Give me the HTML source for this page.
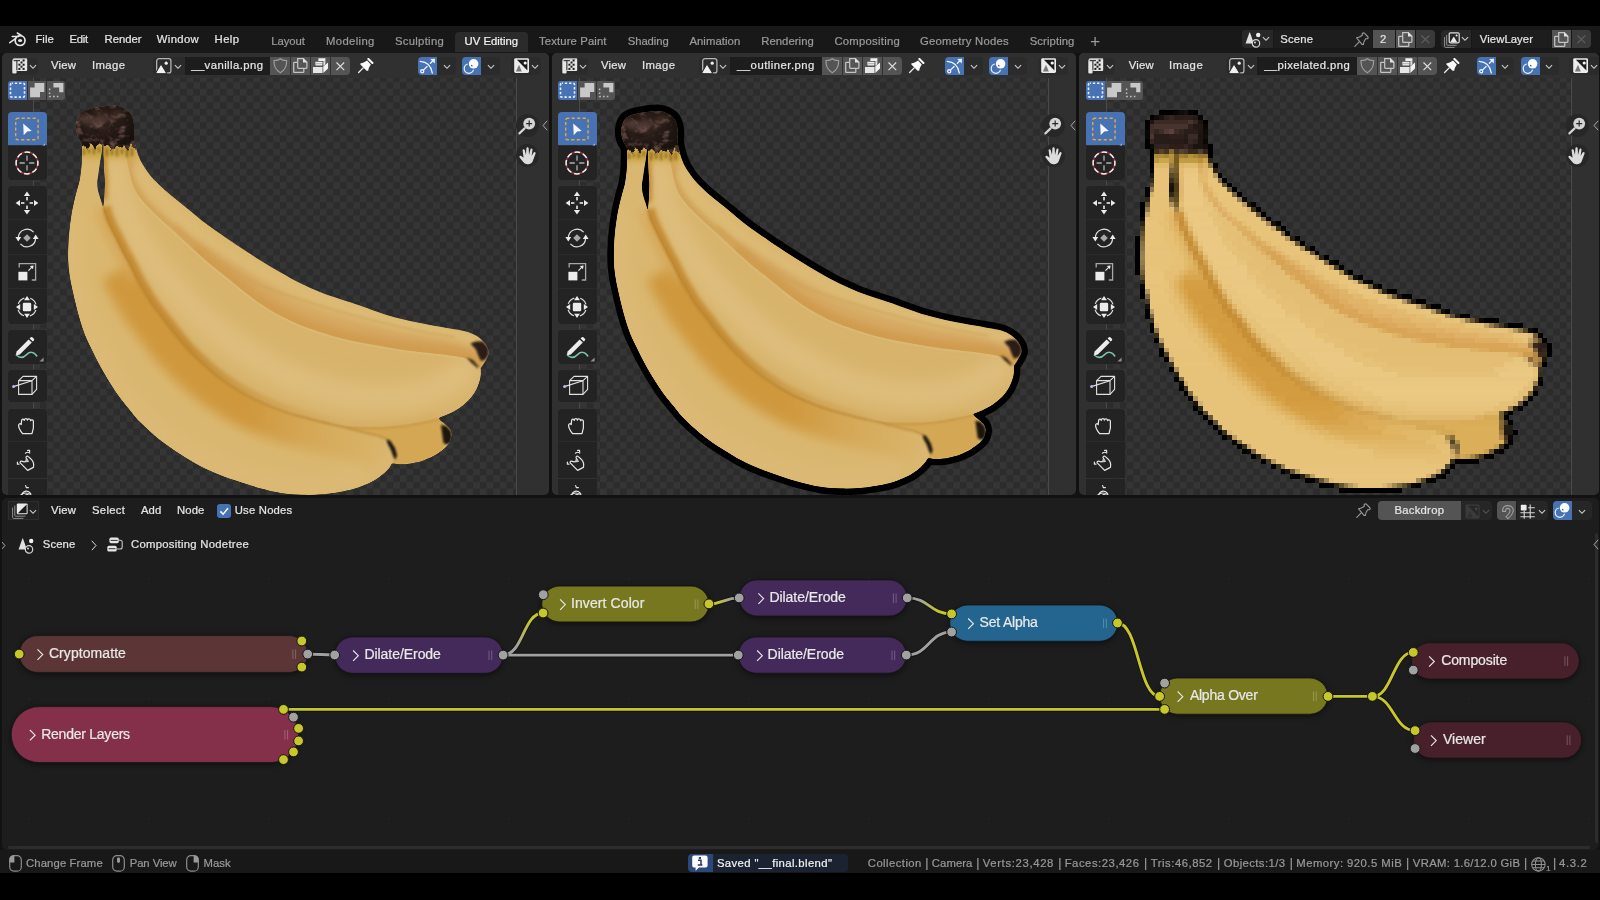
<!DOCTYPE html>
<html lang="en"><head><meta charset="utf-8"><title>Blender - UV Editing</title>
<style>
html,body{margin:0;padding:0;background:#000;}
body{width:1600px;height:900px;position:relative;overflow:hidden;will-change:transform;font-family:"Liberation Sans",sans-serif;}
div,span,svg{position:absolute;}
span{white-space:pre;line-height:1;-webkit-text-stroke:0.22px currentColor;}
.ed{border-radius:5px;overflow:hidden;}
.chk{background-color:#2c2c2c;background-image:conic-gradient(#353535 25%,#2c2c2c 0 50%,#353535 0 75%,#2c2c2c 0);background-size:13.3333px 13.3333px;}
</style></head>
<body>
<div style="left:0.00px;top:26.00px;width:1600.00px;height:847.00px;background:#121212;"></div>
<div style="left:0.00px;top:26.00px;width:1600.00px;height:27.00px;background:#181818;"></div>
<span style="left:35.40px;top:33.98px;font-size:11.3px;color:#e4e4e4;letter-spacing:0.049px;">File</span>
<span style="left:69.50px;top:33.98px;font-size:11.3px;color:#e4e4e4;letter-spacing:-0.240px;">Edit</span>
<span style="left:104.50px;top:33.98px;font-size:11.3px;color:#e4e4e4;letter-spacing:-0.013px;">Render</span>
<span style="left:156.75px;top:33.98px;font-size:11.3px;color:#e4e4e4;letter-spacing:0.357px;">Window</span>
<span style="left:214.60px;top:33.98px;font-size:11.3px;color:#e4e4e4;letter-spacing:0.419px;">Help</span>
<div style="left:455.00px;top:31.50px;width:72.50px;height:20.00px;background:#2b2b2b;border-radius:4px 4px 0 0;"></div>
<span style="left:271.25px;top:35.78px;font-size:11.3px;color:#9a9a9a;letter-spacing:-0.035px;">Layout</span>
<span style="left:326.00px;top:35.78px;font-size:11.3px;color:#9a9a9a;letter-spacing:0.364px;">Modeling</span>
<span style="left:395.00px;top:35.78px;font-size:11.3px;color:#9a9a9a;letter-spacing:0.283px;">Sculpting</span>
<span style="left:464.60px;top:35.78px;font-size:11.3px;color:#f0f0f0;">UV Editing</span>
<span style="left:539.00px;top:35.78px;font-size:11.3px;color:#9a9a9a;letter-spacing:0.129px;">Texture Paint</span>
<span style="left:627.75px;top:35.78px;font-size:11.3px;color:#9a9a9a;letter-spacing:-0.079px;">Shading</span>
<span style="left:689.40px;top:35.78px;font-size:11.3px;color:#9a9a9a;letter-spacing:0.075px;">Animation</span>
<span style="left:761.25px;top:35.78px;font-size:11.3px;color:#9a9a9a;letter-spacing:0.045px;">Rendering</span>
<span style="left:834.40px;top:35.78px;font-size:11.3px;color:#9a9a9a;letter-spacing:0.254px;">Compositing</span>
<span style="left:920.00px;top:35.78px;font-size:11.3px;color:#9a9a9a;letter-spacing:0.256px;">Geometry Nodes</span>
<span style="left:1029.75px;top:35.78px;font-size:11.3px;color:#9a9a9a;letter-spacing:0.085px;">Scripting</span>
<span style="left:1090.10px;top:33.84px;font-size:17.5px;color:#9a9a9a;-webkit-text-stroke:0;">+</span>
<div style="left:1242.00px;top:29.60px;width:31.00px;height:18.80px;background:#282828;border-radius:4px 0 0 4px;"></div>
<div style="left:1273.50px;top:29.60px;width:98.50px;height:18.80px;background:#1d1d1d;"></div>
<div style="left:1372.50px;top:29.60px;width:22.50px;height:18.80px;background:#545454;"></div>
<div style="left:1395.50px;top:29.60px;width:19.50px;height:18.80px;background:#545454;"></div>
<div style="left:1415.50px;top:29.60px;width:19.25px;height:18.80px;background:#3a3a3a;border-radius:0 4px 4px 0;"></div>
<span style="left:1280.25px;top:33.98px;font-size:11.3px;color:#e4e4e4;letter-spacing:0.179px;">Scene</span>
<span style="left:1380.00px;top:33.98px;font-size:11.3px;color:#e4e4e4;">2</span>
<div style="left:1440.60px;top:29.60px;width:30.90px;height:18.80px;background:#282828;border-radius:4px 0 0 4px;"></div>
<div style="left:1472.00px;top:29.60px;width:79.00px;height:18.80px;background:#1d1d1d;"></div>
<div style="left:1551.50px;top:29.60px;width:19.50px;height:18.80px;background:#545454;"></div>
<div style="left:1571.50px;top:29.60px;width:19.10px;height:18.80px;background:#3a3a3a;border-radius:0 4px 4px 0;"></div>
<span style="left:1479.75px;top:33.98px;font-size:11.3px;color:#e4e4e4;letter-spacing:0.087px;">ViewLayer</span>
<svg class="a" style="left:9.00px;top:32.30px" width="18" height="16" viewBox="0 0 18 16"><g fill="none" stroke="#e6e6e6" stroke-linecap="round"><circle cx="11.1" cy="8.6" r="4.9" stroke-width="1.7"/><path d="M8.3 1L12.3 3.5M3.2 4.5H9.8M0.8 10.7L6.8 6.3" stroke-width="1.5"/></g><ellipse cx="11.1" cy="8.5" rx="2.1" ry="1.5" fill="#e6e6e6"/></svg>
<svg class="a" style="left:1245.00px;top:31.50px" width="16" height="16" viewBox="0 0 16 16"><path d="M5 0.4L7.8 8.6V11.4H0.6L4.4 0.4Z" fill="#e0e0e0"/><circle cx="13.2" cy="3" r="2.2" fill="#f0f0f0"/><circle cx="11" cy="11.4" r="3.7" fill="none" stroke="#d6d6d6" stroke-width="1.2"/><circle cx="10" cy="10.4" r="1" fill="#d6d6d6"/></svg>
<svg class="a" style="left:1262.00px;top:36.30px" width="8" height="6" viewBox="0 0 8 6"><path d="M0.9 1.2L4 4.3l3.1-3.1" stroke="#d0d0d0" stroke-width="1.1" fill="none"/></svg>
<svg class="a" style="left:1353.50px;top:31.50px" width="16" height="16" viewBox="0 0 16 16"><g fill="none" stroke="#9a9a9a" stroke-width="1.1" stroke-linejoin="round" stroke-linecap="round"><path d="M0.8 14.3L5.2 9.9"/><path d="M2.6 5.8Q5.6 5.4 8.3 3.2L8.2 1.6Q9.5 0.2 10.6 1.4L13.6 4.5Q14.8 5.6 13.4 6.8L11.8 6.7Q9.6 9.4 9.4 12.4L8 12.4Z"/></g></svg>
<svg class="a" style="left:1398.00px;top:31.50px" width="15" height="15" viewBox="0 0 15 15"><g fill="none" stroke="#c4c4c4" stroke-width="1.25"><path d="M4 4.3H1.3Q0.7 4.3 0.7 4.9V13.7Q0.7 14.3 1.3 14.3H10.2Q10.8 14.3 10.8 13.7V11"/><path d="M4.7 0.7H10.4L13.9 4.2V9.6Q13.9 10.3 13.2 10.3H5.4Q4.7 10.3 4.7 9.6Z"/></g><path d="M10 0.2L14.4 4.6H10Z" fill="#e4e4e4"/></svg>
<svg class="a" style="left:1420.80px;top:34.60px" width="9" height="9" viewBox="0 0 9 9"><path d="M0.5 0.5L8.2 8.2M8.2 0.5L0.5 8.2" stroke="#5e5e5e" stroke-width="1.2" fill="none"/></svg>
<svg class="a" style="left:1444.00px;top:31.50px" width="16" height="16" viewBox="0 0 16 16"><g fill="none" stroke="#8e8e8e" stroke-width="1"><path d="M0.6 5V14.4Q0.6 15.4 1.6 15.4H10.6"/><path d="M2.7 3V12.3Q2.7 13.3 3.7 13.3H12.6"/></g><rect x="5.2" y="0.8" width="10" height="10" rx="1.2" fill="none" stroke="#dedede" stroke-width="1.2"/><path d="M6.2 10.2L9.8 4.6L13.2 10.2Z" fill="#ececec"/><circle cx="12.6" cy="3.6" r="1" fill="#ececec"/></svg>
<svg class="a" style="left:1461.00px;top:36.30px" width="8" height="6" viewBox="0 0 8 6"><path d="M0.9 1.2L4 4.3l3.1-3.1" stroke="#d0d0d0" stroke-width="1.1" fill="none"/></svg>
<svg class="a" style="left:1553.50px;top:31.50px" width="15" height="15" viewBox="0 0 15 15"><g fill="none" stroke="#c4c4c4" stroke-width="1.25"><path d="M4 4.3H1.3Q0.7 4.3 0.7 4.9V13.7Q0.7 14.3 1.3 14.3H10.2Q10.8 14.3 10.8 13.7V11"/><path d="M4.7 0.7H10.4L13.9 4.2V9.6Q13.9 10.3 13.2 10.3H5.4Q4.7 10.3 4.7 9.6Z"/></g><path d="M10 0.2L14.4 4.6H10Z" fill="#e4e4e4"/></svg>
<svg class="a" style="left:1576.60px;top:34.60px" width="9" height="9" viewBox="0 0 9 9"><path d="M0.5 0.5L8.2 8.2M8.2 0.5L0.5 8.2" stroke="#5e5e5e" stroke-width="1.2" fill="none"/></svg>
<div class="ed" style="left:1.5px;top:52.5px;width:547.0px;height:442.5px;background:#303030">
<div class="chk" style="left:31.50px;top:25.50px;width:483.30px;height:417px;background-position:-6.33px -9.13px"></div>
<div style="left:31.00px;top:25.50px;width:1.00px;height:417.00px;background:#4a4a4a;"></div>
<div style="left:514.30px;top:25.50px;width:1.00px;height:417.00px;background:#4a4a4a;"></div>
<svg class="a" style="left:31.50px;top:25.50px" width="483.30" height="417.00" viewBox="33.00 78.00 483.30 417.00" preserveAspectRatio="none">
<defs><clipPath id="b0clipA"><path d="M392.5 463.6C392.1 464.2 391.2 465.5 390.0 467.0C388.8 468.5 387.5 470.3 385.0 472.5C382.5 474.7 378.5 477.9 375.0 480.0C371.5 482.1 367.3 483.9 364.0 485.3C360.7 486.7 358.5 487.6 355.0 488.6C351.5 489.6 348.5 490.4 343.0 491.4C337.5 492.3 328.8 493.7 322.0 494.3C315.2 494.9 308.8 495.0 302.0 494.8C295.2 494.6 288.0 494.1 281.0 493.0C274.0 491.9 266.8 490.0 260.0 488.2C253.2 486.4 246.7 484.2 240.0 482.0C233.3 479.8 226.7 477.7 220.0 475.0C213.3 472.3 206.7 469.5 200.0 466.0C193.3 462.5 186.7 458.3 180.0 454.0C173.3 449.7 166.7 445.3 160.0 440.0C153.3 434.7 145.2 427.2 140.0 422.0C134.8 416.8 132.7 413.5 129.0 409.0C125.3 404.5 121.7 400.2 118.0 395.0C114.3 389.8 110.3 383.5 107.0 378.0C103.7 372.5 100.5 366.7 98.0 362.0C95.5 357.3 94.2 354.5 92.0 350.0C89.8 345.5 87.0 340.0 85.0 335.0C83.0 330.0 81.5 325.0 80.0 320.0C78.5 315.0 77.2 310.0 76.0 305.0C74.8 300.0 73.6 295.0 72.5 290.0C71.4 285.0 70.3 280.0 69.6 275.0C68.9 270.0 68.4 265.0 68.2 260.0C68.0 255.0 68.2 250.0 68.4 245.0C68.6 240.0 69.0 235.0 69.5 230.0C70.0 225.0 70.8 219.7 71.5 215.0C72.2 210.3 73.1 206.2 74.0 202.0C74.9 197.8 76.0 193.7 77.0 190.0C78.0 186.3 79.0 183.7 79.7 180.0C80.4 176.3 80.9 172.0 81.3 168.0C81.7 164.0 81.9 159.7 82.0 156.0C82.1 152.3 81.7 148.2 82.0 146.0C82.3 143.8 80.7 143.5 84.0 143.0C87.3 142.5 98.9 142.8 102.0 143.0C105.1 143.2 102.7 142.0 102.6 144.0C102.5 146.0 101.7 151.5 101.2 155.0C100.7 158.5 100.1 161.7 99.6 165.0C99.1 168.3 98.6 172.0 98.2 175.0C97.8 178.0 97.2 180.4 97.2 183.0C97.2 185.6 97.4 187.7 98.0 190.5C98.6 193.3 99.9 197.2 100.8 200.0C101.7 202.8 102.5 204.5 103.2 207.0C103.9 209.5 104.0 212.0 105.0 215.0C106.0 218.0 107.5 221.7 109.0 225.0C110.5 228.3 112.3 231.7 114.0 235.0C115.7 238.3 117.3 241.7 119.0 245.0C120.7 248.3 122.2 251.7 124.0 255.0C125.8 258.3 127.4 261.0 129.5 265.0C131.6 269.0 134.0 274.5 136.4 279.0C138.8 283.5 141.3 287.6 144.0 292.0C146.7 296.4 149.1 300.8 152.4 305.5C155.7 310.2 160.4 315.9 164.0 320.5C167.6 325.1 170.0 328.6 173.8 333.3C177.6 338.1 182.3 343.9 187.0 349.0C191.7 354.1 197.0 358.9 202.2 363.6C207.4 368.3 212.1 372.6 218.0 377.0C223.9 381.4 231.6 386.4 237.8 390.2C244.0 393.9 249.1 396.6 255.0 399.5C260.9 402.4 267.5 405.2 273.3 407.5C279.1 409.8 284.1 411.6 290.0 413.5C295.9 415.4 302.2 416.9 308.9 418.7C315.6 420.4 323.1 422.3 330.0 424.0C336.9 425.7 343.3 427.3 350.0 429.0C356.7 430.7 365.0 432.8 370.0 434.0C375.0 435.2 377.2 435.6 380.0 436.5C382.8 437.4 384.9 437.9 387.0 439.5C389.1 441.1 391.2 443.4 392.5 446.0C393.8 448.6 395.0 452.1 395.0 455.0C395.0 457.9 392.9 462.2 392.5 463.6C392.1 465.0 392.9 463.0 392.5 463.6Z"/></clipPath><clipPath id="b0clipB"><path d="M124.5 147.5C125.1 150.8 126.2 156.8 127.5 162.5C128.8 168.2 130.0 176.2 132.0 182.0C134.0 187.8 136.0 192.0 139.5 197.0C143.0 202.0 147.8 206.8 153.0 212.0C158.2 217.2 164.5 222.5 171.0 228.5C177.5 234.5 185.5 242.1 192.0 248.0C198.5 253.9 203.7 258.7 210.0 264.0C216.3 269.3 224.3 275.4 230.0 280.0C235.7 284.6 239.0 287.6 244.0 291.5C249.0 295.4 254.0 299.5 260.0 303.5C266.0 307.5 273.3 311.9 280.0 315.5C286.7 319.1 293.3 322.2 300.0 325.0C306.7 327.8 313.3 329.8 320.0 332.0C326.7 334.2 333.3 336.2 340.0 338.0C346.7 339.8 353.3 341.2 360.0 342.5C366.7 343.8 373.3 344.8 380.0 346.0C386.7 347.2 393.3 348.5 400.0 349.5C406.7 350.5 411.7 351.0 420.0 352.0C428.3 353.0 442.0 354.2 450.0 355.5C458.0 356.8 462.9 357.3 468.0 359.5C473.1 361.7 478.4 365.8 480.5 368.5C482.6 371.2 480.9 373.6 480.6 376.0C480.4 378.4 479.9 380.3 479.0 383.0C478.1 385.7 476.8 389.0 475.0 392.0C473.2 395.0 470.8 398.2 468.0 401.0C465.2 403.8 461.3 406.8 458.0 409.0C454.7 411.2 451.2 412.8 448.0 414.3C444.8 415.9 443.7 417.0 439.0 418.3C434.3 419.6 426.5 421.1 420.0 422.3C413.5 423.5 406.7 424.9 400.0 425.7C393.3 426.5 388.3 427.0 380.0 427.2C371.7 427.4 358.3 427.3 350.0 426.8C341.7 426.3 336.9 425.4 330.0 424.0C323.1 422.6 315.6 420.4 308.9 418.7C302.2 416.9 295.9 415.4 290.0 413.5C284.1 411.6 279.1 409.8 273.3 407.5C267.5 405.2 260.9 402.4 255.0 399.5C249.1 396.6 244.0 393.9 237.8 390.2C231.6 386.4 223.9 381.4 218.0 377.0C212.1 372.6 207.4 368.3 202.2 363.6C197.0 358.9 191.7 354.1 187.0 349.0C182.3 343.9 177.6 338.1 173.8 333.3C170.0 328.6 167.6 325.1 164.0 320.5C160.4 315.9 155.7 310.2 152.4 305.5C149.1 300.8 146.7 296.4 144.0 292.0C141.3 287.6 138.8 283.5 136.4 279.0C134.0 274.5 131.6 269.0 129.5 265.0C127.4 261.0 125.8 258.3 124.0 255.0C122.2 251.7 120.7 248.3 119.0 245.0C117.3 241.7 115.7 238.3 114.0 235.0C112.3 231.7 110.5 228.3 109.0 225.0C107.5 221.7 106.0 218.0 105.0 215.0C104.0 212.0 103.3 209.5 103.2 207.0C103.1 204.5 103.9 202.8 104.2 200.0C104.5 197.2 104.7 193.3 104.8 190.0C104.9 186.7 105.1 183.3 105.0 180.0C104.9 176.7 104.5 173.7 104.3 170.0C104.1 166.3 103.9 162.0 103.8 158.0C103.7 154.0 103.2 148.5 103.6 146.0C104.0 143.5 102.6 143.5 106.0 143.0C109.4 142.5 120.9 142.2 124.0 143.0C127.1 143.8 123.9 144.2 124.5 147.5Z"/></clipPath><clipPath id="b0bclip"><path clip-rule="evenodd" d="M82.0 146.0C81.8 145.3 81.7 143.5 81.0 142.0C80.3 140.5 78.8 138.8 78.0 137.0C77.2 135.2 76.6 133.0 76.3 131.0C76.0 129.0 75.8 127.2 76.0 125.0C76.2 122.8 76.8 120.0 77.5 118.0C78.2 116.0 79.2 114.3 80.5 113.0C81.8 111.7 83.1 111.1 85.0 110.3C86.9 109.5 89.5 108.8 92.0 108.2C94.5 107.6 97.3 107.2 100.0 106.8C102.7 106.4 105.5 106.0 108.0 105.8C110.5 105.6 112.7 105.3 115.0 105.6C117.3 105.8 119.8 106.4 122.0 107.3C124.2 108.2 126.4 109.5 128.0 110.8C129.6 112.1 130.6 113.5 131.5 115.0C132.4 116.5 132.8 117.8 133.3 120.0C133.8 122.2 134.3 125.3 134.4 128.0C134.5 130.7 133.9 133.5 134.0 136.0C134.1 138.5 134.8 141.8 135.0 143.0C135.3 144.3 136.2 148.3 137.0 151.0C137.8 153.7 138.7 156.2 140.0 159.0C141.3 161.8 143.3 165.3 145.0 168.0C146.7 170.7 148.3 172.9 150.0 175.0C151.7 177.1 152.5 178.0 155.0 180.5C157.5 183.0 161.3 186.8 165.0 190.0C168.7 193.2 172.8 196.6 177.0 200.0C181.2 203.4 185.8 207.1 190.0 210.5C194.2 213.9 197.8 217.2 202.0 220.5C206.2 223.8 210.7 226.9 215.0 230.0C219.3 233.1 223.8 236.2 228.0 239.0C232.2 241.8 234.7 243.5 240.0 247.0C245.3 250.5 253.3 255.8 260.0 260.0C266.7 264.2 273.3 268.2 280.0 272.0C286.7 275.8 293.3 279.7 300.0 283.0C306.7 286.3 313.3 289.3 320.0 292.0C326.7 294.7 333.3 296.8 340.0 299.0C346.7 301.2 354.2 303.5 360.0 305.5C365.8 307.5 370.0 309.2 375.0 311.0C380.0 312.8 384.2 314.3 390.0 316.0C395.8 317.7 403.3 319.5 410.0 321.0C416.7 322.5 423.3 323.8 430.0 325.0C436.7 326.2 444.2 327.5 450.0 328.5C455.8 329.5 460.8 330.1 465.0 331.2C469.2 332.3 472.0 333.4 475.0 335.0C478.0 336.6 480.9 338.8 483.0 341.0C485.1 343.2 486.7 345.8 487.6 348.0C488.5 350.2 488.7 352.2 488.5 354.0C488.3 355.8 487.3 357.3 486.5 359.0C485.7 360.7 484.5 362.4 483.5 364.0C482.5 365.6 481.0 367.8 480.5 368.5C480.5 369.8 480.9 373.6 480.6 376.0C480.4 378.4 479.9 380.3 479.0 383.0C478.1 385.7 476.8 389.0 475.0 392.0C473.2 395.0 470.8 398.2 468.0 401.0C465.2 403.8 461.3 406.8 458.0 409.0C454.7 411.2 451.2 412.8 448.0 414.3C444.8 415.9 439.5 416.7 439.0 418.3C438.5 419.9 443.2 422.2 445.0 424.0C446.8 425.8 448.9 427.2 450.0 429.0C451.1 430.8 451.6 432.7 451.7 434.5C451.8 436.3 451.2 438.2 450.6 440.0C450.0 441.8 449.4 443.2 448.0 445.0C446.6 446.8 444.3 448.7 442.0 450.5C439.7 452.3 437.3 454.1 434.0 455.8C430.7 457.6 426.0 459.7 422.0 461.0C418.0 462.3 413.7 463.1 410.0 463.7C406.3 464.2 402.9 464.3 400.0 464.3C397.1 464.3 394.2 463.2 392.5 463.6C390.8 464.1 391.2 465.5 390.0 467.0C388.8 468.5 387.5 470.3 385.0 472.5C382.5 474.7 378.5 477.9 375.0 480.0C371.5 482.1 367.3 483.9 364.0 485.3C360.7 486.7 358.5 487.6 355.0 488.6C351.5 489.6 348.5 490.4 343.0 491.4C337.5 492.3 328.8 493.7 322.0 494.3C315.2 494.9 308.8 495.0 302.0 494.8C295.2 494.6 288.0 494.1 281.0 493.0C274.0 491.9 266.8 490.0 260.0 488.2C253.2 486.4 246.7 484.2 240.0 482.0C233.3 479.8 226.7 477.7 220.0 475.0C213.3 472.3 206.7 469.5 200.0 466.0C193.3 462.5 186.7 458.3 180.0 454.0C173.3 449.7 166.7 445.3 160.0 440.0C153.3 434.7 145.2 427.2 140.0 422.0C134.8 416.8 132.7 413.5 129.0 409.0C125.3 404.5 121.7 400.2 118.0 395.0C114.3 389.8 110.3 383.5 107.0 378.0C103.7 372.5 100.5 366.7 98.0 362.0C95.5 357.3 94.2 354.5 92.0 350.0C89.8 345.5 87.0 340.0 85.0 335.0C83.0 330.0 81.5 325.0 80.0 320.0C78.5 315.0 77.2 310.0 76.0 305.0C74.8 300.0 73.6 295.0 72.5 290.0C71.4 285.0 70.3 280.0 69.6 275.0C68.9 270.0 68.4 265.0 68.2 260.0C68.0 255.0 68.2 250.0 68.4 245.0C68.6 240.0 69.0 235.0 69.5 230.0C70.0 225.0 70.8 219.7 71.5 215.0C72.2 210.3 73.1 206.2 74.0 202.0C74.9 197.8 76.0 193.7 77.0 190.0C78.0 186.3 79.0 183.7 79.7 180.0C80.4 176.3 80.9 172.0 81.3 168.0C81.7 164.0 81.9 159.7 82.0 156.0C82.1 152.3 82.0 147.7 82.0 146.0ZM102.6 144.0C102.2 145.5 101.7 151.5 101.2 155.0C100.7 158.5 100.1 161.7 99.6 165.0C99.1 168.3 98.6 172.0 98.2 175.0C97.8 178.0 97.2 180.4 97.2 183.0C97.2 185.6 97.4 187.7 98.0 190.5C98.6 193.3 99.9 197.2 100.8 200.0C101.7 202.8 102.6 207.0 103.2 207.0C103.8 207.0 103.9 202.8 104.2 200.0C104.5 197.2 104.7 193.3 104.8 190.0C104.9 186.7 105.1 183.3 105.0 180.0C104.9 176.7 104.5 173.7 104.3 170.0C104.1 166.3 103.9 162.0 103.8 158.0C103.7 154.0 103.8 148.3 103.6 146.0C103.4 143.7 103.0 142.5 102.6 144.0Z"/></clipPath>
<filter id="b0bl3" filterUnits="userSpaceOnUse" x="30" y="70" width="500" height="460"><feGaussianBlur stdDeviation="3"/></filter>
<filter id="b0bl6" filterUnits="userSpaceOnUse" x="30" y="70" width="500" height="460"><feGaussianBlur stdDeviation="6"/></filter>
<filter id="b0bl10" filterUnits="userSpaceOnUse" x="30" y="70" width="500" height="460"><feGaussianBlur stdDeviation="10"/></filter>
<filter id="b0bl1" filterUnits="userSpaceOnUse" x="30" y="70" width="500" height="460"><feGaussianBlur stdDeviation="1.2"/></filter>
<filter id="b0bl2" filterUnits="userSpaceOnUse" x="30" y="70" width="500" height="460"><feGaussianBlur stdDeviation="2"/></filter>
<filter id="b0stx" color-interpolation-filters="sRGB" filterUnits="userSpaceOnUse" x="60" y="95" width="90" height="70"><feTurbulence type="fractalNoise" baseFrequency="0.11 0.14" numOctaves="3" seed="7" result="n"/><feColorMatrix in="n" type="matrix" values="0 0 0 0 0.43  0 0 0 0 0.31  0 0 0 0 0.29  3 0 0 0 -1.5" result="sp"/><feDisplacementMap in="SourceGraphic" in2="n" scale="7" xChannelSelector="R" yChannelSelector="G" result="d"/><feGaussianBlur in="d" stdDeviation="0.7" result="db"/><feComposite in="sp" in2="db" operator="in" result="s2"/><feMerge><feMergeNode in="db"/><feMergeNode in="s2"/></feMerge></filter>
<linearGradient id="b0ga" gradientUnits="userSpaceOnUse" x1="250" y1="0" x2="385" y2="0"><stop offset="0" stop-color="#cf983e"/><stop offset="1" stop-color="#d6aa58" stop-opacity="0.25"/></linearGradient><linearGradient id="b0gb" gradientUnits="userSpaceOnUse" x1="190" y1="0" x2="345" y2="0"><stop offset="0" stop-color="#c48c34"/><stop offset="1" stop-color="#d2a250" stop-opacity="0.2"/></linearGradient>
<radialGradient id="b0stemg" cx="0.42" cy="0.4" r="0.7"><stop offset="0" stop-color="#35251f"/><stop offset="0.5" stop-color="#221814"/><stop offset="1" stop-color="#110c0a"/></radialGradient></defs>
<g clip-path="url(#b0bclip)">
<path d="M82.0 146.0C81.8 145.3 81.7 143.5 81.0 142.0C80.3 140.5 78.8 138.8 78.0 137.0C77.2 135.2 76.6 133.0 76.3 131.0C76.0 129.0 75.8 127.2 76.0 125.0C76.2 122.8 76.8 120.0 77.5 118.0C78.2 116.0 79.2 114.3 80.5 113.0C81.8 111.7 83.1 111.1 85.0 110.3C86.9 109.5 89.5 108.8 92.0 108.2C94.5 107.6 97.3 107.2 100.0 106.8C102.7 106.4 105.5 106.0 108.0 105.8C110.5 105.6 112.7 105.3 115.0 105.6C117.3 105.8 119.8 106.4 122.0 107.3C124.2 108.2 126.4 109.5 128.0 110.8C129.6 112.1 130.6 113.5 131.5 115.0C132.4 116.5 132.8 117.8 133.3 120.0C133.8 122.2 134.3 125.3 134.4 128.0C134.5 130.7 133.9 133.5 134.0 136.0C134.1 138.5 134.8 141.8 135.0 143.0C135.3 144.3 136.2 148.3 137.0 151.0C137.8 153.7 138.7 156.2 140.0 159.0C141.3 161.8 143.3 165.3 145.0 168.0C146.7 170.7 148.3 172.9 150.0 175.0C151.7 177.1 152.5 178.0 155.0 180.5C157.5 183.0 161.3 186.8 165.0 190.0C168.7 193.2 172.8 196.6 177.0 200.0C181.2 203.4 185.8 207.1 190.0 210.5C194.2 213.9 197.8 217.2 202.0 220.5C206.2 223.8 210.7 226.9 215.0 230.0C219.3 233.1 223.8 236.2 228.0 239.0C232.2 241.8 234.7 243.5 240.0 247.0C245.3 250.5 253.3 255.8 260.0 260.0C266.7 264.2 273.3 268.2 280.0 272.0C286.7 275.8 293.3 279.7 300.0 283.0C306.7 286.3 313.3 289.3 320.0 292.0C326.7 294.7 333.3 296.8 340.0 299.0C346.7 301.2 354.2 303.5 360.0 305.5C365.8 307.5 370.0 309.2 375.0 311.0C380.0 312.8 384.2 314.3 390.0 316.0C395.8 317.7 403.3 319.5 410.0 321.0C416.7 322.5 423.3 323.8 430.0 325.0C436.7 326.2 444.2 327.5 450.0 328.5C455.8 329.5 460.8 330.1 465.0 331.2C469.2 332.3 472.0 333.4 475.0 335.0C478.0 336.6 480.9 338.8 483.0 341.0C485.1 343.2 486.7 345.8 487.6 348.0C488.5 350.2 488.7 352.2 488.5 354.0C488.3 355.8 487.3 357.3 486.5 359.0C485.7 360.7 484.5 362.4 483.5 364.0C482.5 365.6 481.0 367.8 480.5 368.5C480.5 369.8 480.9 373.6 480.6 376.0C480.4 378.4 479.9 380.3 479.0 383.0C478.1 385.7 476.8 389.0 475.0 392.0C473.2 395.0 470.8 398.2 468.0 401.0C465.2 403.8 461.3 406.8 458.0 409.0C454.7 411.2 451.2 412.8 448.0 414.3C444.8 415.9 439.5 416.7 439.0 418.3C438.5 419.9 443.2 422.2 445.0 424.0C446.8 425.8 448.9 427.2 450.0 429.0C451.1 430.8 451.6 432.7 451.7 434.5C451.8 436.3 451.2 438.2 450.6 440.0C450.0 441.8 449.4 443.2 448.0 445.0C446.6 446.8 444.3 448.7 442.0 450.5C439.7 452.3 437.3 454.1 434.0 455.8C430.7 457.6 426.0 459.7 422.0 461.0C418.0 462.3 413.7 463.1 410.0 463.7C406.3 464.2 402.9 464.3 400.0 464.3C397.1 464.3 394.2 463.2 392.5 463.6C390.8 464.1 391.2 465.5 390.0 467.0C388.8 468.5 387.5 470.3 385.0 472.5C382.5 474.7 378.5 477.9 375.0 480.0C371.5 482.1 367.3 483.9 364.0 485.3C360.7 486.7 358.5 487.6 355.0 488.6C351.5 489.6 348.5 490.4 343.0 491.4C337.5 492.3 328.8 493.7 322.0 494.3C315.2 494.9 308.8 495.0 302.0 494.8C295.2 494.6 288.0 494.1 281.0 493.0C274.0 491.9 266.8 490.0 260.0 488.2C253.2 486.4 246.7 484.2 240.0 482.0C233.3 479.8 226.7 477.7 220.0 475.0C213.3 472.3 206.7 469.5 200.0 466.0C193.3 462.5 186.7 458.3 180.0 454.0C173.3 449.7 166.7 445.3 160.0 440.0C153.3 434.7 145.2 427.2 140.0 422.0C134.8 416.8 132.7 413.5 129.0 409.0C125.3 404.5 121.7 400.2 118.0 395.0C114.3 389.8 110.3 383.5 107.0 378.0C103.7 372.5 100.5 366.7 98.0 362.0C95.5 357.3 94.2 354.5 92.0 350.0C89.8 345.5 87.0 340.0 85.0 335.0C83.0 330.0 81.5 325.0 80.0 320.0C78.5 315.0 77.2 310.0 76.0 305.0C74.8 300.0 73.6 295.0 72.5 290.0C71.4 285.0 70.3 280.0 69.6 275.0C68.9 270.0 68.4 265.0 68.2 260.0C68.0 255.0 68.2 250.0 68.4 245.0C68.6 240.0 69.0 235.0 69.5 230.0C70.0 225.0 70.8 219.7 71.5 215.0C72.2 210.3 73.1 206.2 74.0 202.0C74.9 197.8 76.0 193.7 77.0 190.0C78.0 186.3 79.0 183.7 79.7 180.0C80.4 176.3 80.9 172.0 81.3 168.0C81.7 164.0 81.9 159.7 82.0 156.0C82.1 152.3 82.0 147.7 82.0 146.0Z" fill="#dab66e"/>
<path d="M192.0 248.0C195.0 250.7 203.7 258.7 210.0 264.0C216.3 269.3 224.3 275.4 230.0 280.0C235.7 284.6 239.0 287.6 244.0 291.5C249.0 295.4 254.0 299.5 260.0 303.5C266.0 307.5 273.3 311.9 280.0 315.5C286.7 319.1 293.3 322.2 300.0 325.0C306.7 327.8 313.3 329.8 320.0 332.0C326.7 334.2 333.3 336.2 340.0 338.0C346.7 339.8 353.3 341.2 360.0 342.5C366.7 343.8 373.3 344.8 380.0 346.0C386.7 347.2 393.3 348.5 400.0 349.5C406.7 350.5 411.7 351.0 420.0 352.0C428.3 353.0 442.0 354.2 450.0 355.5C458.0 356.8 462.9 357.3 468.0 359.5C473.1 361.7 478.4 367.0 480.5 368.5" fill="none" stroke="#d5a65e" stroke-width="40" filter="url(#b0bl6)"/>
<path d="M171.0 228.5C174.5 231.8 185.5 242.1 192.0 248.0C198.5 253.9 203.7 258.7 210.0 264.0C216.3 269.3 224.3 275.4 230.0 280.0C235.7 284.6 239.0 287.6 244.0 291.5C249.0 295.4 254.0 299.5 260.0 303.5C266.0 307.5 273.3 311.9 280.0 315.5C286.7 319.1 293.3 322.2 300.0 325.0C306.7 327.8 313.3 329.8 320.0 332.0C326.7 334.2 333.3 336.2 340.0 338.0C346.7 339.8 353.3 341.2 360.0 342.5C366.7 343.8 373.3 344.8 380.0 346.0C386.7 347.2 393.3 348.5 400.0 349.5C406.7 350.5 411.7 351.0 420.0 352.0C428.3 353.0 442.0 354.2 450.0 355.5C458.0 356.8 462.9 357.3 468.0 359.5C473.1 361.7 478.4 367.0 480.5 368.5" fill="none" stroke="#d09c50" stroke-width="16" filter="url(#b0bl3)"/>
<path d="M124.5 147.5C125.0 150.0 126.2 156.8 127.5 162.5C128.8 168.2 130.0 176.2 132.0 182.0C134.0 187.8 136.0 192.0 139.5 197.0C143.0 202.0 147.8 206.8 153.0 212.0C158.2 217.2 164.5 222.5 171.0 228.5C177.5 234.5 188.5 244.8 192.0 248.0" fill="none" stroke="#d3a55c" stroke-width="12" filter="url(#b0bl3)"/>
<path d="M140.0 172.0C142.0 175.0 147.0 184.0 152.0 190.0C157.0 196.0 162.8 201.5 170.0 208.0C177.2 214.5 185.8 222.0 195.0 229.0C204.2 236.0 214.2 243.2 225.0 250.0C235.8 256.8 247.5 263.3 260.0 270.0C272.5 276.7 285.8 283.8 300.0 290.0C314.2 296.2 329.2 301.7 345.0 307.0C360.8 312.3 379.2 318.0 395.0 322.0C410.8 326.0 427.2 328.2 440.0 331.0C452.8 333.8 466.7 337.7 472.0 339.0" fill="none" stroke="#dcba74" stroke-width="12" filter="url(#b0bl3)" stroke-linecap="round"/>
<path d="M128.0 165.0C128.7 167.5 130.0 175.0 132.0 180.0C134.0 185.0 137.0 190.3 140.0 195.0C143.0 199.7 145.8 203.7 150.0 208.0C154.2 212.3 160.0 216.8 165.0 221.0C170.0 225.2 174.5 228.7 180.0 233.0C185.5 237.3 191.3 242.0 198.0 247.0C204.7 252.0 212.2 257.8 220.0 263.0C227.8 268.2 235.8 273.3 245.0 278.0C254.2 282.7 265.0 287.2 275.0 291.0C285.0 294.8 294.2 297.6 305.0 301.0C315.8 304.4 327.5 308.0 340.0 311.5C352.5 315.0 366.7 318.8 380.0 322.0C393.3 325.2 407.5 328.5 420.0 331.0C432.5 333.5 449.2 336.0 455.0 337.0" fill="none" stroke="#cda35a" stroke-width="1.6" filter="url(#b0bl1)" opacity="0.8"/>
<g clip-path="url(#b0clipB)">
<path d="M124.5 147.5C125.1 150.8 126.2 156.8 127.5 162.5C128.8 168.2 130.0 176.2 132.0 182.0C134.0 187.8 136.0 192.0 139.5 197.0C143.0 202.0 147.8 206.8 153.0 212.0C158.2 217.2 164.5 222.5 171.0 228.5C177.5 234.5 185.5 242.1 192.0 248.0C198.5 253.9 203.7 258.7 210.0 264.0C216.3 269.3 224.3 275.4 230.0 280.0C235.7 284.6 239.0 287.6 244.0 291.5C249.0 295.4 254.0 299.5 260.0 303.5C266.0 307.5 273.3 311.9 280.0 315.5C286.7 319.1 293.3 322.2 300.0 325.0C306.7 327.8 313.3 329.8 320.0 332.0C326.7 334.2 333.3 336.2 340.0 338.0C346.7 339.8 353.3 341.2 360.0 342.5C366.7 343.8 373.3 344.8 380.0 346.0C386.7 347.2 393.3 348.5 400.0 349.5C406.7 350.5 411.7 351.0 420.0 352.0C428.3 353.0 442.0 354.2 450.0 355.5C458.0 356.8 462.9 357.3 468.0 359.5C473.1 361.7 478.4 365.8 480.5 368.5C482.6 371.2 480.9 373.6 480.6 376.0C480.4 378.4 479.9 380.3 479.0 383.0C478.1 385.7 476.8 389.0 475.0 392.0C473.2 395.0 470.8 398.2 468.0 401.0C465.2 403.8 461.3 406.8 458.0 409.0C454.7 411.2 451.2 412.8 448.0 414.3C444.8 415.9 443.7 417.0 439.0 418.3C434.3 419.6 426.5 421.1 420.0 422.3C413.5 423.5 406.7 424.9 400.0 425.7C393.3 426.5 388.3 427.0 380.0 427.2C371.7 427.4 358.3 427.3 350.0 426.8C341.7 426.3 336.9 425.4 330.0 424.0C323.1 422.6 315.6 420.4 308.9 418.7C302.2 416.9 295.9 415.4 290.0 413.5C284.1 411.6 279.1 409.8 273.3 407.5C267.5 405.2 260.9 402.4 255.0 399.5C249.1 396.6 244.0 393.9 237.8 390.2C231.6 386.4 223.9 381.4 218.0 377.0C212.1 372.6 207.4 368.3 202.2 363.6C197.0 358.9 191.7 354.1 187.0 349.0C182.3 343.9 177.6 338.1 173.8 333.3C170.0 328.6 167.6 325.1 164.0 320.5C160.4 315.9 155.7 310.2 152.4 305.5C149.1 300.8 146.7 296.4 144.0 292.0C141.3 287.6 138.8 283.5 136.4 279.0C134.0 274.5 131.6 269.0 129.5 265.0C127.4 261.0 125.8 258.3 124.0 255.0C122.2 251.7 120.7 248.3 119.0 245.0C117.3 241.7 115.7 238.3 114.0 235.0C112.3 231.7 110.5 228.3 109.0 225.0C107.5 221.7 106.0 218.0 105.0 215.0C104.0 212.0 103.3 209.5 103.2 207.0C103.1 204.5 103.9 202.8 104.2 200.0C104.5 197.2 104.7 193.3 104.8 190.0C104.9 186.7 105.1 183.3 105.0 180.0C104.9 176.7 104.5 173.7 104.3 170.0C104.1 166.3 103.9 162.0 103.8 158.0C103.7 154.0 103.2 148.5 103.6 146.0C104.0 143.5 102.6 143.5 106.0 143.0C109.4 142.5 120.9 142.2 124.0 143.0C127.1 143.8 123.9 144.2 124.5 147.5Z" fill="#d7b36b"/>
<path d="M113.0 165.0C114.2 170.8 116.3 188.3 120.0 200.0C123.7 211.7 129.2 224.2 135.0 235.0C140.8 245.8 147.5 255.0 155.0 265.0C162.5 275.0 170.8 285.0 180.0 295.0C189.2 305.0 198.3 315.0 210.0 325.0C221.7 335.0 235.8 345.8 250.0 355.0C264.2 364.2 279.2 373.3 295.0 380.0C310.8 386.7 328.3 392.0 345.0 395.0C361.7 398.0 379.2 399.2 395.0 398.0C410.8 396.8 428.2 392.7 440.0 388.0C451.8 383.3 461.7 373.0 466.0 370.0" fill="none" stroke="#dfbf7f" stroke-width="26" filter="url(#b0bl10)" stroke-linecap="round"/>
<path d="M139.5 197.0C141.8 199.5 147.8 206.8 153.0 212.0C158.2 217.2 164.5 222.5 171.0 228.5C177.5 234.5 185.5 242.1 192.0 248.0C198.5 253.9 203.7 258.7 210.0 264.0C216.3 269.3 224.3 275.4 230.0 280.0C235.7 284.6 239.0 287.6 244.0 291.5C249.0 295.4 254.0 299.5 260.0 303.5C266.0 307.5 273.3 311.9 280.0 315.5C286.7 319.1 293.3 322.2 300.0 325.0C306.7 327.8 313.3 329.8 320.0 332.0C326.7 334.2 333.3 336.2 340.0 338.0C346.7 339.8 353.3 341.2 360.0 342.5C366.7 343.8 373.3 344.8 380.0 346.0C386.7 347.2 393.3 348.5 400.0 349.5C406.7 350.5 411.7 351.0 420.0 352.0C428.3 353.0 442.0 354.2 450.0 355.5C458.0 356.8 462.9 357.3 468.0 359.5C473.1 361.7 478.4 367.0 480.5 368.5" fill="none" stroke="#e0c080" stroke-width="3" filter="url(#b0bl1)" opacity="0.7"/>
<path d="M103.2 207.0C103.5 208.3 104.0 212.0 105.0 215.0C106.0 218.0 107.5 221.7 109.0 225.0C110.5 228.3 112.3 231.7 114.0 235.0C115.7 238.3 117.3 241.7 119.0 245.0C120.7 248.3 122.2 251.7 124.0 255.0C125.8 258.3 127.4 261.0 129.5 265.0C131.6 269.0 134.0 274.5 136.4 279.0C138.8 283.5 141.3 287.6 144.0 292.0C146.7 296.4 149.1 300.8 152.4 305.5C155.7 310.2 160.4 315.9 164.0 320.5C167.6 325.1 170.0 328.6 173.8 333.3C177.6 338.1 182.3 343.9 187.0 349.0C191.7 354.1 197.0 358.9 202.2 363.6C207.4 368.3 212.1 372.6 218.0 377.0C223.9 381.4 231.6 386.4 237.8 390.2C244.0 393.9 249.1 396.6 255.0 399.5C260.9 402.4 267.5 405.2 273.3 407.5C279.1 409.8 284.1 411.6 290.0 413.5C295.9 415.4 302.2 416.9 308.9 418.7C315.6 420.4 323.1 422.6 330.0 424.0C336.9 425.4 341.7 426.3 350.0 426.8C358.3 427.3 371.7 427.4 380.0 427.2C388.3 427.0 393.3 426.5 400.0 425.7C406.7 424.9 413.5 423.5 420.0 422.3C426.5 421.1 435.8 419.0 439.0 418.3" fill="none" stroke="url(#b0gb)" stroke-width="15" filter="url(#b0bl2)"/>
<path d="M104.2 200.0C104.3 198.3 104.7 193.3 104.8 190.0C104.9 186.7 105.1 183.3 105.0 180.0C104.9 176.7 104.5 173.7 104.3 170.0C104.1 166.3 103.9 162.0 103.8 158.0C103.7 154.0 103.6 148.0 103.6 146.0" fill="none" stroke="#c48c34" stroke-width="6" filter="url(#b0bl2)"/>
</g>
<path d="M330 424L350 429L370 434L380 436.5L387 439.5L392.5 463.6L400 464.3L422 461L442 450.5L451.7 434.5L439 418.3L439 418.3L420 422.3L400 425.7L380 427.2L350 426.8L330 424Z" fill="#d3a754"/>
<path d="M330.0 424.0C333.3 424.5 341.7 426.3 350.0 426.8C358.3 427.3 371.7 427.4 380.0 427.2C388.3 427.0 393.3 426.5 400.0 425.7C406.7 424.9 413.5 423.5 420.0 422.3C426.5 421.1 435.8 419.0 439.0 418.3" fill="none" stroke="#c2903c" stroke-width="1.2" filter="url(#b0bl1)" transform="translate(0 1)"/>
<g clip-path="url(#b0clipA)">
<path d="M392.5 463.6C392.1 464.2 391.2 465.5 390.0 467.0C388.8 468.5 387.5 470.3 385.0 472.5C382.5 474.7 378.5 477.9 375.0 480.0C371.5 482.1 367.3 483.9 364.0 485.3C360.7 486.7 358.5 487.6 355.0 488.6C351.5 489.6 348.5 490.4 343.0 491.4C337.5 492.3 328.8 493.7 322.0 494.3C315.2 494.9 308.8 495.0 302.0 494.8C295.2 494.6 288.0 494.1 281.0 493.0C274.0 491.9 266.8 490.0 260.0 488.2C253.2 486.4 246.7 484.2 240.0 482.0C233.3 479.8 226.7 477.7 220.0 475.0C213.3 472.3 206.7 469.5 200.0 466.0C193.3 462.5 186.7 458.3 180.0 454.0C173.3 449.7 166.7 445.3 160.0 440.0C153.3 434.7 145.2 427.2 140.0 422.0C134.8 416.8 132.7 413.5 129.0 409.0C125.3 404.5 121.7 400.2 118.0 395.0C114.3 389.8 110.3 383.5 107.0 378.0C103.7 372.5 100.5 366.7 98.0 362.0C95.5 357.3 94.2 354.5 92.0 350.0C89.8 345.5 87.0 340.0 85.0 335.0C83.0 330.0 81.5 325.0 80.0 320.0C78.5 315.0 77.2 310.0 76.0 305.0C74.8 300.0 73.6 295.0 72.5 290.0C71.4 285.0 70.3 280.0 69.6 275.0C68.9 270.0 68.4 265.0 68.2 260.0C68.0 255.0 68.2 250.0 68.4 245.0C68.6 240.0 69.0 235.0 69.5 230.0C70.0 225.0 70.8 219.7 71.5 215.0C72.2 210.3 73.1 206.2 74.0 202.0C74.9 197.8 76.0 193.7 77.0 190.0C78.0 186.3 79.0 183.7 79.7 180.0C80.4 176.3 80.9 172.0 81.3 168.0C81.7 164.0 81.9 159.7 82.0 156.0C82.1 152.3 81.7 148.2 82.0 146.0C82.3 143.8 80.7 143.5 84.0 143.0C87.3 142.5 98.9 142.8 102.0 143.0C105.1 143.2 102.7 142.0 102.6 144.0C102.5 146.0 101.7 151.5 101.2 155.0C100.7 158.5 100.1 161.7 99.6 165.0C99.1 168.3 98.6 172.0 98.2 175.0C97.8 178.0 97.2 180.4 97.2 183.0C97.2 185.6 97.4 187.7 98.0 190.5C98.6 193.3 99.9 197.2 100.8 200.0C101.7 202.8 102.5 204.5 103.2 207.0C103.9 209.5 104.0 212.0 105.0 215.0C106.0 218.0 107.5 221.7 109.0 225.0C110.5 228.3 112.3 231.7 114.0 235.0C115.7 238.3 117.3 241.7 119.0 245.0C120.7 248.3 122.2 251.7 124.0 255.0C125.8 258.3 127.4 261.0 129.5 265.0C131.6 269.0 134.0 274.5 136.4 279.0C138.8 283.5 141.3 287.6 144.0 292.0C146.7 296.4 149.1 300.8 152.4 305.5C155.7 310.2 160.4 315.9 164.0 320.5C167.6 325.1 170.0 328.6 173.8 333.3C177.6 338.1 182.3 343.9 187.0 349.0C191.7 354.1 197.0 358.9 202.2 363.6C207.4 368.3 212.1 372.6 218.0 377.0C223.9 381.4 231.6 386.4 237.8 390.2C244.0 393.9 249.1 396.6 255.0 399.5C260.9 402.4 267.5 405.2 273.3 407.5C279.1 409.8 284.1 411.6 290.0 413.5C295.9 415.4 302.2 416.9 308.9 418.7C315.6 420.4 323.1 422.3 330.0 424.0C336.9 425.7 343.3 427.3 350.0 429.0C356.7 430.7 365.0 432.8 370.0 434.0C375.0 435.2 377.2 435.6 380.0 436.5C382.8 437.4 384.9 437.9 387.0 439.5C389.1 441.1 391.2 443.4 392.5 446.0C393.8 448.6 395.0 452.1 395.0 455.0C395.0 457.9 392.9 462.2 392.5 463.6C392.1 465.0 392.9 463.0 392.5 463.6Z" fill="#dab770"/>
<path d="M129.5 265.0C130.7 267.3 134.0 274.5 136.4 279.0C138.8 283.5 141.3 287.6 144.0 292.0C146.7 296.4 149.1 300.8 152.4 305.5C155.7 310.2 160.4 315.9 164.0 320.5C167.6 325.1 170.0 328.6 173.8 333.3C177.6 338.1 182.3 343.9 187.0 349.0C191.7 354.1 197.0 358.9 202.2 363.6C207.4 368.3 212.1 372.6 218.0 377.0C223.9 381.4 231.6 386.4 237.8 390.2C244.0 393.9 249.1 396.6 255.0 399.5C260.9 402.4 267.5 405.2 273.3 407.5C279.1 409.8 284.1 411.6 290.0 413.5C295.9 415.4 302.2 416.9 308.9 418.7C315.6 420.4 323.1 422.3 330.0 424.0C336.9 425.7 343.3 427.3 350.0 429.0C356.7 430.7 365.0 432.8 370.0 434.0C375.0 435.2 377.2 435.6 380.0 436.5C382.8 437.4 385.8 439.0 387.0 439.5" fill="none" stroke="url(#b0ga)" stroke-width="62" filter="url(#b0bl6)"/>
<path d="M103.2 207.0C103.5 208.3 104.0 212.0 105.0 215.0C106.0 218.0 107.5 221.7 109.0 225.0C110.5 228.3 112.3 231.7 114.0 235.0C115.7 238.3 117.3 241.7 119.0 245.0C120.7 248.3 122.2 251.7 124.0 255.0C125.8 258.3 127.4 261.0 129.5 265.0C131.6 269.0 135.2 276.7 136.4 279.0" fill="none" stroke="#d5a654" stroke-width="14" filter="url(#b0bl6)"/>
<path d="M74.0 215.0C73.8 220.8 72.3 237.5 73.0 250.0C73.7 262.5 75.5 277.5 78.0 290.0C80.5 302.5 84.0 314.2 88.0 325.0C92.0 335.8 96.3 344.5 102.0 355.0C107.7 365.5 114.3 377.2 122.0 388.0C129.7 398.8 137.5 410.2 148.0 420.0C158.5 429.8 172.2 439.3 185.0 447.0C197.8 454.7 210.8 460.5 225.0 466.0C239.2 471.5 255.0 476.8 270.0 480.0C285.0 483.2 300.8 485.7 315.0 485.0C329.2 484.3 348.3 477.5 355.0 476.0" fill="none" stroke="#dcba76" stroke-width="16" filter="url(#b0bl6)" stroke-linecap="round"/>
</g>
<path d="M103.2 207.0C103.5 208.3 104.0 212.0 105.0 215.0C106.0 218.0 107.5 221.7 109.0 225.0C110.5 228.3 112.3 231.7 114.0 235.0C115.7 238.3 117.3 241.7 119.0 245.0C120.7 248.3 122.2 251.7 124.0 255.0C125.8 258.3 127.4 261.0 129.5 265.0C131.6 269.0 134.0 274.5 136.4 279.0C138.8 283.5 141.3 287.6 144.0 292.0C146.7 296.4 149.1 300.8 152.4 305.5C155.7 310.2 160.4 315.9 164.0 320.5C167.6 325.1 170.0 328.6 173.8 333.3C177.6 338.1 182.3 343.9 187.0 349.0C191.7 354.1 197.0 358.9 202.2 363.6C207.4 368.3 212.1 372.6 218.0 377.0C223.9 381.4 231.6 386.4 237.8 390.2C244.0 393.9 249.1 396.6 255.0 399.5C260.9 402.4 267.5 405.2 273.3 407.5C279.1 409.8 284.1 411.6 290.0 413.5C295.9 415.4 302.2 416.9 308.9 418.7C315.6 420.4 326.5 423.1 330.0 424.0" fill="none" stroke="#b07c2a" stroke-width="1.3" filter="url(#b0bl1)"/>
<path d="M330.0 424.0C333.3 424.8 343.3 427.3 350.0 429.0C356.7 430.7 365.0 432.8 370.0 434.0C375.0 435.2 377.2 435.6 380.0 436.5C382.8 437.4 385.8 439.0 387.0 439.5" fill="none" stroke="#b98a3a" stroke-width="1.4" filter="url(#b0bl1)"/>
<path d="M470.5 343.5L476 341.5L483 341.5L488.5 348L488.6 355L485.5 359.5L481 361L478.5 356L476 349.5Z" fill="#2a1a12" filter="url(#b0bl1)"/>
<path d="M466.5 357.5L473 360L478.5 366.5L478 368.5L471 362.5Z" fill="#3a2814" filter="url(#b0bl1)"/>
<path d="M441 425L446.5 426L451 431L452 437L450.5 443L446.5 444.5L443.5 443L442.5 436Z" fill="#1c140c" filter="url(#b0bl1)"/>
<path d="M386.5 439L390.5 441L395 448L397 455L395.5 459.5L393.5 457L391 450L387.5 443.5Z" fill="#1c140c" filter="url(#b0bl1)"/>
<path d="M80 151H138" stroke="#c39a2c" stroke-width="13" filter="url(#b0bl3)" opacity="0.7"/><path d="M84 149V155M89 149V153M94 148V154M99 147V152M107 148V156M112 149V155M117 148V156M122 149V154M127 149V157M132 148V156" stroke="#3a2a10" stroke-width="1.6" filter="url(#b0bl1)" opacity="0.55"/>
<path d="M70 100H140V140L136 150L132 144L128 151L124 145L121 149L117 144L113 150L108 145L104 148L99 143L95 149L90 144L86 150L82 146L70 146Z" fill="url(#b0stemg)" filter="url(#b0stx)"/>
<ellipse cx="98" cy="121" rx="13" ry="6" fill="#7a5c56" opacity="0.38" filter="url(#b0bl3)"/>
<ellipse cx="84" cy="119" rx="5" ry="5" fill="#6e5248" opacity="0.45" filter="url(#b0bl2)"/>
<ellipse cx="118" cy="114" rx="7" ry="4" fill="#5e463c" opacity="0.35" filter="url(#b0bl2)"/>
<path d="M88 112L96 116M104 126L110 122M92 128L98 131" stroke="#120c0a" stroke-width="1.6" filter="url(#b0bl1)" opacity="0.7"/>
</g>
</svg>
<div style="left:0.00px;top:0.00px;width:547.00px;height:25.00px;background:#303030;"></div>
<div style="left:8.50px;top:5.00px;width:27.50px;height:17.10px;background:#2b2b2b;border-radius:4px;"></div>
<svg class="a" style="left:10.30px;top:5.40px" width="16" height="16" viewBox="0 0 16 16"><path d="M0.3 3.2Q0.3 0.2 3 0.2H14.2Q15.2 0.2 15.2 1.2V12Q15.2 13 14.2 13H4.6V14.5Q4.6 15.6 3.4 15.6H1.5Q0.3 15.6 0.3 14.5Z" fill="#e6e6e6"/><path d="M1.4 0.8H14.6" stroke="#9a9a9a" stroke-width="0.9"/><path d="M1.6 2.7H8M4.9 2.7V12.4" stroke="#1c1c1c" stroke-width="1" fill="none"/><g fill="#1c1c1c"><rect x="10.6" y="1.5" width="2" height="2"/><rect x="8.5" y="3.5" width="2" height="2"/><rect x="6.4" y="5.7" width="2" height="2"/><rect x="10.6" y="5.7" width="2" height="2"/><rect x="8.5" y="7.7" width="2" height="2"/><rect x="6.4" y="9.9" width="2" height="2"/><rect x="10.6" y="9.9" width="2" height="2"/></g></svg>
<svg class="a" style="left:27.20px;top:11.10px" width="8" height="6" viewBox="0 0 8 6"><path d="M0.9 1.2L4 4.3l3.1-3.1" stroke="#d0d0d0" stroke-width="1.1" fill="none"/></svg>
<span style="left:49.50px;top:7.48px;font-size:11.3px;color:#e4e4e4;letter-spacing:0.227px;">View</span>
<span style="left:90.40px;top:7.48px;font-size:11.3px;color:#e4e4e4;letter-spacing:0.424px;">Image</span>
<div style="left:151.50px;top:4.50px;width:31.75px;height:18.00px;background:#2b2b2b;border-radius:4px 0 0 4px;"></div>
<svg class="a" style="left:154.70px;top:5.30px" width="16" height="16" viewBox="0 0 16 16"><rect x="0.7" y="0.7" width="14.2" height="14.2" rx="2.2" fill="none" stroke="#b4b4b4" stroke-width="1.3"/><path d="M-0.4 15.2L5 6.6L10.6 15.2Z" fill="#e6e6e6" stroke="#2b2b2b" stroke-width="1.3"/><path d="M0.3 14.9L5 7.1L9.8 14.9Z" fill="#f0f0f0"/><circle cx="10.2" cy="5.2" r="1.6" fill="#f0f0f0"/></svg>
<svg class="a" style="left:172.20px;top:11.10px" width="8" height="6" viewBox="0 0 8 6"><path d="M0.9 1.2L4 4.3l3.1-3.1" stroke="#d0d0d0" stroke-width="1.1" fill="none"/></svg>
<div style="left:183.25px;top:4.50px;width:85.25px;height:18.00px;background:#1d1d1d;"></div>
<span style="left:189.68px;top:7.48px;font-size:11.3px;color:#e4e4e4;letter-spacing:0.435px;">__vanilla.png</span>
<div style="left:268.50px;top:4.50px;width:19.75px;height:18.00px;background:#545454;"></div>
<svg class="a" style="left:271.50px;top:5.80px" width="15" height="16" viewBox="0 0 15 16"><path d="M7.3 0.7C6 2.1 3.4 2.7 1 2.7C0.8 7.3 2 11.8 7.3 14.7C12.6 11.8 13.8 7.3 13.6 2.7C11.2 2.7 8.6 2.1 7.3 0.7Z" fill="none" stroke="#9c9c9c" stroke-width="1.2"/></svg>
<div style="left:289.00px;top:4.50px;width:19.25px;height:18.00px;background:#545454;"></div>
<svg class="a" style="left:291.50px;top:5.80px" width="15" height="15" viewBox="0 0 15 15"><g fill="none" stroke="#c4c4c4" stroke-width="1.25"><path d="M4 4.3H1.3Q0.7 4.3 0.7 4.9V13.7Q0.7 14.3 1.3 14.3H10.2Q10.8 14.3 10.8 13.7V11"/><path d="M4.7 0.7H10.4L13.9 4.2V9.6Q13.9 10.3 13.2 10.3H5.4Q4.7 10.3 4.7 9.6Z"/></g><path d="M10 0.2L14.4 4.6H10Z" fill="#e4e4e4"/></svg>
<div style="left:309.00px;top:4.50px;width:19.25px;height:18.00px;background:#545454;"></div>
<svg class="a" style="left:311.10px;top:5.80px" width="16" height="16" viewBox="0 0 16 16"><path d="M0 8.9H9.5V15H0.6Q0 15 0 14.4Z" fill="#e6e6e6"/><path d="M10.3 8.6L15 4.4V10.4L10.3 15Z" fill="#f2f2f2"/><rect x="2.4" y="3.8" width="7" height="3.6" rx="0.4" fill="#e6e6e6"/><path d="M2.4 5.6H9.4" stroke="#888" stroke-width="0.5"/><path d="M5.4 0.2H12.4V3.6H10.2V3H5.4Z" fill="#f0f0f0"/><path d="M10.4 3.6H12.4V6.2L10.4 7.9Z" fill="#e0e0e0"/></svg>
<div style="left:329.00px;top:4.50px;width:19.25px;height:18.00px;background:#545454;border-radius:0 4px 4px 0;"></div>
<svg class="a" style="left:334.20px;top:9.50px" width="9" height="9" viewBox="0 0 9 9"><path d="M0.5 0.5L8.2 8.2M8.2 0.5L0.5 8.2" stroke="#dcdcdc" stroke-width="1.2" fill="none"/></svg>
<svg class="a" style="left:356.00px;top:5.80px" width="16" height="16" viewBox="0 0 16 16"><path d="M0.6 14.5L5.2 9.9" stroke="#f0f0f0" stroke-width="1.3" stroke-linecap="round"/><path d="M2.3 5.5Q5.8 5 9.1 2.6L12.8 6.4Q10.6 9.4 10.2 12.7L8.6 12.8L2.4 6.6Z" fill="#fafafa"/><path d="M10.4 0.9L14.4 4.9" stroke="#fafafa" stroke-width="2.1" stroke-linecap="round"/></svg>
<div style="left:416.50px;top:4.25px;width:19.00px;height:18.50px;background:#4772b3;border-radius:4px 0 0 4px;"></div>
<div style="left:435.50px;top:4.25px;width:18.50px;height:18.50px;background:#2b2b2b;border-radius:0 4px 4px 0;"></div>
<svg class="a" style="left:416.50px;top:4.25px" width="19" height="19" viewBox="0 0 19 19"><g fill="none" stroke="#eef3ff" stroke-width="1.3" stroke-linecap="round"><path d="M2.2 4.4Q12.5 5 14.3 16"/><circle cx="4.2" cy="14.3" r="1.55"/><path d="M5.4 13.1L9.1 9.5M12.4 6.3L15.2 3.5"/></g><path d="M17 1.7L12.2 2L16.7 6.6Z" fill="#eef3ff"/></svg>
<svg class="a" style="left:441.00px;top:11.30px" width="8" height="6" viewBox="0 0 8 6"><path d="M0.9 1.2L4 4.3l3.1-3.1" stroke="#d0d0d0" stroke-width="1.1" fill="none"/></svg>
<div style="left:460.75px;top:4.25px;width:19.00px;height:18.50px;background:#4772b3;border-radius:4px 0 0 4px;"></div>
<div style="left:479.75px;top:4.25px;width:19.00px;height:18.50px;background:#2b2b2b;border-radius:0 4px 4px 0;"></div>
<svg class="a" style="left:460.75px;top:4.25px" width="19" height="19" viewBox="0 0 19 19"><defs><mask id="ovm"><rect width="19" height="19" fill="#fff"/><circle cx="11.6" cy="6.8" r="5.9" fill="#000"/></mask></defs><circle cx="11.6" cy="6.8" r="4.8" fill="#fafcff"/><circle cx="6.9" cy="11.6" r="4.7" fill="none" stroke="#e6f0ff" stroke-width="1.25" mask="url(#ovm)"/><ellipse cx="9.8" cy="8.7" rx="1" ry="0.6" transform="rotate(40 9.8 8.7)" fill="#456"/></svg>
<svg class="a" style="left:485.25px;top:11.30px" width="8" height="6" viewBox="0 0 8 6"><path d="M0.9 1.2L4 4.3l3.1-3.1" stroke="#d0d0d0" stroke-width="1.1" fill="none"/></svg>
<div style="left:509.50px;top:4.50px;width:30.25px;height:18.00px;background:#2b2b2b;border-radius:4px;"></div>
<svg class="a" style="left:512.60px;top:5.60px" width="16" height="16" viewBox="0 0 16 16"><rect x="0.2" y="0.2" width="14.8" height="14.8" rx="1.4" fill="#ececec"/><path d="M2.9 1.7H13.4V12.4Z" fill="#1b1b1b"/><circle cx="11.2" cy="5" r="1.6" fill="#f4f4f4"/><path d="M1.9 13.4H7.8L5 6.8Z" fill="#787878"/></svg>
<svg class="a" style="left:529.70px;top:11.30px" width="8" height="6" viewBox="0 0 8 6"><path d="M0.9 1.2L4 4.3l3.1-3.1" stroke="#d0d0d0" stroke-width="1.1" fill="none"/></svg>
<div style="left:6.50px;top:28.75px;width:19.00px;height:18.50px;background:#4772b3;border-radius:3px 0 0 3px;"></div>
<div style="left:26.00px;top:28.75px;width:18.50px;height:18.50px;background:#545454;"></div>
<div style="left:45.00px;top:28.75px;width:18.50px;height:18.50px;background:#545454;border-radius:0 3px 3px 0;"></div>
<svg class="a" style="left:6.50px;top:28.75px" width="19" height="19" viewBox="0 0 19 19"><rect x="2.5" y="2.3" width="14" height="13.8" rx="1.2" fill="none" stroke="#e6eeff" stroke-width="1.6" stroke-dasharray="2.35 1.9" stroke-dashoffset="1.1"/></svg>
<svg class="a" style="left:26.00px;top:28.75px" width="19" height="19" viewBox="0 0 19 19"><path d="M6.6 1.9H16.3V10.9H12V16.3H2.1V6.6H6.6Z" fill="#c8c8c8"/></svg>
<svg class="a" style="left:45.00px;top:28.75px" width="19" height="19" viewBox="0 0 19 19"><path d="M6.4 1.9H16.4V11.2H12.2V6.4H6.4Z" fill="#c8c8c8"/><path d="M2.6 7.6V15.6H11.4" fill="none" stroke="#bdbdbd" stroke-width="1.5" stroke-dasharray="1.7 2.1"/></svg>
<div style="left:6.50px;top:59.50px;width:39.00px;height:33.00px;background:#4772b3;border-radius:4px 4px 0 0;"></div>
<svg class="a" style="left:13.20px;top:64.50px" width="31" height="30" viewBox="0 0 31 30"><rect x="0.7" y="1.2" width="22.4" height="21.6" rx="2" fill="none" stroke="#e2a83c" stroke-width="1.4" stroke-dasharray="3.2 2.3" stroke-dashoffset="1.6"/><path d="M8.2 6.6L16.8 14L12.2 14.6L8.7 18.2Z" fill="#f4f6fb"/><path d="M30 26.2V29H27.2Z" fill="#9db9e8"/></svg>
<div style="left:6.50px;top:93.00px;width:39.00px;height:34.25px;background:#232323;border-radius:0 0 4px 4px;box-shadow:0 0 0 0.6px #333;"></div>
<svg class="a" style="left:13.20px;top:98.62px" width="24" height="24" viewBox="0 0 24 24"><circle cx="12" cy="12" r="10.9" fill="none" stroke="#9a2f3c" stroke-width="1.5"/><circle cx="12" cy="12" r="10.9" fill="none" stroke="#f2f2f2" stroke-width="1.5" stroke-dasharray="5.6 2.96" stroke-dashoffset="2.8"/><path d="M4.6 12H9.8M14.2 12H19.4M12 4.6V9.8M12 14.2V19.4" stroke="#b0b0b0" stroke-width="1.3" fill="none"/></svg>
<div style="left:6.50px;top:133.50px;width:39.00px;height:33.50px;background:#232323;border-radius:4px 4px 0 0;box-shadow:0 0 0 0.6px #333;"></div>
<svg class="a" style="left:13.20px;top:138.75px" width="24" height="24" viewBox="0 0 24 24"><g fill="#ececec"><path d="M12 0.6L15.1 5H8.9Z"/><rect x="11.2" y="6" width="1.6" height="3.4"/><g transform="rotate(90 12 12)"><path d="M12 0.6L15.1 5H8.9Z"/><rect x="11.2" y="6" width="1.6" height="3.4"/></g><g transform="rotate(180 12 12)"><path d="M12 0.6L15.1 5H8.9Z"/><rect x="11.2" y="6" width="1.6" height="3.4"/></g><g transform="rotate(270 12 12)"><path d="M12 0.6L15.1 5H8.9Z"/><rect x="11.2" y="6" width="1.6" height="3.4"/></g></g></svg>
<div style="left:6.50px;top:167.50px;width:39.00px;height:34.50px;background:#232323;border-radius:0 0 0 0;box-shadow:0 0 0 0.6px #333;"></div>
<svg class="a" style="left:13.20px;top:173.25px" width="24" height="24" viewBox="0 0 24 24"><g fill="none" stroke="#e0e0e0" stroke-width="1.2"><path d="M3.4 11.4A8.7 8.7 0 0 1 18.6 6.2"/><path d="M20.6 12.6A8.7 8.7 0 0 1 5.4 17.8"/></g><path d="M0.4 11L6.2 11L3.3 15.4Z" fill="#ececec"/><path d="M23.6 13L17.8 13L20.7 8.6Z" fill="#ececec"/><path d="M12 8.2L15.8 12L12 15.8L8.2 12Z" fill="#a8a8a8"/></svg>
<div style="left:6.50px;top:202.50px;width:39.00px;height:33.50px;background:#232323;border-radius:0 0 0 0;box-shadow:0 0 0 0.6px #333;"></div>
<svg class="a" style="left:13.20px;top:207.75px" width="24" height="24" viewBox="0 0 24 24"><path d="M4.2 7.6V3.6H20.6V20H16.8" fill="none" stroke="#a8a8a8" stroke-width="1.3"/><rect x="3.4" y="11.8" width="9" height="8.6" fill="#ececec"/><path d="M13.4 10.6L17.4 6.6" stroke="#e4e4e4" stroke-width="1.2"/><path d="M18.6 5.4L14.8 6L18 9.2Z" fill="#ececec"/></svg>
<div style="left:6.50px;top:236.50px;width:39.00px;height:34.50px;background:#232323;border-radius:0 0 4px 4px;box-shadow:0 0 0 0.6px #333;"></div>
<svg class="a" style="left:13.20px;top:242.25px" width="24" height="24" viewBox="0 0 24 24"><circle cx="12" cy="12" r="9.3" fill="none" stroke="#dcdcdc" stroke-width="1.2" stroke-dasharray="8.6 6" stroke-dashoffset="-3"/><g fill="#ececec"><path d="M12 1L14.9 5.2H9.1Z"/><path d="M12 23L14.9 18.8H9.1Z"/><path d="M1 12L5.2 9.1V14.9Z"/><path d="M23 12L18.8 9.1V14.9Z"/><rect x="7.8" y="7.8" width="8.4" height="8.4" rx="1.3"/></g></svg>
<div style="left:6.50px;top:277.50px;width:39.00px;height:33.50px;background:#232323;border-radius:4px 4px 4px 4px;box-shadow:0 0 0 0.6px #333;"></div>
<svg class="a" style="left:11.70px;top:281.75px" width="31" height="28" viewBox="0 0 31 28"><path d="M3.6 17.4L15.6 5.4L18.8 8.6L6.8 20.6L2.6 21.6Z" fill="#ececec"/><path d="M16.6 4.4L17.8 3.2Q18.6 2.6 19.4 3.3L20.9 4.8Q21.6 5.6 20.9 6.4L19.8 7.6Z" fill="#ececec"/><path d="M3.6 21.2C7 24.6 10.6 23.6 13.6 20.6C16.6 17.6 20.6 17.2 23.8 22" fill="none" stroke="#78c6ac" stroke-width="1.5" stroke-linecap="round"/><path d="M30.6 23.4V27.6H26.4Z" fill="#8e8e8e"/></svg>
<div style="left:6.50px;top:317.25px;width:39.00px;height:31.85px;background:#232323;border-radius:4px 4px 4px 4px;box-shadow:0 0 0 0.6px #333;"></div>
<svg class="a" style="left:10.70px;top:321.68px" width="26" height="24" viewBox="0 0 26 24"><g fill="none" stroke="#e0e0e0" stroke-width="1.1" stroke-linejoin="round"><path d="M6.6 6.6L11 2.4H24.6V15.4L20 20.4H6.6Z"/><path d="M6.6 6.6H20V20.4M20 6.6L24.6 2.4"/><path d="M1.4 12.6L20 6.8"/></g><circle cx="1.6" cy="12.6" r="1.5" fill="#c4b8f4"/></svg>
<div style="left:6.50px;top:356.50px;width:39.00px;height:32.60px;background:#232323;border-radius:4px 4px 0 0;box-shadow:0 0 0 0.6px #333;"></div>
<svg class="a" style="left:13.20px;top:361.30px" width="24" height="24" viewBox="0 0 24 24"><path d="M7.6 19.6C5 16.4 3.6 13.6 3.6 11.2C3.6 9.6 5.4 9.2 6.2 10.6L6.6 6.6C6.8 4.8 9 4.8 9.2 6.4C9.4 4 12.2 4 12.4 6.2C12.8 4.4 15.4 4.6 15.6 6.6C16.2 5.4 18.4 5.8 18.4 7.6C18.8 11.6 18.6 15.6 17 19.6Z" fill="none" stroke="#e4e4e4" stroke-width="1.25" stroke-linejoin="round"/></svg>
<div style="left:6.50px;top:389.50px;width:39.00px;height:36.00px;background:#232323;border-radius:0 0 0 0;box-shadow:0 0 0 0.6px #333;"></div>
<svg class="a" style="left:13.20px;top:396.00px" width="24" height="24" viewBox="0 0 24 24"><g fill="none" stroke="#e4e4e4" stroke-width="1.2" stroke-linejoin="round" stroke-linecap="round"><path d="M5 13.6L12.6 21.4L18.4 18.4C19.2 15.4 18.4 12.6 16.2 10.2L13.4 7.6C12 6.2 10.2 7.8 11.4 9.4L13.2 12.4L8.6 12.8C7 11.8 5.2 11.6 5 13.6Z"/><path d="M10.4 4.2Q12.6 2.4 14.8 4"/><path d="M2.4 13V15.2H4"/><path d="M12.6 1.4H14.6V3"/></g><circle cx="11.6" cy="11.4" r="1.4" fill="#bbb"/></svg>
<div style="left:6.50px;top:426.00px;width:39.00px;height:33.50px;background:#232323;border-radius:0 0 4px 4px;box-shadow:0 0 0 0.6px #333;"></div>
<svg class="a" style="left:13.20px;top:431.25px" width="24" height="24" viewBox="0 0 24 24"><g fill="none" stroke="#e4e4e4" stroke-width="1.2" stroke-linecap="round"><path d="M10.6 1.6L11.4 3.6H13.4"/><path d="M7 10.4C8.2 6.6 13 5.6 15.6 9.6"/><path d="M4.6 12.2C7.4 8.4 13.4 7.4 17.8 12.6"/><path d="M9.8 12.4C10.8 9.8 13.4 10 14.4 12.4"/></g></svg>
<div class="a" style="left:514.30px;top:61.00px;width:23px;height:23px;border-radius:50%;background:#272727"></div>
<div class="a" style="left:514.30px;top:91.50px;width:23px;height:23px;border-radius:50%;background:#272727"></div>
<svg class="a" style="left:515.30px;top:63.00px" width="20" height="20" viewBox="0 0 20 20"><circle cx="12.2" cy="7.6" r="5.9" fill="#d4d4d4"/><path d="M7.6 12.4L2.4 17.4" stroke="#d4d4d4" stroke-width="2.2" stroke-linecap="round"/><path d="M9.2 7.6H15.2M12.2 4.6V10.6" stroke="#2a2a2a" stroke-width="1.2"/></svg>
<svg class="a" style="left:516.00px;top:93.00px" width="20" height="20" viewBox="0 0 20 20"><path d="M6.8 17.6C4.6 15.6 3.2 13.6 1.6 11.6C0.8 10.2 2.4 9.2 3.6 10.2L5.6 11.8L4.6 4.6C4.4 3 6.4 2.6 6.8 4.2L8 9L8.4 2.4C8.5 0.8 10.6 0.8 10.7 2.4L11 9L12.4 3.4C12.8 1.9 14.8 2.4 14.5 4L13.6 10L15.6 6.6C16.4 5.2 18.2 6.2 17.5 7.7L15 14.4C14.4 16.4 13 17.8 10.6 18.2C9.2 18.4 7.8 18.2 6.8 17.6Z" fill="#dcdcdc"/></svg>
<svg class="a" style="left:540.50px;top:67.50px" width="6" height="11" viewBox="0 0 6 11"><path d="M5.2 0.8L1 5.5l4.2 4.7" stroke="#aaa" stroke-width="1" fill="none"/></svg>
</div>
<div class="ed" style="left:551.5px;top:52.5px;width:524.5px;height:442.5px;background:#303030">
<div class="chk" style="left:27.50px;top:25.50px;width:469.00px;height:417px;background-position:-5.67px -9.13px"></div>
<div style="left:27.00px;top:25.50px;width:1.00px;height:417.00px;background:#4a4a4a;"></div>
<div style="left:496.00px;top:25.50px;width:1.00px;height:417.00px;background:#4a4a4a;"></div>
<svg class="a" style="left:27.50px;top:25.50px" width="469.00" height="417.00" viewBox="32.37 71.55 483.51 429.90" preserveAspectRatio="none">
<defs><clipPath id="b1clipA"><path d="M392.5 463.6C392.1 464.2 391.2 465.5 390.0 467.0C388.8 468.5 387.5 470.3 385.0 472.5C382.5 474.7 378.5 477.9 375.0 480.0C371.5 482.1 367.3 483.9 364.0 485.3C360.7 486.7 358.5 487.6 355.0 488.6C351.5 489.6 348.5 490.4 343.0 491.4C337.5 492.3 328.8 493.7 322.0 494.3C315.2 494.9 308.8 495.0 302.0 494.8C295.2 494.6 288.0 494.1 281.0 493.0C274.0 491.9 266.8 490.0 260.0 488.2C253.2 486.4 246.7 484.2 240.0 482.0C233.3 479.8 226.7 477.7 220.0 475.0C213.3 472.3 206.7 469.5 200.0 466.0C193.3 462.5 186.7 458.3 180.0 454.0C173.3 449.7 166.7 445.3 160.0 440.0C153.3 434.7 145.2 427.2 140.0 422.0C134.8 416.8 132.7 413.5 129.0 409.0C125.3 404.5 121.7 400.2 118.0 395.0C114.3 389.8 110.3 383.5 107.0 378.0C103.7 372.5 100.5 366.7 98.0 362.0C95.5 357.3 94.2 354.5 92.0 350.0C89.8 345.5 87.0 340.0 85.0 335.0C83.0 330.0 81.5 325.0 80.0 320.0C78.5 315.0 77.2 310.0 76.0 305.0C74.8 300.0 73.6 295.0 72.5 290.0C71.4 285.0 70.3 280.0 69.6 275.0C68.9 270.0 68.4 265.0 68.2 260.0C68.0 255.0 68.2 250.0 68.4 245.0C68.6 240.0 69.0 235.0 69.5 230.0C70.0 225.0 70.8 219.7 71.5 215.0C72.2 210.3 73.1 206.2 74.0 202.0C74.9 197.8 76.0 193.7 77.0 190.0C78.0 186.3 79.0 183.7 79.7 180.0C80.4 176.3 80.9 172.0 81.3 168.0C81.7 164.0 81.9 159.7 82.0 156.0C82.1 152.3 81.7 148.2 82.0 146.0C82.3 143.8 80.7 143.5 84.0 143.0C87.3 142.5 98.9 142.8 102.0 143.0C105.1 143.2 102.7 142.0 102.6 144.0C102.5 146.0 101.7 151.5 101.2 155.0C100.7 158.5 100.1 161.7 99.6 165.0C99.1 168.3 98.6 172.0 98.2 175.0C97.8 178.0 97.2 180.4 97.2 183.0C97.2 185.6 97.4 187.7 98.0 190.5C98.6 193.3 99.9 197.2 100.8 200.0C101.7 202.8 102.5 204.5 103.2 207.0C103.9 209.5 104.0 212.0 105.0 215.0C106.0 218.0 107.5 221.7 109.0 225.0C110.5 228.3 112.3 231.7 114.0 235.0C115.7 238.3 117.3 241.7 119.0 245.0C120.7 248.3 122.2 251.7 124.0 255.0C125.8 258.3 127.4 261.0 129.5 265.0C131.6 269.0 134.0 274.5 136.4 279.0C138.8 283.5 141.3 287.6 144.0 292.0C146.7 296.4 149.1 300.8 152.4 305.5C155.7 310.2 160.4 315.9 164.0 320.5C167.6 325.1 170.0 328.6 173.8 333.3C177.6 338.1 182.3 343.9 187.0 349.0C191.7 354.1 197.0 358.9 202.2 363.6C207.4 368.3 212.1 372.6 218.0 377.0C223.9 381.4 231.6 386.4 237.8 390.2C244.0 393.9 249.1 396.6 255.0 399.5C260.9 402.4 267.5 405.2 273.3 407.5C279.1 409.8 284.1 411.6 290.0 413.5C295.9 415.4 302.2 416.9 308.9 418.7C315.6 420.4 323.1 422.3 330.0 424.0C336.9 425.7 343.3 427.3 350.0 429.0C356.7 430.7 365.0 432.8 370.0 434.0C375.0 435.2 377.2 435.6 380.0 436.5C382.8 437.4 384.9 437.9 387.0 439.5C389.1 441.1 391.2 443.4 392.5 446.0C393.8 448.6 395.0 452.1 395.0 455.0C395.0 457.9 392.9 462.2 392.5 463.6C392.1 465.0 392.9 463.0 392.5 463.6Z"/></clipPath><clipPath id="b1clipB"><path d="M124.5 147.5C125.1 150.8 126.2 156.8 127.5 162.5C128.8 168.2 130.0 176.2 132.0 182.0C134.0 187.8 136.0 192.0 139.5 197.0C143.0 202.0 147.8 206.8 153.0 212.0C158.2 217.2 164.5 222.5 171.0 228.5C177.5 234.5 185.5 242.1 192.0 248.0C198.5 253.9 203.7 258.7 210.0 264.0C216.3 269.3 224.3 275.4 230.0 280.0C235.7 284.6 239.0 287.6 244.0 291.5C249.0 295.4 254.0 299.5 260.0 303.5C266.0 307.5 273.3 311.9 280.0 315.5C286.7 319.1 293.3 322.2 300.0 325.0C306.7 327.8 313.3 329.8 320.0 332.0C326.7 334.2 333.3 336.2 340.0 338.0C346.7 339.8 353.3 341.2 360.0 342.5C366.7 343.8 373.3 344.8 380.0 346.0C386.7 347.2 393.3 348.5 400.0 349.5C406.7 350.5 411.7 351.0 420.0 352.0C428.3 353.0 442.0 354.2 450.0 355.5C458.0 356.8 462.9 357.3 468.0 359.5C473.1 361.7 478.4 365.8 480.5 368.5C482.6 371.2 480.9 373.6 480.6 376.0C480.4 378.4 479.9 380.3 479.0 383.0C478.1 385.7 476.8 389.0 475.0 392.0C473.2 395.0 470.8 398.2 468.0 401.0C465.2 403.8 461.3 406.8 458.0 409.0C454.7 411.2 451.2 412.8 448.0 414.3C444.8 415.9 443.7 417.0 439.0 418.3C434.3 419.6 426.5 421.1 420.0 422.3C413.5 423.5 406.7 424.9 400.0 425.7C393.3 426.5 388.3 427.0 380.0 427.2C371.7 427.4 358.3 427.3 350.0 426.8C341.7 426.3 336.9 425.4 330.0 424.0C323.1 422.6 315.6 420.4 308.9 418.7C302.2 416.9 295.9 415.4 290.0 413.5C284.1 411.6 279.1 409.8 273.3 407.5C267.5 405.2 260.9 402.4 255.0 399.5C249.1 396.6 244.0 393.9 237.8 390.2C231.6 386.4 223.9 381.4 218.0 377.0C212.1 372.6 207.4 368.3 202.2 363.6C197.0 358.9 191.7 354.1 187.0 349.0C182.3 343.9 177.6 338.1 173.8 333.3C170.0 328.6 167.6 325.1 164.0 320.5C160.4 315.9 155.7 310.2 152.4 305.5C149.1 300.8 146.7 296.4 144.0 292.0C141.3 287.6 138.8 283.5 136.4 279.0C134.0 274.5 131.6 269.0 129.5 265.0C127.4 261.0 125.8 258.3 124.0 255.0C122.2 251.7 120.7 248.3 119.0 245.0C117.3 241.7 115.7 238.3 114.0 235.0C112.3 231.7 110.5 228.3 109.0 225.0C107.5 221.7 106.0 218.0 105.0 215.0C104.0 212.0 103.3 209.5 103.2 207.0C103.1 204.5 103.9 202.8 104.2 200.0C104.5 197.2 104.7 193.3 104.8 190.0C104.9 186.7 105.1 183.3 105.0 180.0C104.9 176.7 104.5 173.7 104.3 170.0C104.1 166.3 103.9 162.0 103.8 158.0C103.7 154.0 103.2 148.5 103.6 146.0C104.0 143.5 102.6 143.5 106.0 143.0C109.4 142.5 120.9 142.2 124.0 143.0C127.1 143.8 123.9 144.2 124.5 147.5Z"/></clipPath><clipPath id="b1bclip"><path clip-rule="evenodd" d="M82.0 146.0C81.8 145.3 81.7 143.5 81.0 142.0C80.3 140.5 78.8 138.8 78.0 137.0C77.2 135.2 76.6 133.0 76.3 131.0C76.0 129.0 75.8 127.2 76.0 125.0C76.2 122.8 76.8 120.0 77.5 118.0C78.2 116.0 79.2 114.3 80.5 113.0C81.8 111.7 83.1 111.1 85.0 110.3C86.9 109.5 89.5 108.8 92.0 108.2C94.5 107.6 97.3 107.2 100.0 106.8C102.7 106.4 105.5 106.0 108.0 105.8C110.5 105.6 112.7 105.3 115.0 105.6C117.3 105.8 119.8 106.4 122.0 107.3C124.2 108.2 126.4 109.5 128.0 110.8C129.6 112.1 130.6 113.5 131.5 115.0C132.4 116.5 132.8 117.8 133.3 120.0C133.8 122.2 134.3 125.3 134.4 128.0C134.5 130.7 133.9 133.5 134.0 136.0C134.1 138.5 134.8 141.8 135.0 143.0C135.3 144.3 136.2 148.3 137.0 151.0C137.8 153.7 138.7 156.2 140.0 159.0C141.3 161.8 143.3 165.3 145.0 168.0C146.7 170.7 148.3 172.9 150.0 175.0C151.7 177.1 152.5 178.0 155.0 180.5C157.5 183.0 161.3 186.8 165.0 190.0C168.7 193.2 172.8 196.6 177.0 200.0C181.2 203.4 185.8 207.1 190.0 210.5C194.2 213.9 197.8 217.2 202.0 220.5C206.2 223.8 210.7 226.9 215.0 230.0C219.3 233.1 223.8 236.2 228.0 239.0C232.2 241.8 234.7 243.5 240.0 247.0C245.3 250.5 253.3 255.8 260.0 260.0C266.7 264.2 273.3 268.2 280.0 272.0C286.7 275.8 293.3 279.7 300.0 283.0C306.7 286.3 313.3 289.3 320.0 292.0C326.7 294.7 333.3 296.8 340.0 299.0C346.7 301.2 354.2 303.5 360.0 305.5C365.8 307.5 370.0 309.2 375.0 311.0C380.0 312.8 384.2 314.3 390.0 316.0C395.8 317.7 403.3 319.5 410.0 321.0C416.7 322.5 423.3 323.8 430.0 325.0C436.7 326.2 444.2 327.5 450.0 328.5C455.8 329.5 460.8 330.1 465.0 331.2C469.2 332.3 472.0 333.4 475.0 335.0C478.0 336.6 480.9 338.8 483.0 341.0C485.1 343.2 486.7 345.8 487.6 348.0C488.5 350.2 488.7 352.2 488.5 354.0C488.3 355.8 487.3 357.3 486.5 359.0C485.7 360.7 484.5 362.4 483.5 364.0C482.5 365.6 481.0 367.8 480.5 368.5C480.5 369.8 480.9 373.6 480.6 376.0C480.4 378.4 479.9 380.3 479.0 383.0C478.1 385.7 476.8 389.0 475.0 392.0C473.2 395.0 470.8 398.2 468.0 401.0C465.2 403.8 461.3 406.8 458.0 409.0C454.7 411.2 451.2 412.8 448.0 414.3C444.8 415.9 439.5 416.7 439.0 418.3C438.5 419.9 443.2 422.2 445.0 424.0C446.8 425.8 448.9 427.2 450.0 429.0C451.1 430.8 451.6 432.7 451.7 434.5C451.8 436.3 451.2 438.2 450.6 440.0C450.0 441.8 449.4 443.2 448.0 445.0C446.6 446.8 444.3 448.7 442.0 450.5C439.7 452.3 437.3 454.1 434.0 455.8C430.7 457.6 426.0 459.7 422.0 461.0C418.0 462.3 413.7 463.1 410.0 463.7C406.3 464.2 402.9 464.3 400.0 464.3C397.1 464.3 394.2 463.2 392.5 463.6C390.8 464.1 391.2 465.5 390.0 467.0C388.8 468.5 387.5 470.3 385.0 472.5C382.5 474.7 378.5 477.9 375.0 480.0C371.5 482.1 367.3 483.9 364.0 485.3C360.7 486.7 358.5 487.6 355.0 488.6C351.5 489.6 348.5 490.4 343.0 491.4C337.5 492.3 328.8 493.7 322.0 494.3C315.2 494.9 308.8 495.0 302.0 494.8C295.2 494.6 288.0 494.1 281.0 493.0C274.0 491.9 266.8 490.0 260.0 488.2C253.2 486.4 246.7 484.2 240.0 482.0C233.3 479.8 226.7 477.7 220.0 475.0C213.3 472.3 206.7 469.5 200.0 466.0C193.3 462.5 186.7 458.3 180.0 454.0C173.3 449.7 166.7 445.3 160.0 440.0C153.3 434.7 145.2 427.2 140.0 422.0C134.8 416.8 132.7 413.5 129.0 409.0C125.3 404.5 121.7 400.2 118.0 395.0C114.3 389.8 110.3 383.5 107.0 378.0C103.7 372.5 100.5 366.7 98.0 362.0C95.5 357.3 94.2 354.5 92.0 350.0C89.8 345.5 87.0 340.0 85.0 335.0C83.0 330.0 81.5 325.0 80.0 320.0C78.5 315.0 77.2 310.0 76.0 305.0C74.8 300.0 73.6 295.0 72.5 290.0C71.4 285.0 70.3 280.0 69.6 275.0C68.9 270.0 68.4 265.0 68.2 260.0C68.0 255.0 68.2 250.0 68.4 245.0C68.6 240.0 69.0 235.0 69.5 230.0C70.0 225.0 70.8 219.7 71.5 215.0C72.2 210.3 73.1 206.2 74.0 202.0C74.9 197.8 76.0 193.7 77.0 190.0C78.0 186.3 79.0 183.7 79.7 180.0C80.4 176.3 80.9 172.0 81.3 168.0C81.7 164.0 81.9 159.7 82.0 156.0C82.1 152.3 82.0 147.7 82.0 146.0ZM102.6 144.0C102.2 145.5 101.7 151.5 101.2 155.0C100.7 158.5 100.1 161.7 99.6 165.0C99.1 168.3 98.6 172.0 98.2 175.0C97.8 178.0 97.2 180.4 97.2 183.0C97.2 185.6 97.4 187.7 98.0 190.5C98.6 193.3 99.9 197.2 100.8 200.0C101.7 202.8 102.6 207.0 103.2 207.0C103.8 207.0 103.9 202.8 104.2 200.0C104.5 197.2 104.7 193.3 104.8 190.0C104.9 186.7 105.1 183.3 105.0 180.0C104.9 176.7 104.5 173.7 104.3 170.0C104.1 166.3 103.9 162.0 103.8 158.0C103.7 154.0 103.8 148.3 103.6 146.0C103.4 143.7 103.0 142.5 102.6 144.0Z"/></clipPath>
<filter id="b1bl3" filterUnits="userSpaceOnUse" x="30" y="70" width="500" height="460"><feGaussianBlur stdDeviation="3"/></filter>
<filter id="b1bl6" filterUnits="userSpaceOnUse" x="30" y="70" width="500" height="460"><feGaussianBlur stdDeviation="6"/></filter>
<filter id="b1bl10" filterUnits="userSpaceOnUse" x="30" y="70" width="500" height="460"><feGaussianBlur stdDeviation="10"/></filter>
<filter id="b1bl1" filterUnits="userSpaceOnUse" x="30" y="70" width="500" height="460"><feGaussianBlur stdDeviation="1.2"/></filter>
<filter id="b1bl2" filterUnits="userSpaceOnUse" x="30" y="70" width="500" height="460"><feGaussianBlur stdDeviation="2"/></filter>
<filter id="b1stx" color-interpolation-filters="sRGB" filterUnits="userSpaceOnUse" x="60" y="95" width="90" height="70"><feTurbulence type="fractalNoise" baseFrequency="0.11 0.14" numOctaves="3" seed="7" result="n"/><feColorMatrix in="n" type="matrix" values="0 0 0 0 0.43  0 0 0 0 0.31  0 0 0 0 0.29  3 0 0 0 -1.5" result="sp"/><feDisplacementMap in="SourceGraphic" in2="n" scale="7" xChannelSelector="R" yChannelSelector="G" result="d"/><feGaussianBlur in="d" stdDeviation="0.7" result="db"/><feComposite in="sp" in2="db" operator="in" result="s2"/><feMerge><feMergeNode in="db"/><feMergeNode in="s2"/></feMerge></filter>
<linearGradient id="b1ga" gradientUnits="userSpaceOnUse" x1="250" y1="0" x2="385" y2="0"><stop offset="0" stop-color="#cf983e"/><stop offset="1" stop-color="#d6aa58" stop-opacity="0.25"/></linearGradient><linearGradient id="b1gb" gradientUnits="userSpaceOnUse" x1="190" y1="0" x2="345" y2="0"><stop offset="0" stop-color="#c48c34"/><stop offset="1" stop-color="#d2a250" stop-opacity="0.2"/></linearGradient>
<radialGradient id="b1stemg" cx="0.42" cy="0.4" r="0.7"><stop offset="0" stop-color="#35251f"/><stop offset="0.5" stop-color="#221814"/><stop offset="1" stop-color="#110c0a"/></radialGradient></defs>
<path d="M82.0 146.0C81.8 145.3 81.7 143.5 81.0 142.0C80.3 140.5 78.8 138.8 78.0 137.0C77.2 135.2 76.6 133.0 76.3 131.0C76.0 129.0 75.8 127.2 76.0 125.0C76.2 122.8 76.8 120.0 77.5 118.0C78.2 116.0 79.2 114.3 80.5 113.0C81.8 111.7 83.1 111.1 85.0 110.3C86.9 109.5 89.5 108.8 92.0 108.2C94.5 107.6 97.3 107.2 100.0 106.8C102.7 106.4 105.5 106.0 108.0 105.8C110.5 105.6 112.7 105.3 115.0 105.6C117.3 105.8 119.8 106.4 122.0 107.3C124.2 108.2 126.4 109.5 128.0 110.8C129.6 112.1 130.6 113.5 131.5 115.0C132.4 116.5 132.8 117.8 133.3 120.0C133.8 122.2 134.3 125.3 134.4 128.0C134.5 130.7 133.9 133.5 134.0 136.0C134.1 138.5 134.8 141.8 135.0 143.0C135.3 144.3 136.2 148.3 137.0 151.0C137.8 153.7 138.7 156.2 140.0 159.0C141.3 161.8 143.3 165.3 145.0 168.0C146.7 170.7 148.3 172.9 150.0 175.0C151.7 177.1 152.5 178.0 155.0 180.5C157.5 183.0 161.3 186.8 165.0 190.0C168.7 193.2 172.8 196.6 177.0 200.0C181.2 203.4 185.8 207.1 190.0 210.5C194.2 213.9 197.8 217.2 202.0 220.5C206.2 223.8 210.7 226.9 215.0 230.0C219.3 233.1 223.8 236.2 228.0 239.0C232.2 241.8 234.7 243.5 240.0 247.0C245.3 250.5 253.3 255.8 260.0 260.0C266.7 264.2 273.3 268.2 280.0 272.0C286.7 275.8 293.3 279.7 300.0 283.0C306.7 286.3 313.3 289.3 320.0 292.0C326.7 294.7 333.3 296.8 340.0 299.0C346.7 301.2 354.2 303.5 360.0 305.5C365.8 307.5 370.0 309.2 375.0 311.0C380.0 312.8 384.2 314.3 390.0 316.0C395.8 317.7 403.3 319.5 410.0 321.0C416.7 322.5 423.3 323.8 430.0 325.0C436.7 326.2 444.2 327.5 450.0 328.5C455.8 329.5 460.8 330.1 465.0 331.2C469.2 332.3 472.0 333.4 475.0 335.0C478.0 336.6 480.9 338.8 483.0 341.0C485.1 343.2 486.7 345.8 487.6 348.0C488.5 350.2 488.7 352.2 488.5 354.0C488.3 355.8 487.3 357.3 486.5 359.0C485.7 360.7 484.5 362.4 483.5 364.0C482.5 365.6 481.0 367.8 480.5 368.5C480.5 369.8 480.9 373.6 480.6 376.0C480.4 378.4 479.9 380.3 479.0 383.0C478.1 385.7 476.8 389.0 475.0 392.0C473.2 395.0 470.8 398.2 468.0 401.0C465.2 403.8 461.3 406.8 458.0 409.0C454.7 411.2 451.2 412.8 448.0 414.3C444.8 415.9 439.5 416.7 439.0 418.3C438.5 419.9 443.2 422.2 445.0 424.0C446.8 425.8 448.9 427.2 450.0 429.0C451.1 430.8 451.6 432.7 451.7 434.5C451.8 436.3 451.2 438.2 450.6 440.0C450.0 441.8 449.4 443.2 448.0 445.0C446.6 446.8 444.3 448.7 442.0 450.5C439.7 452.3 437.3 454.1 434.0 455.8C430.7 457.6 426.0 459.7 422.0 461.0C418.0 462.3 413.7 463.1 410.0 463.7C406.3 464.2 402.9 464.3 400.0 464.3C397.1 464.3 394.2 463.2 392.5 463.6C390.8 464.1 391.2 465.5 390.0 467.0C388.8 468.5 387.5 470.3 385.0 472.5C382.5 474.7 378.5 477.9 375.0 480.0C371.5 482.1 367.3 483.9 364.0 485.3C360.7 486.7 358.5 487.6 355.0 488.6C351.5 489.6 348.5 490.4 343.0 491.4C337.5 492.3 328.8 493.7 322.0 494.3C315.2 494.9 308.8 495.0 302.0 494.8C295.2 494.6 288.0 494.1 281.0 493.0C274.0 491.9 266.8 490.0 260.0 488.2C253.2 486.4 246.7 484.2 240.0 482.0C233.3 479.8 226.7 477.7 220.0 475.0C213.3 472.3 206.7 469.5 200.0 466.0C193.3 462.5 186.7 458.3 180.0 454.0C173.3 449.7 166.7 445.3 160.0 440.0C153.3 434.7 145.2 427.2 140.0 422.0C134.8 416.8 132.7 413.5 129.0 409.0C125.3 404.5 121.7 400.2 118.0 395.0C114.3 389.8 110.3 383.5 107.0 378.0C103.7 372.5 100.5 366.7 98.0 362.0C95.5 357.3 94.2 354.5 92.0 350.0C89.8 345.5 87.0 340.0 85.0 335.0C83.0 330.0 81.5 325.0 80.0 320.0C78.5 315.0 77.2 310.0 76.0 305.0C74.8 300.0 73.6 295.0 72.5 290.0C71.4 285.0 70.3 280.0 69.6 275.0C68.9 270.0 68.4 265.0 68.2 260.0C68.0 255.0 68.2 250.0 68.4 245.0C68.6 240.0 69.0 235.0 69.5 230.0C70.0 225.0 70.8 219.7 71.5 215.0C72.2 210.3 73.1 206.2 74.0 202.0C74.9 197.8 76.0 193.7 77.0 190.0C78.0 186.3 79.0 183.7 79.7 180.0C80.4 176.3 80.9 172.0 81.3 168.0C81.7 164.0 81.9 159.7 82.0 156.0C82.1 152.3 82.0 147.7 82.0 146.0Z" fill="#000" stroke="#000" stroke-width="13.2" stroke-linejoin="round"/>
<g clip-path="url(#b1bclip)">
<path d="M82.0 146.0C81.8 145.3 81.7 143.5 81.0 142.0C80.3 140.5 78.8 138.8 78.0 137.0C77.2 135.2 76.6 133.0 76.3 131.0C76.0 129.0 75.8 127.2 76.0 125.0C76.2 122.8 76.8 120.0 77.5 118.0C78.2 116.0 79.2 114.3 80.5 113.0C81.8 111.7 83.1 111.1 85.0 110.3C86.9 109.5 89.5 108.8 92.0 108.2C94.5 107.6 97.3 107.2 100.0 106.8C102.7 106.4 105.5 106.0 108.0 105.8C110.5 105.6 112.7 105.3 115.0 105.6C117.3 105.8 119.8 106.4 122.0 107.3C124.2 108.2 126.4 109.5 128.0 110.8C129.6 112.1 130.6 113.5 131.5 115.0C132.4 116.5 132.8 117.8 133.3 120.0C133.8 122.2 134.3 125.3 134.4 128.0C134.5 130.7 133.9 133.5 134.0 136.0C134.1 138.5 134.8 141.8 135.0 143.0C135.3 144.3 136.2 148.3 137.0 151.0C137.8 153.7 138.7 156.2 140.0 159.0C141.3 161.8 143.3 165.3 145.0 168.0C146.7 170.7 148.3 172.9 150.0 175.0C151.7 177.1 152.5 178.0 155.0 180.5C157.5 183.0 161.3 186.8 165.0 190.0C168.7 193.2 172.8 196.6 177.0 200.0C181.2 203.4 185.8 207.1 190.0 210.5C194.2 213.9 197.8 217.2 202.0 220.5C206.2 223.8 210.7 226.9 215.0 230.0C219.3 233.1 223.8 236.2 228.0 239.0C232.2 241.8 234.7 243.5 240.0 247.0C245.3 250.5 253.3 255.8 260.0 260.0C266.7 264.2 273.3 268.2 280.0 272.0C286.7 275.8 293.3 279.7 300.0 283.0C306.7 286.3 313.3 289.3 320.0 292.0C326.7 294.7 333.3 296.8 340.0 299.0C346.7 301.2 354.2 303.5 360.0 305.5C365.8 307.5 370.0 309.2 375.0 311.0C380.0 312.8 384.2 314.3 390.0 316.0C395.8 317.7 403.3 319.5 410.0 321.0C416.7 322.5 423.3 323.8 430.0 325.0C436.7 326.2 444.2 327.5 450.0 328.5C455.8 329.5 460.8 330.1 465.0 331.2C469.2 332.3 472.0 333.4 475.0 335.0C478.0 336.6 480.9 338.8 483.0 341.0C485.1 343.2 486.7 345.8 487.6 348.0C488.5 350.2 488.7 352.2 488.5 354.0C488.3 355.8 487.3 357.3 486.5 359.0C485.7 360.7 484.5 362.4 483.5 364.0C482.5 365.6 481.0 367.8 480.5 368.5C480.5 369.8 480.9 373.6 480.6 376.0C480.4 378.4 479.9 380.3 479.0 383.0C478.1 385.7 476.8 389.0 475.0 392.0C473.2 395.0 470.8 398.2 468.0 401.0C465.2 403.8 461.3 406.8 458.0 409.0C454.7 411.2 451.2 412.8 448.0 414.3C444.8 415.9 439.5 416.7 439.0 418.3C438.5 419.9 443.2 422.2 445.0 424.0C446.8 425.8 448.9 427.2 450.0 429.0C451.1 430.8 451.6 432.7 451.7 434.5C451.8 436.3 451.2 438.2 450.6 440.0C450.0 441.8 449.4 443.2 448.0 445.0C446.6 446.8 444.3 448.7 442.0 450.5C439.7 452.3 437.3 454.1 434.0 455.8C430.7 457.6 426.0 459.7 422.0 461.0C418.0 462.3 413.7 463.1 410.0 463.7C406.3 464.2 402.9 464.3 400.0 464.3C397.1 464.3 394.2 463.2 392.5 463.6C390.8 464.1 391.2 465.5 390.0 467.0C388.8 468.5 387.5 470.3 385.0 472.5C382.5 474.7 378.5 477.9 375.0 480.0C371.5 482.1 367.3 483.9 364.0 485.3C360.7 486.7 358.5 487.6 355.0 488.6C351.5 489.6 348.5 490.4 343.0 491.4C337.5 492.3 328.8 493.7 322.0 494.3C315.2 494.9 308.8 495.0 302.0 494.8C295.2 494.6 288.0 494.1 281.0 493.0C274.0 491.9 266.8 490.0 260.0 488.2C253.2 486.4 246.7 484.2 240.0 482.0C233.3 479.8 226.7 477.7 220.0 475.0C213.3 472.3 206.7 469.5 200.0 466.0C193.3 462.5 186.7 458.3 180.0 454.0C173.3 449.7 166.7 445.3 160.0 440.0C153.3 434.7 145.2 427.2 140.0 422.0C134.8 416.8 132.7 413.5 129.0 409.0C125.3 404.5 121.7 400.2 118.0 395.0C114.3 389.8 110.3 383.5 107.0 378.0C103.7 372.5 100.5 366.7 98.0 362.0C95.5 357.3 94.2 354.5 92.0 350.0C89.8 345.5 87.0 340.0 85.0 335.0C83.0 330.0 81.5 325.0 80.0 320.0C78.5 315.0 77.2 310.0 76.0 305.0C74.8 300.0 73.6 295.0 72.5 290.0C71.4 285.0 70.3 280.0 69.6 275.0C68.9 270.0 68.4 265.0 68.2 260.0C68.0 255.0 68.2 250.0 68.4 245.0C68.6 240.0 69.0 235.0 69.5 230.0C70.0 225.0 70.8 219.7 71.5 215.0C72.2 210.3 73.1 206.2 74.0 202.0C74.9 197.8 76.0 193.7 77.0 190.0C78.0 186.3 79.0 183.7 79.7 180.0C80.4 176.3 80.9 172.0 81.3 168.0C81.7 164.0 81.9 159.7 82.0 156.0C82.1 152.3 82.0 147.7 82.0 146.0Z" fill="#dab66e"/>
<path d="M192.0 248.0C195.0 250.7 203.7 258.7 210.0 264.0C216.3 269.3 224.3 275.4 230.0 280.0C235.7 284.6 239.0 287.6 244.0 291.5C249.0 295.4 254.0 299.5 260.0 303.5C266.0 307.5 273.3 311.9 280.0 315.5C286.7 319.1 293.3 322.2 300.0 325.0C306.7 327.8 313.3 329.8 320.0 332.0C326.7 334.2 333.3 336.2 340.0 338.0C346.7 339.8 353.3 341.2 360.0 342.5C366.7 343.8 373.3 344.8 380.0 346.0C386.7 347.2 393.3 348.5 400.0 349.5C406.7 350.5 411.7 351.0 420.0 352.0C428.3 353.0 442.0 354.2 450.0 355.5C458.0 356.8 462.9 357.3 468.0 359.5C473.1 361.7 478.4 367.0 480.5 368.5" fill="none" stroke="#d5a65e" stroke-width="40" filter="url(#b1bl6)"/>
<path d="M171.0 228.5C174.5 231.8 185.5 242.1 192.0 248.0C198.5 253.9 203.7 258.7 210.0 264.0C216.3 269.3 224.3 275.4 230.0 280.0C235.7 284.6 239.0 287.6 244.0 291.5C249.0 295.4 254.0 299.5 260.0 303.5C266.0 307.5 273.3 311.9 280.0 315.5C286.7 319.1 293.3 322.2 300.0 325.0C306.7 327.8 313.3 329.8 320.0 332.0C326.7 334.2 333.3 336.2 340.0 338.0C346.7 339.8 353.3 341.2 360.0 342.5C366.7 343.8 373.3 344.8 380.0 346.0C386.7 347.2 393.3 348.5 400.0 349.5C406.7 350.5 411.7 351.0 420.0 352.0C428.3 353.0 442.0 354.2 450.0 355.5C458.0 356.8 462.9 357.3 468.0 359.5C473.1 361.7 478.4 367.0 480.5 368.5" fill="none" stroke="#d09c50" stroke-width="16" filter="url(#b1bl3)"/>
<path d="M124.5 147.5C125.0 150.0 126.2 156.8 127.5 162.5C128.8 168.2 130.0 176.2 132.0 182.0C134.0 187.8 136.0 192.0 139.5 197.0C143.0 202.0 147.8 206.8 153.0 212.0C158.2 217.2 164.5 222.5 171.0 228.5C177.5 234.5 188.5 244.8 192.0 248.0" fill="none" stroke="#d3a55c" stroke-width="12" filter="url(#b1bl3)"/>
<path d="M140.0 172.0C142.0 175.0 147.0 184.0 152.0 190.0C157.0 196.0 162.8 201.5 170.0 208.0C177.2 214.5 185.8 222.0 195.0 229.0C204.2 236.0 214.2 243.2 225.0 250.0C235.8 256.8 247.5 263.3 260.0 270.0C272.5 276.7 285.8 283.8 300.0 290.0C314.2 296.2 329.2 301.7 345.0 307.0C360.8 312.3 379.2 318.0 395.0 322.0C410.8 326.0 427.2 328.2 440.0 331.0C452.8 333.8 466.7 337.7 472.0 339.0" fill="none" stroke="#dcba74" stroke-width="12" filter="url(#b1bl3)" stroke-linecap="round"/>
<path d="M128.0 165.0C128.7 167.5 130.0 175.0 132.0 180.0C134.0 185.0 137.0 190.3 140.0 195.0C143.0 199.7 145.8 203.7 150.0 208.0C154.2 212.3 160.0 216.8 165.0 221.0C170.0 225.2 174.5 228.7 180.0 233.0C185.5 237.3 191.3 242.0 198.0 247.0C204.7 252.0 212.2 257.8 220.0 263.0C227.8 268.2 235.8 273.3 245.0 278.0C254.2 282.7 265.0 287.2 275.0 291.0C285.0 294.8 294.2 297.6 305.0 301.0C315.8 304.4 327.5 308.0 340.0 311.5C352.5 315.0 366.7 318.8 380.0 322.0C393.3 325.2 407.5 328.5 420.0 331.0C432.5 333.5 449.2 336.0 455.0 337.0" fill="none" stroke="#cda35a" stroke-width="1.6" filter="url(#b1bl1)" opacity="0.8"/>
<g clip-path="url(#b1clipB)">
<path d="M124.5 147.5C125.1 150.8 126.2 156.8 127.5 162.5C128.8 168.2 130.0 176.2 132.0 182.0C134.0 187.8 136.0 192.0 139.5 197.0C143.0 202.0 147.8 206.8 153.0 212.0C158.2 217.2 164.5 222.5 171.0 228.5C177.5 234.5 185.5 242.1 192.0 248.0C198.5 253.9 203.7 258.7 210.0 264.0C216.3 269.3 224.3 275.4 230.0 280.0C235.7 284.6 239.0 287.6 244.0 291.5C249.0 295.4 254.0 299.5 260.0 303.5C266.0 307.5 273.3 311.9 280.0 315.5C286.7 319.1 293.3 322.2 300.0 325.0C306.7 327.8 313.3 329.8 320.0 332.0C326.7 334.2 333.3 336.2 340.0 338.0C346.7 339.8 353.3 341.2 360.0 342.5C366.7 343.8 373.3 344.8 380.0 346.0C386.7 347.2 393.3 348.5 400.0 349.5C406.7 350.5 411.7 351.0 420.0 352.0C428.3 353.0 442.0 354.2 450.0 355.5C458.0 356.8 462.9 357.3 468.0 359.5C473.1 361.7 478.4 365.8 480.5 368.5C482.6 371.2 480.9 373.6 480.6 376.0C480.4 378.4 479.9 380.3 479.0 383.0C478.1 385.7 476.8 389.0 475.0 392.0C473.2 395.0 470.8 398.2 468.0 401.0C465.2 403.8 461.3 406.8 458.0 409.0C454.7 411.2 451.2 412.8 448.0 414.3C444.8 415.9 443.7 417.0 439.0 418.3C434.3 419.6 426.5 421.1 420.0 422.3C413.5 423.5 406.7 424.9 400.0 425.7C393.3 426.5 388.3 427.0 380.0 427.2C371.7 427.4 358.3 427.3 350.0 426.8C341.7 426.3 336.9 425.4 330.0 424.0C323.1 422.6 315.6 420.4 308.9 418.7C302.2 416.9 295.9 415.4 290.0 413.5C284.1 411.6 279.1 409.8 273.3 407.5C267.5 405.2 260.9 402.4 255.0 399.5C249.1 396.6 244.0 393.9 237.8 390.2C231.6 386.4 223.9 381.4 218.0 377.0C212.1 372.6 207.4 368.3 202.2 363.6C197.0 358.9 191.7 354.1 187.0 349.0C182.3 343.9 177.6 338.1 173.8 333.3C170.0 328.6 167.6 325.1 164.0 320.5C160.4 315.9 155.7 310.2 152.4 305.5C149.1 300.8 146.7 296.4 144.0 292.0C141.3 287.6 138.8 283.5 136.4 279.0C134.0 274.5 131.6 269.0 129.5 265.0C127.4 261.0 125.8 258.3 124.0 255.0C122.2 251.7 120.7 248.3 119.0 245.0C117.3 241.7 115.7 238.3 114.0 235.0C112.3 231.7 110.5 228.3 109.0 225.0C107.5 221.7 106.0 218.0 105.0 215.0C104.0 212.0 103.3 209.5 103.2 207.0C103.1 204.5 103.9 202.8 104.2 200.0C104.5 197.2 104.7 193.3 104.8 190.0C104.9 186.7 105.1 183.3 105.0 180.0C104.9 176.7 104.5 173.7 104.3 170.0C104.1 166.3 103.9 162.0 103.8 158.0C103.7 154.0 103.2 148.5 103.6 146.0C104.0 143.5 102.6 143.5 106.0 143.0C109.4 142.5 120.9 142.2 124.0 143.0C127.1 143.8 123.9 144.2 124.5 147.5Z" fill="#d7b36b"/>
<path d="M113.0 165.0C114.2 170.8 116.3 188.3 120.0 200.0C123.7 211.7 129.2 224.2 135.0 235.0C140.8 245.8 147.5 255.0 155.0 265.0C162.5 275.0 170.8 285.0 180.0 295.0C189.2 305.0 198.3 315.0 210.0 325.0C221.7 335.0 235.8 345.8 250.0 355.0C264.2 364.2 279.2 373.3 295.0 380.0C310.8 386.7 328.3 392.0 345.0 395.0C361.7 398.0 379.2 399.2 395.0 398.0C410.8 396.8 428.2 392.7 440.0 388.0C451.8 383.3 461.7 373.0 466.0 370.0" fill="none" stroke="#dfbf7f" stroke-width="26" filter="url(#b1bl10)" stroke-linecap="round"/>
<path d="M139.5 197.0C141.8 199.5 147.8 206.8 153.0 212.0C158.2 217.2 164.5 222.5 171.0 228.5C177.5 234.5 185.5 242.1 192.0 248.0C198.5 253.9 203.7 258.7 210.0 264.0C216.3 269.3 224.3 275.4 230.0 280.0C235.7 284.6 239.0 287.6 244.0 291.5C249.0 295.4 254.0 299.5 260.0 303.5C266.0 307.5 273.3 311.9 280.0 315.5C286.7 319.1 293.3 322.2 300.0 325.0C306.7 327.8 313.3 329.8 320.0 332.0C326.7 334.2 333.3 336.2 340.0 338.0C346.7 339.8 353.3 341.2 360.0 342.5C366.7 343.8 373.3 344.8 380.0 346.0C386.7 347.2 393.3 348.5 400.0 349.5C406.7 350.5 411.7 351.0 420.0 352.0C428.3 353.0 442.0 354.2 450.0 355.5C458.0 356.8 462.9 357.3 468.0 359.5C473.1 361.7 478.4 367.0 480.5 368.5" fill="none" stroke="#e0c080" stroke-width="3" filter="url(#b1bl1)" opacity="0.7"/>
<path d="M103.2 207.0C103.5 208.3 104.0 212.0 105.0 215.0C106.0 218.0 107.5 221.7 109.0 225.0C110.5 228.3 112.3 231.7 114.0 235.0C115.7 238.3 117.3 241.7 119.0 245.0C120.7 248.3 122.2 251.7 124.0 255.0C125.8 258.3 127.4 261.0 129.5 265.0C131.6 269.0 134.0 274.5 136.4 279.0C138.8 283.5 141.3 287.6 144.0 292.0C146.7 296.4 149.1 300.8 152.4 305.5C155.7 310.2 160.4 315.9 164.0 320.5C167.6 325.1 170.0 328.6 173.8 333.3C177.6 338.1 182.3 343.9 187.0 349.0C191.7 354.1 197.0 358.9 202.2 363.6C207.4 368.3 212.1 372.6 218.0 377.0C223.9 381.4 231.6 386.4 237.8 390.2C244.0 393.9 249.1 396.6 255.0 399.5C260.9 402.4 267.5 405.2 273.3 407.5C279.1 409.8 284.1 411.6 290.0 413.5C295.9 415.4 302.2 416.9 308.9 418.7C315.6 420.4 323.1 422.6 330.0 424.0C336.9 425.4 341.7 426.3 350.0 426.8C358.3 427.3 371.7 427.4 380.0 427.2C388.3 427.0 393.3 426.5 400.0 425.7C406.7 424.9 413.5 423.5 420.0 422.3C426.5 421.1 435.8 419.0 439.0 418.3" fill="none" stroke="url(#b1gb)" stroke-width="15" filter="url(#b1bl2)"/>
<path d="M104.2 200.0C104.3 198.3 104.7 193.3 104.8 190.0C104.9 186.7 105.1 183.3 105.0 180.0C104.9 176.7 104.5 173.7 104.3 170.0C104.1 166.3 103.9 162.0 103.8 158.0C103.7 154.0 103.6 148.0 103.6 146.0" fill="none" stroke="#c48c34" stroke-width="6" filter="url(#b1bl2)"/>
</g>
<path d="M330 424L350 429L370 434L380 436.5L387 439.5L392.5 463.6L400 464.3L422 461L442 450.5L451.7 434.5L439 418.3L439 418.3L420 422.3L400 425.7L380 427.2L350 426.8L330 424Z" fill="#d3a754"/>
<path d="M330.0 424.0C333.3 424.5 341.7 426.3 350.0 426.8C358.3 427.3 371.7 427.4 380.0 427.2C388.3 427.0 393.3 426.5 400.0 425.7C406.7 424.9 413.5 423.5 420.0 422.3C426.5 421.1 435.8 419.0 439.0 418.3" fill="none" stroke="#c2903c" stroke-width="1.2" filter="url(#b1bl1)" transform="translate(0 1)"/>
<g clip-path="url(#b1clipA)">
<path d="M392.5 463.6C392.1 464.2 391.2 465.5 390.0 467.0C388.8 468.5 387.5 470.3 385.0 472.5C382.5 474.7 378.5 477.9 375.0 480.0C371.5 482.1 367.3 483.9 364.0 485.3C360.7 486.7 358.5 487.6 355.0 488.6C351.5 489.6 348.5 490.4 343.0 491.4C337.5 492.3 328.8 493.7 322.0 494.3C315.2 494.9 308.8 495.0 302.0 494.8C295.2 494.6 288.0 494.1 281.0 493.0C274.0 491.9 266.8 490.0 260.0 488.2C253.2 486.4 246.7 484.2 240.0 482.0C233.3 479.8 226.7 477.7 220.0 475.0C213.3 472.3 206.7 469.5 200.0 466.0C193.3 462.5 186.7 458.3 180.0 454.0C173.3 449.7 166.7 445.3 160.0 440.0C153.3 434.7 145.2 427.2 140.0 422.0C134.8 416.8 132.7 413.5 129.0 409.0C125.3 404.5 121.7 400.2 118.0 395.0C114.3 389.8 110.3 383.5 107.0 378.0C103.7 372.5 100.5 366.7 98.0 362.0C95.5 357.3 94.2 354.5 92.0 350.0C89.8 345.5 87.0 340.0 85.0 335.0C83.0 330.0 81.5 325.0 80.0 320.0C78.5 315.0 77.2 310.0 76.0 305.0C74.8 300.0 73.6 295.0 72.5 290.0C71.4 285.0 70.3 280.0 69.6 275.0C68.9 270.0 68.4 265.0 68.2 260.0C68.0 255.0 68.2 250.0 68.4 245.0C68.6 240.0 69.0 235.0 69.5 230.0C70.0 225.0 70.8 219.7 71.5 215.0C72.2 210.3 73.1 206.2 74.0 202.0C74.9 197.8 76.0 193.7 77.0 190.0C78.0 186.3 79.0 183.7 79.7 180.0C80.4 176.3 80.9 172.0 81.3 168.0C81.7 164.0 81.9 159.7 82.0 156.0C82.1 152.3 81.7 148.2 82.0 146.0C82.3 143.8 80.7 143.5 84.0 143.0C87.3 142.5 98.9 142.8 102.0 143.0C105.1 143.2 102.7 142.0 102.6 144.0C102.5 146.0 101.7 151.5 101.2 155.0C100.7 158.5 100.1 161.7 99.6 165.0C99.1 168.3 98.6 172.0 98.2 175.0C97.8 178.0 97.2 180.4 97.2 183.0C97.2 185.6 97.4 187.7 98.0 190.5C98.6 193.3 99.9 197.2 100.8 200.0C101.7 202.8 102.5 204.5 103.2 207.0C103.9 209.5 104.0 212.0 105.0 215.0C106.0 218.0 107.5 221.7 109.0 225.0C110.5 228.3 112.3 231.7 114.0 235.0C115.7 238.3 117.3 241.7 119.0 245.0C120.7 248.3 122.2 251.7 124.0 255.0C125.8 258.3 127.4 261.0 129.5 265.0C131.6 269.0 134.0 274.5 136.4 279.0C138.8 283.5 141.3 287.6 144.0 292.0C146.7 296.4 149.1 300.8 152.4 305.5C155.7 310.2 160.4 315.9 164.0 320.5C167.6 325.1 170.0 328.6 173.8 333.3C177.6 338.1 182.3 343.9 187.0 349.0C191.7 354.1 197.0 358.9 202.2 363.6C207.4 368.3 212.1 372.6 218.0 377.0C223.9 381.4 231.6 386.4 237.8 390.2C244.0 393.9 249.1 396.6 255.0 399.5C260.9 402.4 267.5 405.2 273.3 407.5C279.1 409.8 284.1 411.6 290.0 413.5C295.9 415.4 302.2 416.9 308.9 418.7C315.6 420.4 323.1 422.3 330.0 424.0C336.9 425.7 343.3 427.3 350.0 429.0C356.7 430.7 365.0 432.8 370.0 434.0C375.0 435.2 377.2 435.6 380.0 436.5C382.8 437.4 384.9 437.9 387.0 439.5C389.1 441.1 391.2 443.4 392.5 446.0C393.8 448.6 395.0 452.1 395.0 455.0C395.0 457.9 392.9 462.2 392.5 463.6C392.1 465.0 392.9 463.0 392.5 463.6Z" fill="#dab770"/>
<path d="M129.5 265.0C130.7 267.3 134.0 274.5 136.4 279.0C138.8 283.5 141.3 287.6 144.0 292.0C146.7 296.4 149.1 300.8 152.4 305.5C155.7 310.2 160.4 315.9 164.0 320.5C167.6 325.1 170.0 328.6 173.8 333.3C177.6 338.1 182.3 343.9 187.0 349.0C191.7 354.1 197.0 358.9 202.2 363.6C207.4 368.3 212.1 372.6 218.0 377.0C223.9 381.4 231.6 386.4 237.8 390.2C244.0 393.9 249.1 396.6 255.0 399.5C260.9 402.4 267.5 405.2 273.3 407.5C279.1 409.8 284.1 411.6 290.0 413.5C295.9 415.4 302.2 416.9 308.9 418.7C315.6 420.4 323.1 422.3 330.0 424.0C336.9 425.7 343.3 427.3 350.0 429.0C356.7 430.7 365.0 432.8 370.0 434.0C375.0 435.2 377.2 435.6 380.0 436.5C382.8 437.4 385.8 439.0 387.0 439.5" fill="none" stroke="url(#b1ga)" stroke-width="62" filter="url(#b1bl6)"/>
<path d="M103.2 207.0C103.5 208.3 104.0 212.0 105.0 215.0C106.0 218.0 107.5 221.7 109.0 225.0C110.5 228.3 112.3 231.7 114.0 235.0C115.7 238.3 117.3 241.7 119.0 245.0C120.7 248.3 122.2 251.7 124.0 255.0C125.8 258.3 127.4 261.0 129.5 265.0C131.6 269.0 135.2 276.7 136.4 279.0" fill="none" stroke="#d5a654" stroke-width="14" filter="url(#b1bl6)"/>
<path d="M74.0 215.0C73.8 220.8 72.3 237.5 73.0 250.0C73.7 262.5 75.5 277.5 78.0 290.0C80.5 302.5 84.0 314.2 88.0 325.0C92.0 335.8 96.3 344.5 102.0 355.0C107.7 365.5 114.3 377.2 122.0 388.0C129.7 398.8 137.5 410.2 148.0 420.0C158.5 429.8 172.2 439.3 185.0 447.0C197.8 454.7 210.8 460.5 225.0 466.0C239.2 471.5 255.0 476.8 270.0 480.0C285.0 483.2 300.8 485.7 315.0 485.0C329.2 484.3 348.3 477.5 355.0 476.0" fill="none" stroke="#dcba76" stroke-width="16" filter="url(#b1bl6)" stroke-linecap="round"/>
</g>
<path d="M103.2 207.0C103.5 208.3 104.0 212.0 105.0 215.0C106.0 218.0 107.5 221.7 109.0 225.0C110.5 228.3 112.3 231.7 114.0 235.0C115.7 238.3 117.3 241.7 119.0 245.0C120.7 248.3 122.2 251.7 124.0 255.0C125.8 258.3 127.4 261.0 129.5 265.0C131.6 269.0 134.0 274.5 136.4 279.0C138.8 283.5 141.3 287.6 144.0 292.0C146.7 296.4 149.1 300.8 152.4 305.5C155.7 310.2 160.4 315.9 164.0 320.5C167.6 325.1 170.0 328.6 173.8 333.3C177.6 338.1 182.3 343.9 187.0 349.0C191.7 354.1 197.0 358.9 202.2 363.6C207.4 368.3 212.1 372.6 218.0 377.0C223.9 381.4 231.6 386.4 237.8 390.2C244.0 393.9 249.1 396.6 255.0 399.5C260.9 402.4 267.5 405.2 273.3 407.5C279.1 409.8 284.1 411.6 290.0 413.5C295.9 415.4 302.2 416.9 308.9 418.7C315.6 420.4 326.5 423.1 330.0 424.0" fill="none" stroke="#b07c2a" stroke-width="1.3" filter="url(#b1bl1)"/>
<path d="M330.0 424.0C333.3 424.8 343.3 427.3 350.0 429.0C356.7 430.7 365.0 432.8 370.0 434.0C375.0 435.2 377.2 435.6 380.0 436.5C382.8 437.4 385.8 439.0 387.0 439.5" fill="none" stroke="#b98a3a" stroke-width="1.4" filter="url(#b1bl1)"/>
<path d="M470.5 343.5L476 341.5L483 341.5L488.5 348L488.6 355L485.5 359.5L481 361L478.5 356L476 349.5Z" fill="#2a1a12" filter="url(#b1bl1)"/>
<path d="M466.5 357.5L473 360L478.5 366.5L478 368.5L471 362.5Z" fill="#3a2814" filter="url(#b1bl1)"/>
<path d="M441 425L446.5 426L451 431L452 437L450.5 443L446.5 444.5L443.5 443L442.5 436Z" fill="#1c140c" filter="url(#b1bl1)"/>
<path d="M386.5 439L390.5 441L395 448L397 455L395.5 459.5L393.5 457L391 450L387.5 443.5Z" fill="#1c140c" filter="url(#b1bl1)"/>
<path d="M80 151H138" stroke="#c39a2c" stroke-width="13" filter="url(#b1bl3)" opacity="0.7"/><path d="M84 149V155M89 149V153M94 148V154M99 147V152M107 148V156M112 149V155M117 148V156M122 149V154M127 149V157M132 148V156" stroke="#3a2a10" stroke-width="1.6" filter="url(#b1bl1)" opacity="0.55"/>
<path d="M70 100H140V140L136 150L132 144L128 151L124 145L121 149L117 144L113 150L108 145L104 148L99 143L95 149L90 144L86 150L82 146L70 146Z" fill="url(#b1stemg)" filter="url(#b1stx)"/>
<ellipse cx="98" cy="121" rx="13" ry="6" fill="#7a5c56" opacity="0.38" filter="url(#b1bl3)"/>
<ellipse cx="84" cy="119" rx="5" ry="5" fill="#6e5248" opacity="0.45" filter="url(#b1bl2)"/>
<ellipse cx="118" cy="114" rx="7" ry="4" fill="#5e463c" opacity="0.35" filter="url(#b1bl2)"/>
<path d="M88 112L96 116M104 126L110 122M92 128L98 131" stroke="#120c0a" stroke-width="1.6" filter="url(#b1bl1)" opacity="0.7"/>
</g>
</svg>
<div style="left:0.00px;top:0.00px;width:524.50px;height:25.00px;background:#303030;"></div>
<div style="left:8.50px;top:5.00px;width:27.50px;height:17.10px;background:#2b2b2b;border-radius:4px;"></div>
<svg class="a" style="left:10.30px;top:5.40px" width="16" height="16" viewBox="0 0 16 16"><path d="M0.3 3.2Q0.3 0.2 3 0.2H14.2Q15.2 0.2 15.2 1.2V12Q15.2 13 14.2 13H4.6V14.5Q4.6 15.6 3.4 15.6H1.5Q0.3 15.6 0.3 14.5Z" fill="#e6e6e6"/><path d="M1.4 0.8H14.6" stroke="#9a9a9a" stroke-width="0.9"/><path d="M1.6 2.7H8M4.9 2.7V12.4" stroke="#1c1c1c" stroke-width="1" fill="none"/><g fill="#1c1c1c"><rect x="10.6" y="1.5" width="2" height="2"/><rect x="8.5" y="3.5" width="2" height="2"/><rect x="6.4" y="5.7" width="2" height="2"/><rect x="10.6" y="5.7" width="2" height="2"/><rect x="8.5" y="7.7" width="2" height="2"/><rect x="6.4" y="9.9" width="2" height="2"/><rect x="10.6" y="9.9" width="2" height="2"/></g></svg>
<svg class="a" style="left:27.20px;top:11.10px" width="8" height="6" viewBox="0 0 8 6"><path d="M0.9 1.2L4 4.3l3.1-3.1" stroke="#d0d0d0" stroke-width="1.1" fill="none"/></svg>
<span style="left:49.50px;top:7.48px;font-size:11.3px;color:#e4e4e4;letter-spacing:0.227px;">View</span>
<span style="left:90.40px;top:7.48px;font-size:11.3px;color:#e4e4e4;letter-spacing:0.424px;">Image</span>
<div style="left:147.00px;top:4.50px;width:31.50px;height:18.00px;background:#2b2b2b;border-radius:4px 0 0 4px;"></div>
<svg class="a" style="left:150.20px;top:5.30px" width="16" height="16" viewBox="0 0 16 16"><rect x="0.7" y="0.7" width="14.2" height="14.2" rx="2.2" fill="none" stroke="#b4b4b4" stroke-width="1.3"/><path d="M-0.4 15.2L5 6.6L10.6 15.2Z" fill="#e6e6e6" stroke="#2b2b2b" stroke-width="1.3"/><path d="M0.3 14.9L5 7.1L9.8 14.9Z" fill="#f0f0f0"/><circle cx="10.2" cy="5.2" r="1.6" fill="#f0f0f0"/></svg>
<svg class="a" style="left:167.70px;top:11.10px" width="8" height="6" viewBox="0 0 8 6"><path d="M0.9 1.2L4 4.3l3.1-3.1" stroke="#d0d0d0" stroke-width="1.1" fill="none"/></svg>
<div style="left:178.50px;top:4.50px;width:92.00px;height:18.00px;background:#1d1d1d;"></div>
<span style="left:185.58px;top:7.48px;font-size:11.3px;color:#e4e4e4;letter-spacing:0.486px;">__outliner.png</span>
<div style="left:270.50px;top:4.50px;width:19.75px;height:18.00px;background:#545454;"></div>
<svg class="a" style="left:273.50px;top:5.80px" width="15" height="16" viewBox="0 0 15 16"><path d="M7.3 0.7C6 2.1 3.4 2.7 1 2.7C0.8 7.3 2 11.8 7.3 14.7C12.6 11.8 13.8 7.3 13.6 2.7C11.2 2.7 8.6 2.1 7.3 0.7Z" fill="none" stroke="#9c9c9c" stroke-width="1.2"/></svg>
<div style="left:291.00px;top:4.50px;width:19.25px;height:18.00px;background:#545454;"></div>
<svg class="a" style="left:293.50px;top:5.80px" width="15" height="15" viewBox="0 0 15 15"><g fill="none" stroke="#c4c4c4" stroke-width="1.25"><path d="M4 4.3H1.3Q0.7 4.3 0.7 4.9V13.7Q0.7 14.3 1.3 14.3H10.2Q10.8 14.3 10.8 13.7V11"/><path d="M4.7 0.7H10.4L13.9 4.2V9.6Q13.9 10.3 13.2 10.3H5.4Q4.7 10.3 4.7 9.6Z"/></g><path d="M10 0.2L14.4 4.6H10Z" fill="#e4e4e4"/></svg>
<div style="left:311.00px;top:4.50px;width:19.25px;height:18.00px;background:#545454;"></div>
<svg class="a" style="left:313.10px;top:5.80px" width="16" height="16" viewBox="0 0 16 16"><path d="M0 8.9H9.5V15H0.6Q0 15 0 14.4Z" fill="#e6e6e6"/><path d="M10.3 8.6L15 4.4V10.4L10.3 15Z" fill="#f2f2f2"/><rect x="2.4" y="3.8" width="7" height="3.6" rx="0.4" fill="#e6e6e6"/><path d="M2.4 5.6H9.4" stroke="#888" stroke-width="0.5"/><path d="M5.4 0.2H12.4V3.6H10.2V3H5.4Z" fill="#f0f0f0"/><path d="M10.4 3.6H12.4V6.2L10.4 7.9Z" fill="#e0e0e0"/></svg>
<div style="left:331.00px;top:4.50px;width:19.25px;height:18.00px;background:#545454;border-radius:0 4px 4px 0;"></div>
<svg class="a" style="left:336.20px;top:9.50px" width="9" height="9" viewBox="0 0 9 9"><path d="M0.5 0.5L8.2 8.2M8.2 0.5L0.5 8.2" stroke="#dcdcdc" stroke-width="1.2" fill="none"/></svg>
<svg class="a" style="left:357.90px;top:5.80px" width="16" height="16" viewBox="0 0 16 16"><path d="M0.6 14.5L5.2 9.9" stroke="#f0f0f0" stroke-width="1.3" stroke-linecap="round"/><path d="M2.3 5.5Q5.8 5 9.1 2.6L12.8 6.4Q10.6 9.4 10.2 12.7L8.6 12.8L2.4 6.6Z" fill="#fafafa"/><path d="M10.4 0.9L14.4 4.9" stroke="#fafafa" stroke-width="2.1" stroke-linecap="round"/></svg>
<div style="left:393.50px;top:4.25px;width:19.00px;height:18.50px;background:#4772b3;border-radius:4px 0 0 4px;"></div>
<div style="left:412.50px;top:4.25px;width:18.50px;height:18.50px;background:#2b2b2b;border-radius:0 4px 4px 0;"></div>
<svg class="a" style="left:393.50px;top:4.25px" width="19" height="19" viewBox="0 0 19 19"><g fill="none" stroke="#eef3ff" stroke-width="1.3" stroke-linecap="round"><path d="M2.2 4.4Q12.5 5 14.3 16"/><circle cx="4.2" cy="14.3" r="1.55"/><path d="M5.4 13.1L9.1 9.5M12.4 6.3L15.2 3.5"/></g><path d="M17 1.7L12.2 2L16.7 6.6Z" fill="#eef3ff"/></svg>
<svg class="a" style="left:418.00px;top:11.30px" width="8" height="6" viewBox="0 0 8 6"><path d="M0.9 1.2L4 4.3l3.1-3.1" stroke="#d0d0d0" stroke-width="1.1" fill="none"/></svg>
<div style="left:437.50px;top:4.25px;width:19.00px;height:18.50px;background:#4772b3;border-radius:4px 0 0 4px;"></div>
<div style="left:456.50px;top:4.25px;width:19.00px;height:18.50px;background:#2b2b2b;border-radius:0 4px 4px 0;"></div>
<svg class="a" style="left:437.50px;top:4.25px" width="19" height="19" viewBox="0 0 19 19"><defs><mask id="ovm"><rect width="19" height="19" fill="#fff"/><circle cx="11.6" cy="6.8" r="5.9" fill="#000"/></mask></defs><circle cx="11.6" cy="6.8" r="4.8" fill="#fafcff"/><circle cx="6.9" cy="11.6" r="4.7" fill="none" stroke="#e6f0ff" stroke-width="1.25" mask="url(#ovm)"/><ellipse cx="9.8" cy="8.7" rx="1" ry="0.6" transform="rotate(40 9.8 8.7)" fill="#456"/></svg>
<svg class="a" style="left:462.00px;top:11.30px" width="8" height="6" viewBox="0 0 8 6"><path d="M0.9 1.2L4 4.3l3.1-3.1" stroke="#d0d0d0" stroke-width="1.1" fill="none"/></svg>
<div style="left:486.50px;top:4.50px;width:30.25px;height:18.00px;background:#2b2b2b;border-radius:4px;"></div>
<svg class="a" style="left:489.60px;top:5.60px" width="16" height="16" viewBox="0 0 16 16"><rect x="0.2" y="0.2" width="14.8" height="14.8" rx="1.4" fill="#ececec"/><path d="M2.9 1.7H13.4V12.4Z" fill="#1b1b1b"/><circle cx="11.2" cy="5" r="1.6" fill="#f4f4f4"/><path d="M1.9 13.4H7.8L5 6.8Z" fill="#787878"/></svg>
<svg class="a" style="left:506.70px;top:11.30px" width="8" height="6" viewBox="0 0 8 6"><path d="M0.9 1.2L4 4.3l3.1-3.1" stroke="#d0d0d0" stroke-width="1.1" fill="none"/></svg>
<div style="left:6.90px;top:28.75px;width:19.00px;height:18.50px;background:#4772b3;border-radius:3px 0 0 3px;"></div>
<div style="left:26.40px;top:28.75px;width:18.50px;height:18.50px;background:#545454;"></div>
<div style="left:45.40px;top:28.75px;width:18.50px;height:18.50px;background:#545454;border-radius:0 3px 3px 0;"></div>
<svg class="a" style="left:6.90px;top:28.75px" width="19" height="19" viewBox="0 0 19 19"><rect x="2.5" y="2.3" width="14" height="13.8" rx="1.2" fill="none" stroke="#e6eeff" stroke-width="1.6" stroke-dasharray="2.35 1.9" stroke-dashoffset="1.1"/></svg>
<svg class="a" style="left:26.40px;top:28.75px" width="19" height="19" viewBox="0 0 19 19"><path d="M6.6 1.9H16.3V10.9H12V16.3H2.1V6.6H6.6Z" fill="#c8c8c8"/></svg>
<svg class="a" style="left:45.40px;top:28.75px" width="19" height="19" viewBox="0 0 19 19"><path d="M6.4 1.9H16.4V11.2H12.2V6.4H6.4Z" fill="#c8c8c8"/><path d="M2.6 7.6V15.6H11.4" fill="none" stroke="#bdbdbd" stroke-width="1.5" stroke-dasharray="1.7 2.1"/></svg>
<div style="left:6.90px;top:59.50px;width:39.00px;height:33.00px;background:#4772b3;border-radius:4px 4px 0 0;"></div>
<svg class="a" style="left:13.60px;top:64.50px" width="31" height="30" viewBox="0 0 31 30"><rect x="0.7" y="1.2" width="22.4" height="21.6" rx="2" fill="none" stroke="#e2a83c" stroke-width="1.4" stroke-dasharray="3.2 2.3" stroke-dashoffset="1.6"/><path d="M8.2 6.6L16.8 14L12.2 14.6L8.7 18.2Z" fill="#f4f6fb"/><path d="M30 26.2V29H27.2Z" fill="#9db9e8"/></svg>
<div style="left:6.90px;top:93.00px;width:39.00px;height:34.25px;background:#232323;border-radius:0 0 4px 4px;box-shadow:0 0 0 0.6px #333;"></div>
<svg class="a" style="left:13.60px;top:98.62px" width="24" height="24" viewBox="0 0 24 24"><circle cx="12" cy="12" r="10.9" fill="none" stroke="#9a2f3c" stroke-width="1.5"/><circle cx="12" cy="12" r="10.9" fill="none" stroke="#f2f2f2" stroke-width="1.5" stroke-dasharray="5.6 2.96" stroke-dashoffset="2.8"/><path d="M4.6 12H9.8M14.2 12H19.4M12 4.6V9.8M12 14.2V19.4" stroke="#b0b0b0" stroke-width="1.3" fill="none"/></svg>
<div style="left:6.90px;top:133.50px;width:39.00px;height:33.50px;background:#232323;border-radius:4px 4px 0 0;box-shadow:0 0 0 0.6px #333;"></div>
<svg class="a" style="left:13.60px;top:138.75px" width="24" height="24" viewBox="0 0 24 24"><g fill="#ececec"><path d="M12 0.6L15.1 5H8.9Z"/><rect x="11.2" y="6" width="1.6" height="3.4"/><g transform="rotate(90 12 12)"><path d="M12 0.6L15.1 5H8.9Z"/><rect x="11.2" y="6" width="1.6" height="3.4"/></g><g transform="rotate(180 12 12)"><path d="M12 0.6L15.1 5H8.9Z"/><rect x="11.2" y="6" width="1.6" height="3.4"/></g><g transform="rotate(270 12 12)"><path d="M12 0.6L15.1 5H8.9Z"/><rect x="11.2" y="6" width="1.6" height="3.4"/></g></g></svg>
<div style="left:6.90px;top:167.50px;width:39.00px;height:34.50px;background:#232323;border-radius:0 0 0 0;box-shadow:0 0 0 0.6px #333;"></div>
<svg class="a" style="left:13.60px;top:173.25px" width="24" height="24" viewBox="0 0 24 24"><g fill="none" stroke="#e0e0e0" stroke-width="1.2"><path d="M3.4 11.4A8.7 8.7 0 0 1 18.6 6.2"/><path d="M20.6 12.6A8.7 8.7 0 0 1 5.4 17.8"/></g><path d="M0.4 11L6.2 11L3.3 15.4Z" fill="#ececec"/><path d="M23.6 13L17.8 13L20.7 8.6Z" fill="#ececec"/><path d="M12 8.2L15.8 12L12 15.8L8.2 12Z" fill="#a8a8a8"/></svg>
<div style="left:6.90px;top:202.50px;width:39.00px;height:33.50px;background:#232323;border-radius:0 0 0 0;box-shadow:0 0 0 0.6px #333;"></div>
<svg class="a" style="left:13.60px;top:207.75px" width="24" height="24" viewBox="0 0 24 24"><path d="M4.2 7.6V3.6H20.6V20H16.8" fill="none" stroke="#a8a8a8" stroke-width="1.3"/><rect x="3.4" y="11.8" width="9" height="8.6" fill="#ececec"/><path d="M13.4 10.6L17.4 6.6" stroke="#e4e4e4" stroke-width="1.2"/><path d="M18.6 5.4L14.8 6L18 9.2Z" fill="#ececec"/></svg>
<div style="left:6.90px;top:236.50px;width:39.00px;height:34.50px;background:#232323;border-radius:0 0 4px 4px;box-shadow:0 0 0 0.6px #333;"></div>
<svg class="a" style="left:13.60px;top:242.25px" width="24" height="24" viewBox="0 0 24 24"><circle cx="12" cy="12" r="9.3" fill="none" stroke="#dcdcdc" stroke-width="1.2" stroke-dasharray="8.6 6" stroke-dashoffset="-3"/><g fill="#ececec"><path d="M12 1L14.9 5.2H9.1Z"/><path d="M12 23L14.9 18.8H9.1Z"/><path d="M1 12L5.2 9.1V14.9Z"/><path d="M23 12L18.8 9.1V14.9Z"/><rect x="7.8" y="7.8" width="8.4" height="8.4" rx="1.3"/></g></svg>
<div style="left:6.90px;top:277.50px;width:39.00px;height:33.50px;background:#232323;border-radius:4px 4px 4px 4px;box-shadow:0 0 0 0.6px #333;"></div>
<svg class="a" style="left:12.10px;top:281.75px" width="31" height="28" viewBox="0 0 31 28"><path d="M3.6 17.4L15.6 5.4L18.8 8.6L6.8 20.6L2.6 21.6Z" fill="#ececec"/><path d="M16.6 4.4L17.8 3.2Q18.6 2.6 19.4 3.3L20.9 4.8Q21.6 5.6 20.9 6.4L19.8 7.6Z" fill="#ececec"/><path d="M3.6 21.2C7 24.6 10.6 23.6 13.6 20.6C16.6 17.6 20.6 17.2 23.8 22" fill="none" stroke="#78c6ac" stroke-width="1.5" stroke-linecap="round"/><path d="M30.6 23.4V27.6H26.4Z" fill="#8e8e8e"/></svg>
<div style="left:6.90px;top:317.25px;width:39.00px;height:31.85px;background:#232323;border-radius:4px 4px 4px 4px;box-shadow:0 0 0 0.6px #333;"></div>
<svg class="a" style="left:11.10px;top:321.68px" width="26" height="24" viewBox="0 0 26 24"><g fill="none" stroke="#e0e0e0" stroke-width="1.1" stroke-linejoin="round"><path d="M6.6 6.6L11 2.4H24.6V15.4L20 20.4H6.6Z"/><path d="M6.6 6.6H20V20.4M20 6.6L24.6 2.4"/><path d="M1.4 12.6L20 6.8"/></g><circle cx="1.6" cy="12.6" r="1.5" fill="#c4b8f4"/></svg>
<div style="left:6.90px;top:356.50px;width:39.00px;height:32.60px;background:#232323;border-radius:4px 4px 0 0;box-shadow:0 0 0 0.6px #333;"></div>
<svg class="a" style="left:13.60px;top:361.30px" width="24" height="24" viewBox="0 0 24 24"><path d="M7.6 19.6C5 16.4 3.6 13.6 3.6 11.2C3.6 9.6 5.4 9.2 6.2 10.6L6.6 6.6C6.8 4.8 9 4.8 9.2 6.4C9.4 4 12.2 4 12.4 6.2C12.8 4.4 15.4 4.6 15.6 6.6C16.2 5.4 18.4 5.8 18.4 7.6C18.8 11.6 18.6 15.6 17 19.6Z" fill="none" stroke="#e4e4e4" stroke-width="1.25" stroke-linejoin="round"/></svg>
<div style="left:6.90px;top:389.50px;width:39.00px;height:36.00px;background:#232323;border-radius:0 0 0 0;box-shadow:0 0 0 0.6px #333;"></div>
<svg class="a" style="left:13.60px;top:396.00px" width="24" height="24" viewBox="0 0 24 24"><g fill="none" stroke="#e4e4e4" stroke-width="1.2" stroke-linejoin="round" stroke-linecap="round"><path d="M5 13.6L12.6 21.4L18.4 18.4C19.2 15.4 18.4 12.6 16.2 10.2L13.4 7.6C12 6.2 10.2 7.8 11.4 9.4L13.2 12.4L8.6 12.8C7 11.8 5.2 11.6 5 13.6Z"/><path d="M10.4 4.2Q12.6 2.4 14.8 4"/><path d="M2.4 13V15.2H4"/><path d="M12.6 1.4H14.6V3"/></g><circle cx="11.6" cy="11.4" r="1.4" fill="#bbb"/></svg>
<div style="left:6.90px;top:426.00px;width:39.00px;height:33.50px;background:#232323;border-radius:0 0 4px 4px;box-shadow:0 0 0 0.6px #333;"></div>
<svg class="a" style="left:13.60px;top:431.25px" width="24" height="24" viewBox="0 0 24 24"><g fill="none" stroke="#e4e4e4" stroke-width="1.2" stroke-linecap="round"><path d="M10.6 1.6L11.4 3.6H13.4"/><path d="M7 10.4C8.2 6.6 13 5.6 15.6 9.6"/><path d="M4.6 12.2C7.4 8.4 13.4 7.4 17.8 12.6"/><path d="M9.8 12.4C10.8 9.8 13.4 10 14.4 12.4"/></g></svg>
<div class="a" style="left:490.50px;top:61.00px;width:23px;height:23px;border-radius:50%;background:#272727"></div>
<div class="a" style="left:490.50px;top:91.50px;width:23px;height:23px;border-radius:50%;background:#272727"></div>
<svg class="a" style="left:491.50px;top:63.00px" width="20" height="20" viewBox="0 0 20 20"><circle cx="12.2" cy="7.6" r="5.9" fill="#d4d4d4"/><path d="M7.6 12.4L2.4 17.4" stroke="#d4d4d4" stroke-width="2.2" stroke-linecap="round"/><path d="M9.2 7.6H15.2M12.2 4.6V10.6" stroke="#2a2a2a" stroke-width="1.2"/></svg>
<svg class="a" style="left:492.20px;top:93.00px" width="20" height="20" viewBox="0 0 20 20"><path d="M6.8 17.6C4.6 15.6 3.2 13.6 1.6 11.6C0.8 10.2 2.4 9.2 3.6 10.2L5.6 11.8L4.6 4.6C4.4 3 6.4 2.6 6.8 4.2L8 9L8.4 2.4C8.5 0.8 10.6 0.8 10.7 2.4L11 9L12.4 3.4C12.8 1.9 14.8 2.4 14.5 4L13.6 10L15.6 6.6C16.4 5.2 18.2 6.2 17.5 7.7L15 14.4C14.4 16.4 13 17.8 10.6 18.2C9.2 18.4 7.8 18.2 6.8 17.6Z" fill="#dcdcdc"/></svg>
<svg class="a" style="left:518.00px;top:67.50px" width="6" height="11" viewBox="0 0 6 11"><path d="M5.2 0.8L1 5.5l4.2 4.7" stroke="#aaa" stroke-width="1" fill="none"/></svg>
</div>
<div class="ed" style="left:1078.5px;top:52.5px;width:520.0px;height:442.5px;background:#303030">
<div class="chk" style="left:27.50px;top:25.50px;width:465.50px;height:417px;background-position:-12.67px -9.13px"></div>
<div style="left:27.00px;top:25.50px;width:1.00px;height:417.00px;background:#4a4a4a;"></div>
<div style="left:492.50px;top:25.50px;width:1.00px;height:417.00px;background:#4a4a4a;"></div>
<svg class="a" style="left:27.50px;top:25.50px" width="465.50" height="417.00" viewBox="1106.00 78 465.50 417.00" shape-rendering="crispEdges"><g transform="translate(1106.0 51.72) scale(4.849)"><rect x="11" y="12" width="3.02" height="1.02" fill="#010101"/><rect x="14" y="12" width="1.02" height="1.02" fill="#090705"/><rect x="15" y="12" width="1.02" height="1.02" fill="#100c0a"/><rect x="16" y="12" width="1.02" height="1.02" fill="#18120f"/><rect x="17" y="12" width="1.02" height="1.02" fill="#060503"/><rect x="18" y="12" width="1.02" height="1.02" fill="#000000"/><rect x="9" y="13" width="1.02" height="1.02" fill="#000000"/><rect x="10" y="13" width="1.02" height="1.02" fill="#0e0a08"/><rect x="11" y="13" width="1.02" height="1.02" fill="#19120e"/><rect x="12" y="13" width="1.02" height="1.02" fill="#2b1f1a"/><rect x="13" y="13" width="1.02" height="1.02" fill="#362621"/><rect x="14" y="13" width="2.02" height="1.02" fill="#291d18"/><rect x="16" y="13" width="2.02" height="1.02" fill="#2d201b"/><rect x="18" y="13" width="1.02" height="1.02" fill="#241a16"/><rect x="19" y="13" width="1.02" height="1.02" fill="#060404"/><rect x="8" y="14" width="1.02" height="1.02" fill="#000000"/><rect x="9" y="14" width="1.02" height="1.02" fill="#1e1512"/><rect x="10" y="14" width="7.02" height="1.02" fill="#3a2924"/><rect x="17" y="14" width="1.02" height="1.02" fill="#49352e"/><rect x="18" y="14" width="1.02" height="1.02" fill="#382823"/><rect x="19" y="14" width="1.02" height="1.02" fill="#1b1310"/><rect x="20" y="14" width="1.02" height="1.02" fill="#010100"/><rect x="8" y="15" width="1.02" height="1.02" fill="#020101"/><rect x="9" y="15" width="1.02" height="1.02" fill="#412f29"/><rect x="10" y="15" width="7.02" height="1.02" fill="#48342e"/><rect x="17" y="15" width="1.02" height="1.02" fill="#2f211c"/><rect x="18" y="15" width="2.02" height="1.02" fill="#221814"/><rect x="20" y="15" width="1.02" height="1.02" fill="#080605"/><rect x="8" y="16" width="1.02" height="1.02" fill="#090706"/><rect x="9" y="16" width="1.02" height="1.02" fill="#412e29"/><rect x="10" y="16" width="1.02" height="1.02" fill="#342520"/><rect x="11" y="16" width="1.02" height="1.02" fill="#3f2d28"/><rect x="12" y="16" width="1.02" height="1.02" fill="#503a34"/><rect x="13" y="16" width="1.02" height="1.02" fill="#5b423c"/><rect x="14" y="16" width="1.02" height="1.02" fill="#3e2b27"/><rect x="15" y="16" width="1.02" height="1.02" fill="#342420"/><rect x="16" y="16" width="3.02" height="1.02" fill="#2b1e1a"/><rect x="19" y="16" width="1.02" height="1.02" fill="#1f1612"/><rect x="20" y="16" width="1.02" height="1.02" fill="#0d0a08"/><rect x="8" y="17" width="1.02" height="1.02" fill="#090706"/><rect x="9" y="17" width="1.02" height="1.02" fill="#4c3631"/><rect x="10" y="17" width="3.02" height="1.02" fill="#291c18"/><rect x="13" y="17" width="3.02" height="1.02" fill="#2d1f1b"/><rect x="16" y="17" width="1.02" height="1.02" fill="#271b17"/><rect x="17" y="17" width="2.02" height="1.02" fill="#3b2a26"/><rect x="19" y="17" width="1.02" height="1.02" fill="#1d1411"/><rect x="20" y="17" width="1.02" height="1.02" fill="#100c09"/><rect x="8" y="18" width="1.02" height="1.02" fill="#000000"/><rect x="9" y="18" width="1.02" height="1.02" fill="#352621"/><rect x="10" y="18" width="6.02" height="1.02" fill="#281c18"/><rect x="16" y="18" width="1.02" height="1.02" fill="#221814"/><rect x="17" y="18" width="1.02" height="1.02" fill="#382824"/><rect x="18" y="18" width="1.02" height="1.02" fill="#2f221e"/><rect x="19" y="18" width="1.02" height="1.02" fill="#1c1411"/><rect x="20" y="18" width="1.02" height="1.02" fill="#0a0706"/><rect x="8" y="19" width="1.02" height="1.02" fill="#000000"/><rect x="9" y="19" width="1.02" height="1.02" fill="#0f0b09"/><rect x="10" y="19" width="1.02" height="1.02" fill="#30221e"/><rect x="11" y="19" width="2.02" height="1.02" fill="#332420"/><rect x="13" y="19" width="3.02" height="1.02" fill="#2c1f1b"/><rect x="16" y="19" width="1.02" height="1.02" fill="#352622"/><rect x="17" y="19" width="1.02" height="1.02" fill="#2a1e1a"/><rect x="18" y="19" width="2.02" height="1.02" fill="#1c1411"/><rect x="20" y="19" width="1.02" height="1.02" fill="#140f0c"/><rect x="21" y="19" width="1.02" height="1.02" fill="#000000"/><rect x="9" y="20" width="1.02" height="1.02" fill="#020101"/><rect x="10" y="20" width="1.02" height="1.02" fill="#3e311c"/><rect x="11" y="20" width="1.02" height="1.02" fill="#564525"/><rect x="12" y="20" width="1.02" height="1.02" fill="#43341d"/><rect x="13" y="20" width="1.02" height="1.02" fill="#836935"/><rect x="14" y="20" width="1.02" height="1.02" fill="#46361d"/><rect x="15" y="20" width="1.02" height="1.02" fill="#58432c"/><rect x="16" y="20" width="1.02" height="1.02" fill="#4f3a2f"/><rect x="17" y="20" width="2.02" height="1.02" fill="#37291b"/><rect x="19" y="20" width="1.02" height="1.02" fill="#523f29"/><rect x="20" y="20" width="1.02" height="1.02" fill="#32251f"/><rect x="21" y="20" width="1.02" height="1.02" fill="#000000"/><rect x="9" y="21" width="1.02" height="1.02" fill="#000000"/><rect x="10" y="21" width="2.02" height="1.02" fill="#ad8b38"/><rect x="12" y="21" width="1.02" height="1.02" fill="#a48333"/><rect x="13" y="21" width="1.02" height="1.02" fill="#b7933a"/><rect x="14" y="21" width="1.02" height="1.02" fill="#785d1f"/><rect x="15" y="21" width="1.02" height="1.02" fill="#a38133"/><rect x="16" y="21" width="1.02" height="1.02" fill="#9a7a32"/><rect x="17" y="21" width="1.02" height="1.02" fill="#b59038"/><rect x="18" y="21" width="1.02" height="1.02" fill="#a78433"/><rect x="19" y="21" width="2.02" height="1.02" fill="#997931"/><rect x="21" y="21" width="1.02" height="1.02" fill="#010100"/><rect x="9" y="22" width="1.02" height="1.02" fill="#000000"/><rect x="10" y="22" width="1.02" height="1.02" fill="#bc9845"/><rect x="11" y="22" width="2.02" height="1.02" fill="#cca549"/><rect x="13" y="22" width="1.02" height="1.02" fill="#b39140"/><rect x="14" y="22" width="1.02" height="1.02" fill="#765a1f"/><rect x="15" y="22" width="4.02" height="1.02" fill="#c19b44"/><rect x="19" y="22" width="1.02" height="1.02" fill="#b8913a"/><rect x="20" y="22" width="1.02" height="1.02" fill="#cba34a"/><rect x="21" y="22" width="1.02" height="1.02" fill="#302814"/><rect x="9" y="23" width="1.02" height="1.02" fill="#000000"/><rect x="10" y="23" width="3.02" height="1.02" fill="#e0ba6b"/><rect x="13" y="23" width="1.02" height="1.02" fill="#987e47"/><rect x="14" y="23" width="1.02" height="1.02" fill="#7d5f29"/><rect x="15" y="23" width="1.02" height="1.02" fill="#ddb666"/><rect x="16" y="23" width="3.02" height="1.02" fill="#e1bc6f"/><rect x="19" y="23" width="1.02" height="1.02" fill="#d7aa59"/><rect x="20" y="23" width="1.02" height="1.02" fill="#deb564"/><rect x="21" y="23" width="1.02" height="1.02" fill="#8d7544"/><rect x="22" y="23" width="1.02" height="1.02" fill="#000000"/><rect x="9" y="24" width="1.02" height="1.02" fill="#060503"/><rect x="10" y="24" width="3.02" height="1.02" fill="#e6c278"/><rect x="13" y="24" width="1.02" height="1.02" fill="#78653e"/><rect x="14" y="24" width="1.02" height="1.02" fill="#795c2c"/><rect x="15" y="24" width="1.02" height="1.02" fill="#e4bd73"/><rect x="16" y="24" width="3.02" height="1.02" fill="#e9c680"/><rect x="19" y="24" width="1.02" height="1.02" fill="#ddb166"/><rect x="20" y="24" width="1.02" height="1.02" fill="#e2b96e"/><rect x="21" y="24" width="1.02" height="1.02" fill="#e4bf76"/><rect x="22" y="24" width="1.02" height="1.02" fill="#2b2416"/><rect x="9" y="25" width="1.02" height="1.02" fill="#1b170e"/><rect x="10" y="25" width="3.02" height="1.02" fill="#e7c278"/><rect x="13" y="25" width="1.02" height="1.02" fill="#594a2d"/><rect x="14" y="25" width="1.02" height="1.02" fill="#6a5025"/><rect x="15" y="25" width="1.02" height="1.02" fill="#e3bc73"/><rect x="16" y="25" width="3.02" height="1.02" fill="#eac882"/><rect x="19" y="25" width="2.02" height="1.02" fill="#e2b96f"/><rect x="21" y="25" width="1.02" height="1.02" fill="#e8c47b"/><rect x="22" y="25" width="1.02" height="1.02" fill="#b6995f"/><rect x="23" y="25" width="1.02" height="1.02" fill="#050402"/><rect x="9" y="26" width="1.02" height="1.02" fill="#362d1c"/><rect x="10" y="26" width="3.02" height="1.02" fill="#e7c278"/><rect x="13" y="26" width="1.02" height="1.02" fill="#3b311e"/><rect x="14" y="26" width="1.02" height="1.02" fill="#5f4822"/><rect x="15" y="26" width="1.02" height="1.02" fill="#e2ba6f"/><rect x="16" y="26" width="3.02" height="1.02" fill="#ebc883"/><rect x="19" y="26" width="2.02" height="1.02" fill="#e2ba70"/><rect x="21" y="26" width="2.02" height="1.02" fill="#e9c57c"/><rect x="23" y="26" width="1.02" height="1.02" fill="#7a6740"/><rect x="24" y="26" width="1.02" height="1.02" fill="#000000"/><rect x="9" y="27" width="1.02" height="1.02" fill="#5a4c2e"/><rect x="10" y="27" width="3.02" height="1.02" fill="#e7c278"/><rect x="13" y="27" width="1.02" height="1.02" fill="#1b170e"/><rect x="14" y="27" width="1.02" height="1.02" fill="#4e3a1a"/><rect x="15" y="27" width="1.02" height="1.02" fill="#e1b86e"/><rect x="16" y="27" width="3.02" height="1.02" fill="#ebc983"/><rect x="19" y="27" width="1.02" height="1.02" fill="#e6c179"/><rect x="20" y="27" width="1.02" height="1.02" fill="#deb267"/><rect x="21" y="27" width="3.02" height="1.02" fill="#e8c47b"/><rect x="24" y="27" width="1.02" height="1.02" fill="#625333"/><rect x="25" y="27" width="1.02" height="1.02" fill="#000000"/><rect x="8" y="28" width="1.02" height="1.02" fill="#000000"/><rect x="9" y="28" width="1.02" height="1.02" fill="#8f7849"/><rect x="10" y="28" width="3.02" height="1.02" fill="#e7c278"/><rect x="13" y="28" width="1.02" height="1.02" fill="#15120b"/><rect x="14" y="28" width="1.02" height="1.02" fill="#4f3b1b"/><rect x="15" y="28" width="1.02" height="1.02" fill="#e0b76d"/><rect x="16" y="28" width="3.02" height="1.02" fill="#ebc984"/><rect x="19" y="28" width="1.02" height="1.02" fill="#e9c57e"/><rect x="20" y="28" width="1.02" height="1.02" fill="#ddb267"/><rect x="21" y="28" width="1.02" height="1.02" fill="#e3ba70"/><rect x="22" y="28" width="3.02" height="1.02" fill="#e9c57c"/><rect x="25" y="28" width="1.02" height="1.02" fill="#625232"/><rect x="26" y="28" width="1.02" height="1.02" fill="#000000"/><rect x="8" y="29" width="1.02" height="1.02" fill="#020201"/><rect x="9" y="29" width="1.02" height="1.02" fill="#d5b36f"/><rect x="10" y="29" width="3.02" height="1.02" fill="#e7c278"/><rect x="13" y="29" width="1.02" height="1.02" fill="#322a19"/><rect x="14" y="29" width="1.02" height="1.02" fill="#59441f"/><rect x="15" y="29" width="1.02" height="1.02" fill="#e1b86d"/><rect x="16" y="29" width="4.02" height="1.02" fill="#ebc883"/><rect x="20" y="29" width="1.02" height="1.02" fill="#e2bb72"/><rect x="21" y="29" width="1.02" height="1.02" fill="#ddb166"/><rect x="22" y="29" width="1.02" height="1.02" fill="#e6c076"/><rect x="23" y="29" width="3.02" height="1.02" fill="#e9c57c"/><rect x="26" y="29" width="1.02" height="1.02" fill="#78643d"/><rect x="27" y="29" width="1.02" height="1.02" fill="#020201"/><rect x="8" y="30" width="1.02" height="1.02" fill="#2e2617"/><rect x="9" y="30" width="4.02" height="1.02" fill="#e6c278"/><rect x="13" y="30" width="1.02" height="1.02" fill="#6b5a36"/><rect x="14" y="30" width="1.02" height="1.02" fill="#634b23"/><rect x="15" y="30" width="1.02" height="1.02" fill="#e2ba70"/><rect x="16" y="30" width="4.02" height="1.02" fill="#ebc983"/><rect x="20" y="30" width="1.02" height="1.02" fill="#e7c37c"/><rect x="21" y="30" width="2.02" height="1.02" fill="#dfb469"/><rect x="23" y="30" width="4.02" height="1.02" fill="#e8c47b"/><rect x="27" y="30" width="1.02" height="1.02" fill="#98804e"/><rect x="28" y="30" width="1.02" height="1.02" fill="#0b0906"/><rect x="7" y="31" width="1.02" height="1.02" fill="#000000"/><rect x="8" y="31" width="1.02" height="1.02" fill="#635333"/><rect x="9" y="31" width="4.02" height="1.02" fill="#e6c278"/><rect x="13" y="31" width="1.02" height="1.02" fill="#b1945a"/><rect x="14" y="31" width="1.02" height="1.02" fill="#765e34"/><rect x="15" y="31" width="1.02" height="1.02" fill="#e6c077"/><rect x="16" y="31" width="4.02" height="1.02" fill="#ebc983"/><rect x="20" y="31" width="2.02" height="1.02" fill="#e7c37b"/><rect x="22" y="31" width="1.02" height="1.02" fill="#dcb064"/><rect x="23" y="31" width="1.02" height="1.02" fill="#e2b86e"/><rect x="24" y="31" width="4.02" height="1.02" fill="#e8c47b"/><rect x="28" y="31" width="1.02" height="1.02" fill="#b89a5e"/><rect x="29" y="31" width="1.02" height="1.02" fill="#1b160e"/><rect x="30" y="31" width="1.02" height="1.02" fill="#000000"/><rect x="7" y="32" width="1.02" height="1.02" fill="#000000"/><rect x="8" y="32" width="1.02" height="1.02" fill="#947c4d"/><rect x="9" y="32" width="4.02" height="1.02" fill="#e6c177"/><rect x="13" y="32" width="1.02" height="1.02" fill="#e4bc70"/><rect x="14" y="32" width="1.02" height="1.02" fill="#a58549"/><rect x="15" y="32" width="1.02" height="1.02" fill="#deb468"/><rect x="16" y="32" width="6.02" height="1.02" fill="#eac781"/><rect x="22" y="32" width="1.02" height="1.02" fill="#e4bf76"/><rect x="23" y="32" width="1.02" height="1.02" fill="#dcb064"/><rect x="24" y="32" width="1.02" height="1.02" fill="#e2b96e"/><rect x="25" y="32" width="4.02" height="1.02" fill="#e8c47b"/><rect x="29" y="32" width="1.02" height="1.02" fill="#d3b16d"/><rect x="30" y="32" width="1.02" height="1.02" fill="#39301d"/><rect x="31" y="32" width="1.02" height="1.02" fill="#000000"/><rect x="7" y="33" width="1.02" height="1.02" fill="#000000"/><rect x="8" y="33" width="1.02" height="1.02" fill="#c7a869"/><rect x="9" y="33" width="3.02" height="1.02" fill="#e7c279"/><rect x="12" y="33" width="1.02" height="1.02" fill="#e5be72"/><rect x="13" y="33" width="1.02" height="1.02" fill="#e2b86a"/><rect x="14" y="33" width="2.02" height="1.02" fill="#cc9845"/><rect x="16" y="33" width="1.02" height="1.02" fill="#e5c077"/><rect x="17" y="33" width="4.02" height="1.02" fill="#ebc983"/><rect x="21" y="33" width="2.02" height="1.02" fill="#e7c37a"/><rect x="23" y="33" width="1.02" height="1.02" fill="#e4bd74"/><rect x="24" y="33" width="1.02" height="1.02" fill="#dcaf64"/><rect x="25" y="33" width="1.02" height="1.02" fill="#e2b96e"/><rect x="26" y="33" width="5.02" height="1.02" fill="#e7c37a"/><rect x="31" y="33" width="1.02" height="1.02" fill="#635232"/><rect x="32" y="33" width="1.02" height="1.02" fill="#000000"/><rect x="7" y="34" width="1.02" height="1.02" fill="#0b0905"/><rect x="8" y="34" width="4.02" height="1.02" fill="#e7c37a"/><rect x="12" y="34" width="1.02" height="1.02" fill="#e5bd71"/><rect x="13" y="34" width="1.02" height="1.02" fill="#e2b768"/><rect x="14" y="34" width="1.02" height="1.02" fill="#cf9d4b"/><rect x="15" y="34" width="1.02" height="1.02" fill="#c8913b"/><rect x="16" y="34" width="1.02" height="1.02" fill="#deb568"/><rect x="17" y="34" width="5.02" height="1.02" fill="#ebc882"/><rect x="22" y="34" width="3.02" height="1.02" fill="#e5c077"/><rect x="25" y="34" width="1.02" height="1.02" fill="#dcaf64"/><rect x="26" y="34" width="1.02" height="1.02" fill="#e1b76c"/><rect x="27" y="34" width="5.02" height="1.02" fill="#e8c47b"/><rect x="32" y="34" width="1.02" height="1.02" fill="#836e43"/><rect x="33" y="34" width="1.02" height="1.02" fill="#040302"/><rect x="7" y="35" width="1.02" height="1.02" fill="#2a2416"/><rect x="8" y="35" width="3.02" height="1.02" fill="#e8c47c"/><rect x="11" y="35" width="2.02" height="1.02" fill="#e6c075"/><rect x="13" y="35" width="1.02" height="1.02" fill="#e2b86a"/><rect x="14" y="35" width="1.02" height="1.02" fill="#d9ab5a"/><rect x="15" y="35" width="1.02" height="1.02" fill="#c58e37"/><rect x="16" y="35" width="1.02" height="1.02" fill="#d4a452"/><rect x="17" y="35" width="1.02" height="1.02" fill="#e8c47d"/><rect x="18" y="35" width="4.02" height="1.02" fill="#ebc983"/><rect x="22" y="35" width="2.02" height="1.02" fill="#e7c27a"/><rect x="24" y="35" width="2.02" height="1.02" fill="#e4bf75"/><rect x="26" y="35" width="2.02" height="1.02" fill="#deb267"/><rect x="28" y="35" width="1.02" height="1.02" fill="#e6bf75"/><rect x="29" y="35" width="4.02" height="1.02" fill="#e8c47b"/><rect x="33" y="35" width="1.02" height="1.02" fill="#a48954"/><rect x="34" y="35" width="1.02" height="1.02" fill="#14100a"/><rect x="35" y="35" width="1.02" height="1.02" fill="#000000"/><rect x="7" y="36" width="1.02" height="1.02" fill="#483d26"/><rect x="8" y="36" width="4.02" height="1.02" fill="#e8c47b"/><rect x="12" y="36" width="1.02" height="1.02" fill="#e5bf74"/><rect x="13" y="36" width="1.02" height="1.02" fill="#e3ba6d"/><rect x="14" y="36" width="1.02" height="1.02" fill="#e0b363"/><rect x="15" y="36" width="2.02" height="1.02" fill="#ca9540"/><rect x="17" y="36" width="1.02" height="1.02" fill="#e1b96e"/><rect x="18" y="36" width="5.02" height="1.02" fill="#ebc882"/><rect x="23" y="36" width="4.02" height="1.02" fill="#e5c077"/><rect x="27" y="36" width="2.02" height="1.02" fill="#dcb065"/><rect x="29" y="36" width="1.02" height="1.02" fill="#e3ba6f"/><rect x="30" y="36" width="4.02" height="1.02" fill="#e8c47b"/><rect x="34" y="36" width="1.02" height="1.02" fill="#ccab69"/><rect x="35" y="36" width="1.02" height="1.02" fill="#39301d"/><rect x="36" y="36" width="1.02" height="1.02" fill="#000000"/><rect x="7" y="37" width="1.02" height="1.02" fill="#615233"/><rect x="8" y="37" width="4.02" height="1.02" fill="#e8c47b"/><rect x="12" y="37" width="2.02" height="1.02" fill="#e5bf73"/><rect x="14" y="37" width="1.02" height="1.02" fill="#e2b768"/><rect x="15" y="37" width="1.02" height="1.02" fill="#d6a756"/><rect x="16" y="37" width="1.02" height="1.02" fill="#c58d37"/><rect x="17" y="37" width="1.02" height="1.02" fill="#d5a554"/><rect x="18" y="37" width="1.02" height="1.02" fill="#e9c47e"/><rect x="19" y="37" width="4.02" height="1.02" fill="#ebc983"/><rect x="23" y="37" width="2.02" height="1.02" fill="#e7c37a"/><rect x="25" y="37" width="3.02" height="1.02" fill="#e4bf75"/><rect x="28" y="37" width="2.02" height="1.02" fill="#dbae62"/><rect x="30" y="37" width="1.02" height="1.02" fill="#e1b76c"/><rect x="31" y="37" width="5.02" height="1.02" fill="#e8c37a"/><rect x="36" y="37" width="1.02" height="1.02" fill="#79653d"/><rect x="37" y="37" width="1.02" height="1.02" fill="#060503"/><rect x="6" y="38" width="1.02" height="1.02" fill="#000000"/><rect x="7" y="38" width="1.02" height="1.02" fill="#73613d"/><rect x="8" y="38" width="4.02" height="1.02" fill="#e8c47b"/><rect x="12" y="38" width="2.02" height="1.02" fill="#e6c075"/><rect x="14" y="38" width="1.02" height="1.02" fill="#e3ba6c"/><rect x="15" y="38" width="1.02" height="1.02" fill="#dfb362"/><rect x="16" y="38" width="2.02" height="1.02" fill="#ca9540"/><rect x="18" y="38" width="1.02" height="1.02" fill="#e1b86e"/><rect x="19" y="38" width="5.02" height="1.02" fill="#ebc883"/><rect x="24" y="38" width="3.02" height="1.02" fill="#e5c178"/><rect x="27" y="38" width="2.02" height="1.02" fill="#e4be74"/><rect x="29" y="38" width="1.02" height="1.02" fill="#ddb166"/><rect x="30" y="38" width="1.02" height="1.02" fill="#daab5f"/><rect x="31" y="38" width="1.02" height="1.02" fill="#e0b468"/><rect x="32" y="38" width="2.02" height="1.02" fill="#e7c279"/><rect x="34" y="38" width="3.02" height="1.02" fill="#e8c37a"/><rect x="37" y="38" width="1.02" height="1.02" fill="#b8995d"/><rect x="38" y="38" width="1.02" height="1.02" fill="#272014"/><rect x="39" y="38" width="1.02" height="1.02" fill="#000000"/><rect x="6" y="39" width="1.02" height="1.02" fill="#000000"/><rect x="7" y="39" width="1.02" height="1.02" fill="#867147"/><rect x="8" y="39" width="4.02" height="1.02" fill="#e8c47b"/><rect x="12" y="39" width="2.02" height="1.02" fill="#e6c176"/><rect x="14" y="39" width="1.02" height="1.02" fill="#e4bd70"/><rect x="15" y="39" width="1.02" height="1.02" fill="#e2b768"/><rect x="16" y="39" width="1.02" height="1.02" fill="#d6a756"/><rect x="17" y="39" width="1.02" height="1.02" fill="#c48d37"/><rect x="18" y="39" width="1.02" height="1.02" fill="#d5a554"/><rect x="19" y="39" width="1.02" height="1.02" fill="#e8c47e"/><rect x="20" y="39" width="4.02" height="1.02" fill="#ebc983"/><rect x="24" y="39" width="2.02" height="1.02" fill="#e7c37b"/><rect x="26" y="39" width="4.02" height="1.02" fill="#e4bf75"/><rect x="30" y="39" width="1.02" height="1.02" fill="#deb267"/><rect x="31" y="39" width="1.02" height="1.02" fill="#d9aa5e"/><rect x="32" y="39" width="1.02" height="1.02" fill="#ddb064"/><rect x="33" y="39" width="1.02" height="1.02" fill="#e4bb71"/><rect x="34" y="39" width="4.02" height="1.02" fill="#e8c37a"/><rect x="38" y="39" width="1.02" height="1.02" fill="#dfbb73"/><rect x="39" y="39" width="1.02" height="1.02" fill="#675634"/><rect x="40" y="39" width="1.02" height="1.02" fill="#030201"/><rect x="6" y="40" width="1.02" height="1.02" fill="#000000"/><rect x="7" y="40" width="1.02" height="1.02" fill="#8c764a"/><rect x="8" y="40" width="5.02" height="1.02" fill="#e7c37a"/><rect x="13" y="40" width="2.02" height="1.02" fill="#e6c075"/><rect x="15" y="40" width="1.02" height="1.02" fill="#e3ba6c"/><rect x="16" y="40" width="1.02" height="1.02" fill="#dfb362"/><rect x="17" y="40" width="2.02" height="1.02" fill="#ca9540"/><rect x="19" y="40" width="1.02" height="1.02" fill="#e1b86d"/><rect x="20" y="40" width="5.02" height="1.02" fill="#ebc883"/><rect x="25" y="40" width="2.02" height="1.02" fill="#e6c27a"/><rect x="27" y="40" width="4.02" height="1.02" fill="#e3be74"/><rect x="31" y="40" width="1.02" height="1.02" fill="#dfb368"/><rect x="32" y="40" width="2.02" height="1.02" fill="#d9a95c"/><rect x="34" y="40" width="1.02" height="1.02" fill="#e1b56b"/><rect x="35" y="40" width="1.02" height="1.02" fill="#e6bf76"/><rect x="36" y="40" width="4.02" height="1.02" fill="#e8c47b"/><rect x="40" y="40" width="1.02" height="1.02" fill="#ae9158"/><rect x="41" y="40" width="1.02" height="1.02" fill="#262013"/><rect x="42" y="40" width="1.02" height="1.02" fill="#000000"/><rect x="6" y="41" width="1.02" height="1.02" fill="#000000"/><rect x="7" y="41" width="1.02" height="1.02" fill="#957e4f"/><rect x="8" y="41" width="5.02" height="1.02" fill="#e8c37b"/><rect x="13" y="41" width="2.02" height="1.02" fill="#e6c176"/><rect x="15" y="41" width="1.02" height="1.02" fill="#e4bd70"/><rect x="16" y="41" width="1.02" height="1.02" fill="#e2b768"/><rect x="17" y="41" width="1.02" height="1.02" fill="#d6a756"/><rect x="18" y="41" width="1.02" height="1.02" fill="#c58d37"/><rect x="19" y="41" width="1.02" height="1.02" fill="#d4a553"/><rect x="20" y="41" width="1.02" height="1.02" fill="#e8c47d"/><rect x="21" y="41" width="5.02" height="1.02" fill="#ebc883"/><rect x="26" y="41" width="3.02" height="1.02" fill="#e5c178"/><rect x="29" y="41" width="3.02" height="1.02" fill="#e3be73"/><rect x="32" y="41" width="1.02" height="1.02" fill="#deb166"/><rect x="33" y="41" width="2.02" height="1.02" fill="#d7a558"/><rect x="35" y="41" width="1.02" height="1.02" fill="#dfb065"/><rect x="36" y="41" width="1.02" height="1.02" fill="#e4bb71"/><rect x="37" y="41" width="4.02" height="1.02" fill="#e8c47b"/><rect x="41" y="41" width="1.02" height="1.02" fill="#e1bd75"/><rect x="42" y="41" width="1.02" height="1.02" fill="#6c5a37"/><rect x="43" y="41" width="1.02" height="1.02" fill="#050402"/><rect x="6" y="42" width="1.02" height="1.02" fill="#000000"/><rect x="7" y="42" width="1.02" height="1.02" fill="#9b8252"/><rect x="8" y="42" width="6.02" height="1.02" fill="#e7c37a"/><rect x="14" y="42" width="2.02" height="1.02" fill="#e6c075"/><rect x="16" y="42" width="1.02" height="1.02" fill="#e3ba6c"/><rect x="17" y="42" width="1.02" height="1.02" fill="#dfb262"/><rect x="18" y="42" width="2.02" height="1.02" fill="#ca9540"/><rect x="20" y="42" width="1.02" height="1.02" fill="#dfb66b"/><rect x="21" y="42" width="6.02" height="1.02" fill="#ebc882"/><rect x="27" y="42" width="3.02" height="1.02" fill="#e5c077"/><rect x="30" y="42" width="3.02" height="1.02" fill="#e3be73"/><rect x="33" y="42" width="1.02" height="1.02" fill="#e0b469"/><rect x="34" y="42" width="2.02" height="1.02" fill="#d7a457"/><rect x="36" y="42" width="1.02" height="1.02" fill="#dcac62"/><rect x="37" y="42" width="1.02" height="1.02" fill="#e2b66d"/><rect x="38" y="42" width="2.02" height="1.02" fill="#e7c179"/><rect x="40" y="42" width="3.02" height="1.02" fill="#e8c47b"/><rect x="43" y="42" width="1.02" height="1.02" fill="#b7995e"/><rect x="44" y="42" width="1.02" height="1.02" fill="#2d2617"/><rect x="45" y="42" width="1.02" height="1.02" fill="#000000"/><rect x="6" y="43" width="1.02" height="1.02" fill="#000000"/><rect x="7" y="43" width="1.02" height="1.02" fill="#937c4d"/><rect x="8" y="43" width="6.02" height="1.02" fill="#e7c37a"/><rect x="14" y="43" width="2.02" height="1.02" fill="#e6c176"/><rect x="16" y="43" width="1.02" height="1.02" fill="#e4bc6e"/><rect x="17" y="43" width="1.02" height="1.02" fill="#e1b666"/><rect x="18" y="43" width="1.02" height="1.02" fill="#d7a856"/><rect x="19" y="43" width="1.02" height="1.02" fill="#c48e37"/><rect x="20" y="43" width="1.02" height="1.02" fill="#d2a14f"/><rect x="21" y="43" width="1.02" height="1.02" fill="#e7c27a"/><rect x="22" y="43" width="5.02" height="1.02" fill="#ebc983"/><rect x="27" y="43" width="2.02" height="1.02" fill="#e7c37b"/><rect x="29" y="43" width="5.02" height="1.02" fill="#e3be74"/><rect x="34" y="43" width="1.02" height="1.02" fill="#e1b76c"/><rect x="35" y="43" width="2.02" height="1.02" fill="#d7a456"/><rect x="37" y="43" width="1.02" height="1.02" fill="#daaa5f"/><rect x="38" y="43" width="1.02" height="1.02" fill="#e0b268"/><rect x="39" y="43" width="1.02" height="1.02" fill="#e4ba71"/><rect x="40" y="43" width="5.02" height="1.02" fill="#e8c37b"/><rect x="45" y="43" width="1.02" height="1.02" fill="#7b673f"/><rect x="46" y="43" width="1.02" height="1.02" fill="#0c0a06"/><rect x="47" y="43" width="1.02" height="1.02" fill="#000000"/><rect x="6" y="44" width="1.02" height="1.02" fill="#000000"/><rect x="7" y="44" width="1.02" height="1.02" fill="#887248"/><rect x="8" y="44" width="5.02" height="1.02" fill="#e8c47b"/><rect x="13" y="44" width="3.02" height="1.02" fill="#e6c075"/><rect x="16" y="44" width="1.02" height="1.02" fill="#e3ba6c"/><rect x="17" y="44" width="1.02" height="1.02" fill="#e0b464"/><rect x="18" y="44" width="1.02" height="1.02" fill="#ddae5b"/><rect x="19" y="44" width="1.02" height="1.02" fill="#ca9642"/><rect x="20" y="44" width="1.02" height="1.02" fill="#c9923c"/><rect x="21" y="44" width="1.02" height="1.02" fill="#deb467"/><rect x="22" y="44" width="7.02" height="1.02" fill="#eac882"/><rect x="29" y="44" width="4.02" height="1.02" fill="#e4bf75"/><rect x="33" y="44" width="3.02" height="1.02" fill="#e2bc72"/><rect x="36" y="44" width="3.02" height="1.02" fill="#d8a659"/><rect x="39" y="44" width="1.02" height="1.02" fill="#deae64"/><rect x="40" y="44" width="1.02" height="1.02" fill="#e2b66c"/><rect x="41" y="44" width="2.02" height="1.02" fill="#e7c077"/><rect x="43" y="44" width="3.02" height="1.02" fill="#e9c57c"/><rect x="46" y="44" width="1.02" height="1.02" fill="#ccab6a"/><rect x="47" y="44" width="1.02" height="1.02" fill="#4b3f26"/><rect x="48" y="44" width="1.02" height="1.02" fill="#000000"/><rect x="6" y="45" width="1.02" height="1.02" fill="#000000"/><rect x="7" y="45" width="1.02" height="1.02" fill="#715f3c"/><rect x="8" y="45" width="4.02" height="1.02" fill="#e8c47c"/><rect x="12" y="45" width="3.02" height="1.02" fill="#e5c074"/><rect x="15" y="45" width="1.02" height="1.02" fill="#e2b96a"/><rect x="16" y="45" width="1.02" height="1.02" fill="#dfb362"/><rect x="17" y="45" width="2.02" height="1.02" fill="#dcac58"/><rect x="19" y="45" width="1.02" height="1.02" fill="#d5a34e"/><rect x="20" y="45" width="1.02" height="1.02" fill="#c48d36"/><rect x="21" y="45" width="1.02" height="1.02" fill="#d2a14f"/><rect x="22" y="45" width="1.02" height="1.02" fill="#e6c179"/><rect x="23" y="45" width="6.02" height="1.02" fill="#ebc883"/><rect x="29" y="45" width="3.02" height="1.02" fill="#e6c178"/><rect x="32" y="45" width="5.02" height="1.02" fill="#e3bd73"/><rect x="37" y="45" width="1.02" height="1.02" fill="#daa95b"/><rect x="38" y="45" width="2.02" height="1.02" fill="#d8a558"/><rect x="40" y="45" width="1.02" height="1.02" fill="#dbab60"/><rect x="41" y="45" width="1.02" height="1.02" fill="#e0b167"/><rect x="42" y="45" width="1.02" height="1.02" fill="#e3b96f"/><rect x="43" y="45" width="2.02" height="1.02" fill="#e7c279"/><rect x="45" y="45" width="3.02" height="1.02" fill="#e9c57c"/><rect x="48" y="45" width="1.02" height="1.02" fill="#a88d57"/><rect x="49" y="45" width="1.02" height="1.02" fill="#292315"/><rect x="50" y="45" width="1.02" height="1.02" fill="#000000"/><rect x="7" y="46" width="1.02" height="1.02" fill="#56482d"/><rect x="8" y="46" width="4.02" height="1.02" fill="#e8c47c"/><rect x="12" y="46" width="2.02" height="1.02" fill="#e5bf74"/><rect x="14" y="46" width="1.02" height="1.02" fill="#e2b869"/><rect x="15" y="46" width="1.02" height="1.02" fill="#ddb05d"/><rect x="16" y="46" width="2.02" height="1.02" fill="#d9a750"/><rect x="18" y="46" width="2.02" height="1.02" fill="#d9a54d"/><rect x="20" y="46" width="2.02" height="1.02" fill="#c9933c"/><rect x="22" y="46" width="1.02" height="1.02" fill="#ddb366"/><rect x="23" y="46" width="3.02" height="1.02" fill="#eac882"/><rect x="26" y="46" width="3.02" height="1.02" fill="#ebc983"/><rect x="29" y="46" width="2.02" height="1.02" fill="#e8c47c"/><rect x="31" y="46" width="7.02" height="1.02" fill="#e3be74"/><rect x="38" y="46" width="1.02" height="1.02" fill="#ddaf62"/><rect x="39" y="46" width="2.02" height="1.02" fill="#d8a456"/><rect x="41" y="46" width="2.02" height="1.02" fill="#dcac61"/><rect x="43" y="46" width="1.02" height="1.02" fill="#e1b46b"/><rect x="44" y="46" width="1.02" height="1.02" fill="#e4bb72"/><rect x="45" y="46" width="5.02" height="1.02" fill="#e8c47b"/><rect x="50" y="46" width="1.02" height="1.02" fill="#877146"/><rect x="51" y="46" width="1.02" height="1.02" fill="#15120b"/><rect x="52" y="46" width="1.02" height="1.02" fill="#000000"/><rect x="7" y="47" width="1.02" height="1.02" fill="#31291a"/><rect x="8" y="47" width="4.02" height="1.02" fill="#e8c47c"/><rect x="12" y="47" width="1.02" height="1.02" fill="#e6c176"/><rect x="13" y="47" width="1.02" height="1.02" fill="#e4bc6f"/><rect x="14" y="47" width="1.02" height="1.02" fill="#dfb362"/><rect x="15" y="47" width="1.02" height="1.02" fill="#daa953"/><rect x="16" y="47" width="5.02" height="1.02" fill="#d59f46"/><rect x="21" y="47" width="1.02" height="1.02" fill="#c48c36"/><rect x="22" y="47" width="1.02" height="1.02" fill="#d09e4b"/><rect x="23" y="47" width="1.02" height="1.02" fill="#e4bf75"/><rect x="24" y="47" width="7.02" height="1.02" fill="#ebc882"/><rect x="31" y="47" width="3.02" height="1.02" fill="#e5c178"/><rect x="34" y="47" width="5.02" height="1.02" fill="#e3be73"/><rect x="39" y="47" width="1.02" height="1.02" fill="#e0b66b"/><rect x="40" y="47" width="2.02" height="1.02" fill="#d8a456"/><rect x="42" y="47" width="2.02" height="1.02" fill="#dbab60"/><rect x="44" y="47" width="1.02" height="1.02" fill="#deb066"/><rect x="45" y="47" width="1.02" height="1.02" fill="#e2b76d"/><rect x="46" y="47" width="2.02" height="1.02" fill="#e6c076"/><rect x="48" y="47" width="3.02" height="1.02" fill="#e9c57d"/><rect x="51" y="47" width="1.02" height="1.02" fill="#dbb974"/><rect x="52" y="47" width="1.02" height="1.02" fill="#6c5b38"/><rect x="53" y="47" width="1.02" height="1.02" fill="#0d0b07"/><rect x="54" y="47" width="1.02" height="1.02" fill="#000000"/><rect x="7" y="48" width="1.02" height="1.02" fill="#090805"/><rect x="8" y="48" width="5.02" height="1.02" fill="#e7c37a"/><rect x="13" y="48" width="1.02" height="1.02" fill="#e4bc6f"/><rect x="14" y="48" width="1.02" height="1.02" fill="#dfb361"/><rect x="15" y="48" width="1.02" height="1.02" fill="#daa851"/><rect x="16" y="48" width="5.02" height="1.02" fill="#d59e42"/><rect x="21" y="48" width="2.02" height="1.02" fill="#c79139"/><rect x="23" y="48" width="1.02" height="1.02" fill="#d9ad5e"/><rect x="24" y="48" width="2.02" height="1.02" fill="#e9c57e"/><rect x="26" y="48" width="5.02" height="1.02" fill="#ebc983"/><rect x="31" y="48" width="2.02" height="1.02" fill="#e7c37c"/><rect x="33" y="48" width="7.02" height="1.02" fill="#e3be74"/><rect x="40" y="48" width="1.02" height="1.02" fill="#e3ba70"/><rect x="41" y="48" width="3.02" height="1.02" fill="#d9a658"/><rect x="44" y="48" width="2.02" height="1.02" fill="#dcad63"/><rect x="46" y="48" width="1.02" height="1.02" fill="#deb268"/><rect x="47" y="48" width="1.02" height="1.02" fill="#e2b86e"/><rect x="48" y="48" width="2.02" height="1.02" fill="#e7c177"/><rect x="50" y="48" width="3.02" height="1.02" fill="#e9c57d"/><rect x="53" y="48" width="1.02" height="1.02" fill="#d8b672"/><rect x="54" y="48" width="1.02" height="1.02" fill="#73613c"/><rect x="55" y="48" width="1.02" height="1.02" fill="#14100a"/><rect x="56" y="48" width="1.02" height="1.02" fill="#000000"/><rect x="7" y="49" width="1.02" height="1.02" fill="#000000"/><rect x="8" y="49" width="1.02" height="1.02" fill="#b49860"/><rect x="9" y="49" width="3.02" height="1.02" fill="#e8c47c"/><rect x="12" y="49" width="2.02" height="1.02" fill="#e6c074"/><rect x="14" y="49" width="1.02" height="1.02" fill="#e1b666"/><rect x="15" y="49" width="1.02" height="1.02" fill="#dbab56"/><rect x="16" y="49" width="1.02" height="1.02" fill="#d7a249"/><rect x="17" y="49" width="5.02" height="1.02" fill="#d39c40"/><rect x="22" y="49" width="1.02" height="1.02" fill="#c48d35"/><rect x="23" y="49" width="1.02" height="1.02" fill="#cd9843"/><rect x="24" y="49" width="1.02" height="1.02" fill="#e1b96e"/><rect x="25" y="49" width="2.02" height="1.02" fill="#e9c680"/><rect x="27" y="49" width="5.02" height="1.02" fill="#ebc983"/><rect x="32" y="49" width="3.02" height="1.02" fill="#e6c27a"/><rect x="35" y="49" width="7.02" height="1.02" fill="#e3bd73"/><rect x="42" y="49" width="1.02" height="1.02" fill="#daa95b"/><rect x="43" y="49" width="2.02" height="1.02" fill="#d9a558"/><rect x="45" y="49" width="3.02" height="1.02" fill="#ddae64"/><rect x="48" y="49" width="2.02" height="1.02" fill="#e0b56b"/><rect x="50" y="49" width="2.02" height="1.02" fill="#e6c177"/><rect x="52" y="49" width="3.02" height="1.02" fill="#e9c57d"/><rect x="55" y="49" width="1.02" height="1.02" fill="#e1be78"/><rect x="56" y="49" width="1.02" height="1.02" fill="#877247"/><rect x="57" y="49" width="1.02" height="1.02" fill="#2a2416"/><rect x="58" y="49" width="2.02" height="1.02" fill="#000000"/><rect x="7" y="50" width="1.02" height="1.02" fill="#000000"/><rect x="8" y="50" width="1.02" height="1.02" fill="#7e6a43"/><rect x="9" y="50" width="4.02" height="1.02" fill="#e8c47b"/><rect x="13" y="50" width="1.02" height="1.02" fill="#e6c074"/><rect x="14" y="50" width="1.02" height="1.02" fill="#e3ba6d"/><rect x="15" y="50" width="1.02" height="1.02" fill="#deb15f"/><rect x="16" y="50" width="1.02" height="1.02" fill="#d9a64f"/><rect x="17" y="50" width="5.02" height="1.02" fill="#d49c41"/><rect x="22" y="50" width="1.02" height="1.02" fill="#cb943a"/><rect x="23" y="50" width="1.02" height="1.02" fill="#c58d36"/><rect x="24" y="50" width="1.02" height="1.02" fill="#d4a553"/><rect x="25" y="50" width="1.02" height="1.02" fill="#e5c077"/><rect x="26" y="50" width="3.02" height="1.02" fill="#eac781"/><rect x="29" y="50" width="4.02" height="1.02" fill="#ebc983"/><rect x="33" y="50" width="3.02" height="1.02" fill="#e6c27a"/><rect x="36" y="50" width="7.02" height="1.02" fill="#e3be73"/><rect x="43" y="50" width="1.02" height="1.02" fill="#ddaf62"/><rect x="44" y="50" width="2.02" height="1.02" fill="#d8a456"/><rect x="46" y="50" width="2.02" height="1.02" fill="#ddac61"/><rect x="48" y="50" width="3.02" height="1.02" fill="#dfb268"/><rect x="51" y="50" width="2.02" height="1.02" fill="#e2ba6f"/><rect x="53" y="50" width="5.02" height="1.02" fill="#e8c47b"/><rect x="58" y="50" width="1.02" height="1.02" fill="#b89b61"/><rect x="59" y="50" width="1.02" height="1.02" fill="#675736"/><rect x="60" y="50" width="1.02" height="1.02" fill="#1d180f"/><rect x="61" y="50" width="2.02" height="1.02" fill="#000000"/><rect x="8" y="51" width="1.02" height="1.02" fill="#4a3e27"/><rect x="9" y="51" width="4.02" height="1.02" fill="#e8c47c"/><rect x="13" y="51" width="2.02" height="1.02" fill="#e5c074"/><rect x="15" y="51" width="1.02" height="1.02" fill="#e1b767"/><rect x="16" y="51" width="1.02" height="1.02" fill="#dcac58"/><rect x="17" y="51" width="1.02" height="1.02" fill="#d7a34a"/><rect x="18" y="51" width="5.02" height="1.02" fill="#d49c40"/><rect x="23" y="51" width="2.02" height="1.02" fill="#c7903a"/><rect x="25" y="51" width="1.02" height="1.02" fill="#dbb062"/><rect x="26" y="51" width="2.02" height="1.02" fill="#e8c47d"/><rect x="28" y="51" width="7.02" height="1.02" fill="#ebc882"/><rect x="35" y="51" width="4.02" height="1.02" fill="#e5c076"/><rect x="39" y="51" width="5.02" height="1.02" fill="#e3bd73"/><rect x="44" y="51" width="1.02" height="1.02" fill="#e1b66c"/><rect x="45" y="51" width="3.02" height="1.02" fill="#d9a558"/><rect x="48" y="51" width="2.02" height="1.02" fill="#dead63"/><rect x="50" y="51" width="4.02" height="1.02" fill="#e0b46a"/><rect x="54" y="51" width="2.02" height="1.02" fill="#e2bb71"/><rect x="56" y="51" width="5.02" height="1.02" fill="#e8c47c"/><rect x="61" y="51" width="1.02" height="1.02" fill="#b69960"/><rect x="62" y="51" width="1.02" height="1.02" fill="#695837"/><rect x="63" y="51" width="1.02" height="1.02" fill="#221d12"/><rect x="64" y="51" width="2.02" height="1.02" fill="#000000"/><rect x="8" y="52" width="1.02" height="1.02" fill="#15110b"/><rect x="9" y="52" width="5.02" height="1.02" fill="#e8c47b"/><rect x="14" y="52" width="2.02" height="1.02" fill="#e5be71"/><rect x="16" y="52" width="1.02" height="1.02" fill="#dfb261"/><rect x="17" y="52" width="1.02" height="1.02" fill="#daa852"/><rect x="18" y="52" width="2.02" height="1.02" fill="#d59f44"/><rect x="20" y="52" width="4.02" height="1.02" fill="#d39b3f"/><rect x="24" y="52" width="1.02" height="1.02" fill="#c48c35"/><rect x="25" y="52" width="1.02" height="1.02" fill="#cd9944"/><rect x="26" y="52" width="1.02" height="1.02" fill="#e0b76b"/><rect x="27" y="52" width="2.02" height="1.02" fill="#e8c57d"/><rect x="29" y="52" width="7.02" height="1.02" fill="#ebc882"/><rect x="36" y="52" width="4.02" height="1.02" fill="#e5c076"/><rect x="40" y="52" width="6.02" height="1.02" fill="#e3bd73"/><rect x="46" y="52" width="1.02" height="1.02" fill="#dbab5f"/><rect x="47" y="52" width="2.02" height="1.02" fill="#d8a456"/><rect x="49" y="52" width="2.02" height="1.02" fill="#dcab60"/><rect x="51" y="52" width="3.02" height="1.02" fill="#e0b268"/><rect x="54" y="52" width="4.02" height="1.02" fill="#e1b86e"/><rect x="58" y="52" width="2.02" height="1.02" fill="#e5bf75"/><rect x="60" y="52" width="4.02" height="1.02" fill="#e9c57c"/><rect x="64" y="52" width="1.02" height="1.02" fill="#ba9d62"/><rect x="65" y="52" width="1.02" height="1.02" fill="#715f3b"/><rect x="66" y="52" width="1.02" height="1.02" fill="#231d12"/><rect x="67" y="52" width="2.02" height="1.02" fill="#000000"/><rect x="8" y="53" width="1.02" height="1.02" fill="#000000"/><rect x="9" y="53" width="1.02" height="1.02" fill="#bfa166"/><rect x="10" y="53" width="4.02" height="1.02" fill="#e8c47b"/><rect x="14" y="53" width="2.02" height="1.02" fill="#e6c075"/><rect x="16" y="53" width="1.02" height="1.02" fill="#e2b86a"/><rect x="17" y="53" width="1.02" height="1.02" fill="#ddae5b"/><rect x="18" y="53" width="1.02" height="1.02" fill="#d8a44c"/><rect x="19" y="53" width="5.02" height="1.02" fill="#d49c40"/><rect x="24" y="53" width="1.02" height="1.02" fill="#cb943a"/><rect x="25" y="53" width="1.02" height="1.02" fill="#c48d36"/><rect x="26" y="53" width="1.02" height="1.02" fill="#d19f4c"/><rect x="27" y="53" width="1.02" height="1.02" fill="#e2bc71"/><rect x="28" y="53" width="2.02" height="1.02" fill="#e8c57e"/><rect x="30" y="53" width="7.02" height="1.02" fill="#ebc882"/><rect x="37" y="53" width="3.02" height="1.02" fill="#e5c178"/><rect x="40" y="53" width="7.02" height="1.02" fill="#e3be73"/><rect x="47" y="53" width="1.02" height="1.02" fill="#e1b76c"/><rect x="48" y="53" width="4.02" height="1.02" fill="#d9a659"/><rect x="52" y="53" width="3.02" height="1.02" fill="#dfaf65"/><rect x="55" y="53" width="5.02" height="1.02" fill="#e2b76d"/><rect x="60" y="53" width="2.02" height="1.02" fill="#e2bb71"/><rect x="62" y="53" width="3.02" height="1.02" fill="#e7c37a"/><rect x="65" y="53" width="2.02" height="1.02" fill="#e9c57c"/><rect x="67" y="53" width="1.02" height="1.02" fill="#b2965e"/><rect x="68" y="53" width="1.02" height="1.02" fill="#5d4e30"/><rect x="69" y="53" width="1.02" height="1.02" fill="#13100a"/><rect x="70" y="53" width="1.02" height="1.02" fill="#000000"/><rect x="8" y="54" width="1.02" height="1.02" fill="#000000"/><rect x="9" y="54" width="1.02" height="1.02" fill="#7e6a42"/><rect x="10" y="54" width="5.02" height="1.02" fill="#e8c47b"/><rect x="15" y="54" width="2.02" height="1.02" fill="#e5bf73"/><rect x="17" y="54" width="1.02" height="1.02" fill="#e0b564"/><rect x="18" y="54" width="1.02" height="1.02" fill="#dbaa55"/><rect x="19" y="54" width="1.02" height="1.02" fill="#d7a248"/><rect x="20" y="54" width="5.02" height="1.02" fill="#d49c40"/><rect x="25" y="54" width="2.02" height="1.02" fill="#c79038"/><rect x="27" y="54" width="1.02" height="1.02" fill="#d5a654"/><rect x="28" y="54" width="1.02" height="1.02" fill="#e4bf75"/><rect x="29" y="54" width="3.02" height="1.02" fill="#e9c67f"/><rect x="32" y="54" width="5.02" height="1.02" fill="#ebc983"/><rect x="37" y="54" width="3.02" height="1.02" fill="#e7c37b"/><rect x="40" y="54" width="9.02" height="1.02" fill="#e3be73"/><rect x="49" y="54" width="1.02" height="1.02" fill="#dfb368"/><rect x="50" y="54" width="3.02" height="1.02" fill="#d8a457"/><rect x="53" y="54" width="2.02" height="1.02" fill="#dcaa5f"/><rect x="55" y="54" width="4.02" height="1.02" fill="#e0b167"/><rect x="59" y="54" width="5.02" height="1.02" fill="#e2b86e"/><rect x="64" y="54" width="2.02" height="1.02" fill="#e3bd73"/><rect x="66" y="54" width="4.02" height="1.02" fill="#e7c37a"/><rect x="70" y="54" width="1.02" height="1.02" fill="#a38a56"/><rect x="71" y="54" width="1.02" height="1.02" fill="#605132"/><rect x="72" y="54" width="1.02" height="1.02" fill="#262014"/><rect x="73" y="54" width="2.02" height="1.02" fill="#000000"/><rect x="9" y="55" width="1.02" height="1.02" fill="#3f3521"/><rect x="10" y="55" width="5.02" height="1.02" fill="#e8c47b"/><rect x="15" y="55" width="2.02" height="1.02" fill="#e6c075"/><rect x="17" y="55" width="1.02" height="1.02" fill="#e3ba6c"/><rect x="18" y="55" width="1.02" height="1.02" fill="#deb15f"/><rect x="19" y="55" width="1.02" height="1.02" fill="#d9a750"/><rect x="20" y="55" width="3.02" height="1.02" fill="#d59e42"/><rect x="23" y="55" width="3.02" height="1.02" fill="#d39b3f"/><rect x="26" y="55" width="2.02" height="1.02" fill="#c79039"/><rect x="28" y="55" width="1.02" height="1.02" fill="#d9ad5e"/><rect x="29" y="55" width="2.02" height="1.02" fill="#e6c27a"/><rect x="31" y="55" width="9.02" height="1.02" fill="#eac781"/><rect x="40" y="55" width="5.02" height="1.02" fill="#e4bf75"/><rect x="45" y="55" width="6.02" height="1.02" fill="#e3bd73"/><rect x="51" y="55" width="1.02" height="1.02" fill="#dfb368"/><rect x="52" y="55" width="4.02" height="1.02" fill="#d9a557"/><rect x="56" y="55" width="3.02" height="1.02" fill="#ddac61"/><rect x="59" y="55" width="4.02" height="1.02" fill="#e0b268"/><rect x="63" y="55" width="6.02" height="1.02" fill="#e2ba70"/><rect x="69" y="55" width="3.02" height="1.02" fill="#e6c178"/><rect x="72" y="55" width="1.02" height="1.02" fill="#e8c57c"/><rect x="73" y="55" width="1.02" height="1.02" fill="#d4b371"/><rect x="74" y="55" width="1.02" height="1.02" fill="#967e4f"/><rect x="75" y="55" width="1.02" height="1.02" fill="#635334"/><rect x="76" y="55" width="1.02" height="1.02" fill="#362d1c"/><rect x="77" y="55" width="1.02" height="1.02" fill="#0b0906"/><rect x="78" y="55" width="3.02" height="1.02" fill="#000000"/><rect x="9" y="56" width="1.02" height="1.02" fill="#070604"/><rect x="10" y="56" width="1.02" height="1.02" fill="#dcba76"/><rect x="11" y="56" width="5.02" height="1.02" fill="#e8c47b"/><rect x="16" y="56" width="2.02" height="1.02" fill="#e5c074"/><rect x="18" y="56" width="1.02" height="1.02" fill="#e2b869"/><rect x="19" y="56" width="1.02" height="1.02" fill="#ddae5a"/><rect x="20" y="56" width="1.02" height="1.02" fill="#d8a54d"/><rect x="21" y="56" width="5.02" height="1.02" fill="#d49d41"/><rect x="26" y="56" width="1.02" height="1.02" fill="#d0983d"/><rect x="27" y="56" width="1.02" height="1.02" fill="#c48c35"/><rect x="28" y="56" width="1.02" height="1.02" fill="#cc9741"/><rect x="29" y="56" width="1.02" height="1.02" fill="#ddb466"/><rect x="30" y="56" width="2.02" height="1.02" fill="#e7c37a"/><rect x="32" y="56" width="9.02" height="1.02" fill="#eac882"/><rect x="41" y="56" width="4.02" height="1.02" fill="#e5c076"/><rect x="45" y="56" width="8.02" height="1.02" fill="#e3bd73"/><rect x="53" y="56" width="1.02" height="1.02" fill="#e1b76c"/><rect x="54" y="56" width="1.02" height="1.02" fill="#dbab5e"/><rect x="55" y="56" width="3.02" height="1.02" fill="#d8a456"/><rect x="58" y="56" width="2.02" height="1.02" fill="#dba85c"/><rect x="60" y="56" width="4.02" height="1.02" fill="#deae64"/><rect x="64" y="56" width="4.02" height="1.02" fill="#e1b46a"/><rect x="68" y="56" width="6.02" height="1.02" fill="#e3bb71"/><rect x="74" y="56" width="4.02" height="1.02" fill="#e7c27a"/><rect x="78" y="56" width="1.02" height="1.02" fill="#c2a467"/><rect x="79" y="56" width="1.02" height="1.02" fill="#937c4d"/><rect x="80" y="56" width="1.02" height="1.02" fill="#6b5a38"/><rect x="81" y="56" width="1.02" height="1.02" fill="#443a24"/><rect x="82" y="56" width="1.02" height="1.02" fill="#1f1a10"/><rect x="83" y="56" width="3.02" height="1.02" fill="#000000"/><rect x="9" y="57" width="1.02" height="1.02" fill="#000000"/><rect x="10" y="57" width="1.02" height="1.02" fill="#8e784b"/><rect x="11" y="57" width="6.02" height="1.02" fill="#e8c37b"/><rect x="17" y="57" width="2.02" height="1.02" fill="#e5bf73"/><rect x="19" y="57" width="1.02" height="1.02" fill="#e0b565"/><rect x="20" y="57" width="1.02" height="1.02" fill="#dcab57"/><rect x="21" y="57" width="1.02" height="1.02" fill="#d7a34a"/><rect x="22" y="57" width="5.02" height="1.02" fill="#d49c40"/><rect x="27" y="57" width="1.02" height="1.02" fill="#cc953b"/><rect x="28" y="57" width="1.02" height="1.02" fill="#c48d36"/><rect x="29" y="57" width="1.02" height="1.02" fill="#cf9c48"/><rect x="30" y="57" width="1.02" height="1.02" fill="#e0b86c"/><rect x="31" y="57" width="2.02" height="1.02" fill="#e7c37a"/><rect x="33" y="57" width="10.02" height="1.02" fill="#eac781"/><rect x="43" y="57" width="13.02" height="1.02" fill="#e3be74"/><rect x="56" y="57" width="1.02" height="1.02" fill="#e0b56a"/><rect x="57" y="57" width="1.02" height="1.02" fill="#dbab5e"/><rect x="58" y="57" width="4.02" height="1.02" fill="#d8a456"/><rect x="62" y="57" width="3.02" height="1.02" fill="#dcaa5f"/><rect x="65" y="57" width="5.02" height="1.02" fill="#dfaf65"/><rect x="70" y="57" width="3.02" height="1.02" fill="#e2b56b"/><rect x="73" y="57" width="6.02" height="1.02" fill="#e3bb71"/><rect x="79" y="57" width="4.02" height="1.02" fill="#e7c27a"/><rect x="83" y="57" width="1.02" height="1.02" fill="#dbb975"/><rect x="84" y="57" width="1.02" height="1.02" fill="#b3975e"/><rect x="85" y="57" width="1.02" height="1.02" fill="#877246"/><rect x="86" y="57" width="1.02" height="1.02" fill="#52452a"/><rect x="87" y="57" width="1.02" height="1.02" fill="#0d0b07"/><rect x="88" y="57" width="1.02" height="1.02" fill="#000000"/><rect x="10" y="58" width="1.02" height="1.02" fill="#382f1e"/><rect x="11" y="58" width="6.02" height="1.02" fill="#e8c47b"/><rect x="17" y="58" width="2.02" height="1.02" fill="#e6c176"/><rect x="19" y="58" width="1.02" height="1.02" fill="#e3bb6e"/><rect x="20" y="58" width="1.02" height="1.02" fill="#dfb362"/><rect x="21" y="58" width="1.02" height="1.02" fill="#daa954"/><rect x="22" y="58" width="2.02" height="1.02" fill="#d6a045"/><rect x="24" y="58" width="4.02" height="1.02" fill="#d49c3f"/><rect x="28" y="58" width="2.02" height="1.02" fill="#c79038"/><rect x="30" y="58" width="1.02" height="1.02" fill="#d2a14e"/><rect x="31" y="58" width="1.02" height="1.02" fill="#e2bb70"/><rect x="32" y="58" width="3.02" height="1.02" fill="#e7c47c"/><rect x="35" y="58" width="8.02" height="1.02" fill="#ebc882"/><rect x="43" y="58" width="3.02" height="1.02" fill="#e6c279"/><rect x="46" y="58" width="13.02" height="1.02" fill="#e3be73"/><rect x="59" y="58" width="1.02" height="1.02" fill="#e1b66b"/><rect x="60" y="58" width="1.02" height="1.02" fill="#ddae61"/><rect x="61" y="58" width="7.02" height="1.02" fill="#d9a558"/><rect x="68" y="58" width="4.02" height="1.02" fill="#ddac61"/><rect x="72" y="58" width="5.02" height="1.02" fill="#e0b167"/><rect x="77" y="58" width="5.02" height="1.02" fill="#e2b86e"/><rect x="82" y="58" width="2.02" height="1.02" fill="#e3bc73"/><rect x="84" y="58" width="3.02" height="1.02" fill="#e8c47c"/><rect x="87" y="58" width="1.02" height="1.02" fill="#ddba75"/><rect x="88" y="58" width="1.02" height="1.02" fill="#6e5b38"/><rect x="89" y="58" width="1.02" height="1.02" fill="#030302"/><rect x="10" y="59" width="1.02" height="1.02" fill="#000000"/><rect x="11" y="59" width="1.02" height="1.02" fill="#b79b62"/><rect x="12" y="59" width="6.02" height="1.02" fill="#e8c37b"/><rect x="18" y="59" width="2.02" height="1.02" fill="#e6c075"/><rect x="20" y="59" width="1.02" height="1.02" fill="#e3ba6c"/><rect x="21" y="59" width="1.02" height="1.02" fill="#deb15f"/><rect x="22" y="59" width="1.02" height="1.02" fill="#d9a751"/><rect x="23" y="59" width="2.02" height="1.02" fill="#d59f44"/><rect x="25" y="59" width="4.02" height="1.02" fill="#d39c3f"/><rect x="29" y="59" width="2.02" height="1.02" fill="#c79038"/><rect x="31" y="59" width="1.02" height="1.02" fill="#d5a554"/><rect x="32" y="59" width="1.02" height="1.02" fill="#e2bc71"/><rect x="33" y="59" width="3.02" height="1.02" fill="#e7c37b"/><rect x="36" y="59" width="9.02" height="1.02" fill="#eac882"/><rect x="45" y="59" width="4.02" height="1.02" fill="#e5c077"/><rect x="49" y="59" width="14.02" height="1.02" fill="#e3bd73"/><rect x="63" y="59" width="1.02" height="1.02" fill="#e0b569"/><rect x="64" y="59" width="1.02" height="1.02" fill="#ddae62"/><rect x="65" y="59" width="1.02" height="1.02" fill="#daa85b"/><rect x="66" y="59" width="6.02" height="1.02" fill="#d8a456"/><rect x="72" y="59" width="4.02" height="1.02" fill="#dba95d"/><rect x="76" y="59" width="5.02" height="1.02" fill="#deae63"/><rect x="81" y="59" width="3.02" height="1.02" fill="#e1b56b"/><rect x="84" y="59" width="2.02" height="1.02" fill="#e5bd74"/><rect x="86" y="59" width="1.02" height="1.02" fill="#e7c279"/><rect x="87" y="59" width="1.02" height="1.02" fill="#c7a567"/><rect x="88" y="59" width="1.02" height="1.02" fill="#92754a"/><rect x="89" y="59" width="1.02" height="1.02" fill="#5c492d"/><rect x="90" y="59" width="1.02" height="1.02" fill="#030201"/><rect x="11" y="60" width="1.02" height="1.02" fill="#4a3f27"/><rect x="12" y="60" width="7.02" height="1.02" fill="#e8c37b"/><rect x="19" y="60" width="2.02" height="1.02" fill="#e6c074"/><rect x="21" y="60" width="1.02" height="1.02" fill="#e2b869"/><rect x="22" y="60" width="1.02" height="1.02" fill="#ddaf5b"/><rect x="23" y="60" width="1.02" height="1.02" fill="#d9a54e"/><rect x="24" y="60" width="5.02" height="1.02" fill="#d49d41"/><rect x="29" y="60" width="1.02" height="1.02" fill="#d19a3e"/><rect x="30" y="60" width="2.02" height="1.02" fill="#c69038"/><rect x="32" y="60" width="1.02" height="1.02" fill="#d6a858"/><rect x="33" y="60" width="1.02" height="1.02" fill="#e3bc71"/><rect x="34" y="60" width="3.02" height="1.02" fill="#e7c37b"/><rect x="37" y="60" width="10.02" height="1.02" fill="#eac782"/><rect x="47" y="60" width="5.02" height="1.02" fill="#e4c076"/><rect x="52" y="60" width="16.02" height="1.02" fill="#e3bd73"/><rect x="68" y="60" width="2.02" height="1.02" fill="#e0b469"/><rect x="70" y="60" width="1.02" height="1.02" fill="#dcac5f"/><rect x="71" y="60" width="12.02" height="1.02" fill="#d9a558"/><rect x="83" y="60" width="2.02" height="1.02" fill="#ddac61"/><rect x="85" y="60" width="2.02" height="1.02" fill="#e0b268"/><rect x="87" y="60" width="1.02" height="1.02" fill="#a7834d"/><rect x="88" y="60" width="1.02" height="1.02" fill="#39291d"/><rect x="89" y="60" width="1.02" height="1.02" fill="#2e2018"/><rect x="90" y="60" width="1.02" height="1.02" fill="#261d13"/><rect x="91" y="60" width="1.02" height="1.02" fill="#000000"/><rect x="11" y="61" width="1.02" height="1.02" fill="#020101"/><rect x="12" y="61" width="1.02" height="1.02" fill="#bc9f64"/><rect x="13" y="61" width="7.02" height="1.02" fill="#e7c37a"/><rect x="20" y="61" width="2.02" height="1.02" fill="#e5bf73"/><rect x="22" y="61" width="1.02" height="1.02" fill="#e1b666"/><rect x="23" y="61" width="1.02" height="1.02" fill="#dcac58"/><rect x="24" y="61" width="1.02" height="1.02" fill="#d8a44b"/><rect x="25" y="61" width="5.02" height="1.02" fill="#d49d41"/><rect x="30" y="61" width="1.02" height="1.02" fill="#d0993d"/><rect x="31" y="61" width="1.02" height="1.02" fill="#c48d36"/><rect x="32" y="61" width="1.02" height="1.02" fill="#c9933c"/><rect x="33" y="61" width="1.02" height="1.02" fill="#d7a958"/><rect x="34" y="61" width="1.02" height="1.02" fill="#e2bc71"/><rect x="35" y="61" width="3.02" height="1.02" fill="#e6c27a"/><rect x="38" y="61" width="11.02" height="1.02" fill="#eac781"/><rect x="49" y="61" width="7.02" height="1.02" fill="#e4bf75"/><rect x="56" y="61" width="19.02" height="1.02" fill="#e3bd72"/><rect x="75" y="61" width="2.02" height="1.02" fill="#deb166"/><rect x="77" y="61" width="2.02" height="1.02" fill="#dbab5e"/><rect x="79" y="61" width="8.02" height="1.02" fill="#d8a456"/><rect x="87" y="61" width="1.02" height="1.02" fill="#d9a75d"/><rect x="88" y="61" width="1.02" height="1.02" fill="#7a5b36"/><rect x="89" y="61" width="1.02" height="1.02" fill="#2b1d16"/><rect x="90" y="61" width="1.02" height="1.02" fill="#35261a"/><rect x="91" y="61" width="1.02" height="1.02" fill="#000000"/><rect x="11" y="62" width="1.02" height="1.02" fill="#000000"/><rect x="12" y="62" width="1.02" height="1.02" fill="#4e4229"/><rect x="13" y="62" width="8.02" height="1.02" fill="#e7c37a"/><rect x="21" y="62" width="2.02" height="1.02" fill="#e5be72"/><rect x="23" y="62" width="1.02" height="1.02" fill="#e0b463"/><rect x="24" y="62" width="1.02" height="1.02" fill="#dbab55"/><rect x="25" y="62" width="1.02" height="1.02" fill="#d7a34a"/><rect x="26" y="62" width="5.02" height="1.02" fill="#d49c40"/><rect x="31" y="62" width="1.02" height="1.02" fill="#d0983d"/><rect x="32" y="62" width="1.02" height="1.02" fill="#c58e37"/><rect x="33" y="62" width="1.02" height="1.02" fill="#c9943e"/><rect x="34" y="62" width="1.02" height="1.02" fill="#d6a857"/><rect x="35" y="62" width="1.02" height="1.02" fill="#e2bb6f"/><rect x="36" y="62" width="3.02" height="1.02" fill="#e6c279"/><rect x="39" y="62" width="3.02" height="1.02" fill="#eac781"/><rect x="42" y="62" width="7.02" height="1.02" fill="#ebc883"/><rect x="49" y="62" width="4.02" height="1.02" fill="#e6c279"/><rect x="53" y="62" width="30.02" height="1.02" fill="#e3bd73"/><rect x="83" y="62" width="2.02" height="1.02" fill="#e0b56a"/><rect x="85" y="62" width="1.02" height="1.02" fill="#dcab5f"/><rect x="86" y="62" width="2.02" height="1.02" fill="#ce9c51"/><rect x="88" y="62" width="1.02" height="1.02" fill="#b28748"/><rect x="89" y="62" width="2.02" height="1.02" fill="#392a1c"/><rect x="91" y="62" width="1.02" height="1.02" fill="#000000"/><rect x="12" y="63" width="1.02" height="1.02" fill="#030201"/><rect x="13" y="63" width="1.02" height="1.02" fill="#bda065"/><rect x="14" y="63" width="7.02" height="1.02" fill="#e7c37a"/><rect x="21" y="63" width="2.02" height="1.02" fill="#e6c175"/><rect x="23" y="63" width="1.02" height="1.02" fill="#e3bb6d"/><rect x="24" y="63" width="1.02" height="1.02" fill="#dfb361"/><rect x="25" y="63" width="1.02" height="1.02" fill="#daa953"/><rect x="26" y="63" width="2.02" height="1.02" fill="#d6a045"/><rect x="28" y="63" width="5.02" height="1.02" fill="#d39b3f"/><rect x="33" y="63" width="1.02" height="1.02" fill="#c69039"/><rect x="34" y="63" width="1.02" height="1.02" fill="#ca943f"/><rect x="35" y="63" width="1.02" height="1.02" fill="#d5a655"/><rect x="36" y="63" width="1.02" height="1.02" fill="#e1b96d"/><rect x="37" y="63" width="3.02" height="1.02" fill="#e6c178"/><rect x="40" y="63" width="3.02" height="1.02" fill="#e9c680"/><rect x="43" y="63" width="8.02" height="1.02" fill="#ebc883"/><rect x="51" y="63" width="4.02" height="1.02" fill="#e6c279"/><rect x="55" y="63" width="29.02" height="1.02" fill="#e3be74"/><rect x="84" y="63" width="2.02" height="1.02" fill="#e8c57e"/><rect x="86" y="63" width="1.02" height="1.02" fill="#d7b572"/><rect x="87" y="63" width="1.02" height="1.02" fill="#8b6b3d"/><rect x="88" y="63" width="1.02" height="1.02" fill="#b98a47"/><rect x="89" y="63" width="1.02" height="1.02" fill="#a37b43"/><rect x="90" y="63" width="1.02" height="1.02" fill="#1f180e"/><rect x="13" y="64" width="1.02" height="1.02" fill="#453a24"/><rect x="14" y="64" width="8.02" height="1.02" fill="#e8c37a"/><rect x="22" y="64" width="2.02" height="1.02" fill="#e6c075"/><rect x="24" y="64" width="1.02" height="1.02" fill="#e2ba6c"/><rect x="25" y="64" width="1.02" height="1.02" fill="#deb15f"/><rect x="26" y="64" width="1.02" height="1.02" fill="#daa852"/><rect x="27" y="64" width="2.02" height="1.02" fill="#d59f45"/><rect x="29" y="64" width="5.02" height="1.02" fill="#d39b3f"/><rect x="34" y="64" width="2.02" height="1.02" fill="#c8933c"/><rect x="36" y="64" width="1.02" height="1.02" fill="#d4a452"/><rect x="37" y="64" width="1.02" height="1.02" fill="#dfb76b"/><rect x="38" y="64" width="3.02" height="1.02" fill="#e5c077"/><rect x="41" y="64" width="3.02" height="1.02" fill="#e9c57e"/><rect x="44" y="64" width="9.02" height="1.02" fill="#ebc883"/><rect x="53" y="64" width="5.02" height="1.02" fill="#e6c279"/><rect x="58" y="64" width="24.02" height="1.02" fill="#e3be74"/><rect x="82" y="64" width="5.02" height="1.02" fill="#e9c67f"/><rect x="87" y="64" width="1.02" height="1.02" fill="#d2b170"/><rect x="88" y="64" width="1.02" height="1.02" fill="#a5854f"/><rect x="89" y="64" width="1.02" height="1.02" fill="#735930"/><rect x="90" y="64" width="1.02" height="1.02" fill="#000000"/><rect x="13" y="65" width="1.02" height="1.02" fill="#000000"/><rect x="14" y="65" width="1.02" height="1.02" fill="#a78d59"/><rect x="15" y="65" width="8.02" height="1.02" fill="#e7c37a"/><rect x="23" y="65" width="2.02" height="1.02" fill="#e6c074"/><rect x="25" y="65" width="1.02" height="1.02" fill="#e2b96a"/><rect x="26" y="65" width="1.02" height="1.02" fill="#deb05e"/><rect x="27" y="65" width="1.02" height="1.02" fill="#daa751"/><rect x="28" y="65" width="2.02" height="1.02" fill="#d69f45"/><rect x="30" y="65" width="5.02" height="1.02" fill="#d39c3f"/><rect x="35" y="65" width="2.02" height="1.02" fill="#c9943c"/><rect x="37" y="65" width="1.02" height="1.02" fill="#d3a24f"/><rect x="38" y="65" width="1.02" height="1.02" fill="#ddb365"/><rect x="39" y="65" width="3.02" height="1.02" fill="#e4bf76"/><rect x="42" y="65" width="3.02" height="1.02" fill="#e8c47d"/><rect x="45" y="65" width="12.02" height="1.02" fill="#eac882"/><rect x="57" y="65" width="10.02" height="1.02" fill="#e5c077"/><rect x="67" y="65" width="13.02" height="1.02" fill="#e4bf75"/><rect x="80" y="65" width="3.02" height="1.02" fill="#e8c57e"/><rect x="83" y="65" width="5.02" height="1.02" fill="#eac882"/><rect x="88" y="65" width="1.02" height="1.02" fill="#e4c07a"/><rect x="89" y="65" width="1.02" height="1.02" fill="#3e3420"/><rect x="14" y="66" width="1.02" height="1.02" fill="#292316"/><rect x="15" y="66" width="10.02" height="1.02" fill="#e7c37a"/><rect x="25" y="66" width="1.02" height="1.02" fill="#e5be72"/><rect x="26" y="66" width="1.02" height="1.02" fill="#e2b86a"/><rect x="27" y="66" width="1.02" height="1.02" fill="#deb05e"/><rect x="28" y="66" width="1.02" height="1.02" fill="#daa751"/><rect x="29" y="66" width="2.02" height="1.02" fill="#d5a045"/><rect x="31" y="66" width="5.02" height="1.02" fill="#d49c3f"/><rect x="36" y="66" width="2.02" height="1.02" fill="#ca943d"/><rect x="38" y="66" width="1.02" height="1.02" fill="#d19f4b"/><rect x="39" y="66" width="1.02" height="1.02" fill="#daad5e"/><rect x="40" y="66" width="1.02" height="1.02" fill="#e1ba6f"/><rect x="41" y="66" width="3.02" height="1.02" fill="#e5c077"/><rect x="44" y="66" width="3.02" height="1.02" fill="#e8c57e"/><rect x="47" y="66" width="13.02" height="1.02" fill="#eac882"/><rect x="60" y="66" width="21.02" height="1.02" fill="#e6c279"/><rect x="81" y="66" width="7.02" height="1.02" fill="#ebc883"/><rect x="88" y="66" width="1.02" height="1.02" fill="#e7c37b"/><rect x="89" y="66" width="1.02" height="1.02" fill="#362e1c"/><rect x="14" y="67" width="1.02" height="1.02" fill="#000000"/><rect x="15" y="67" width="1.02" height="1.02" fill="#7f6b43"/><rect x="16" y="67" width="9.02" height="1.02" fill="#e7c37a"/><rect x="25" y="67" width="2.02" height="1.02" fill="#e5c074"/><rect x="27" y="67" width="1.02" height="1.02" fill="#e2b86a"/><rect x="28" y="67" width="1.02" height="1.02" fill="#deb05e"/><rect x="29" y="67" width="1.02" height="1.02" fill="#daa852"/><rect x="30" y="67" width="2.02" height="1.02" fill="#d6a046"/><rect x="32" y="67" width="6.02" height="1.02" fill="#d39b3f"/><rect x="38" y="67" width="1.02" height="1.02" fill="#c8943e"/><rect x="39" y="67" width="1.02" height="1.02" fill="#ce9c47"/><rect x="40" y="67" width="1.02" height="1.02" fill="#d6a756"/><rect x="41" y="67" width="1.02" height="1.02" fill="#deb567"/><rect x="42" y="67" width="3.02" height="1.02" fill="#e4bf75"/><rect x="45" y="67" width="3.02" height="1.02" fill="#e8c47c"/><rect x="48" y="67" width="40.02" height="1.02" fill="#e9c680"/><rect x="88" y="67" width="1.02" height="1.02" fill="#e0bd76"/><rect x="89" y="67" width="1.02" height="1.02" fill="#0d0a06"/><rect x="15" y="68" width="1.02" height="1.02" fill="#0d0b07"/><rect x="16" y="68" width="1.02" height="1.02" fill="#ccad6d"/><rect x="17" y="68" width="9.02" height="1.02" fill="#e7c37a"/><rect x="26" y="68" width="2.02" height="1.02" fill="#e5c074"/><rect x="28" y="68" width="1.02" height="1.02" fill="#e2b96a"/><rect x="29" y="68" width="1.02" height="1.02" fill="#deb15f"/><rect x="30" y="68" width="1.02" height="1.02" fill="#daa953"/><rect x="31" y="68" width="2.02" height="1.02" fill="#d6a046"/><rect x="33" y="68" width="6.02" height="1.02" fill="#d39c3f"/><rect x="39" y="68" width="1.02" height="1.02" fill="#ca953c"/><rect x="40" y="68" width="1.02" height="1.02" fill="#cc9944"/><rect x="41" y="68" width="1.02" height="1.02" fill="#d3a250"/><rect x="42" y="68" width="1.02" height="1.02" fill="#d9ad5e"/><rect x="43" y="68" width="1.02" height="1.02" fill="#e0b86c"/><rect x="44" y="68" width="3.02" height="1.02" fill="#e5c076"/><rect x="47" y="68" width="4.02" height="1.02" fill="#e8c57d"/><rect x="51" y="68" width="36.02" height="1.02" fill="#eac882"/><rect x="87" y="68" width="1.02" height="1.02" fill="#e6c27a"/><rect x="88" y="68" width="1.02" height="1.02" fill="#937c4c"/><rect x="89" y="68" width="1.02" height="1.02" fill="#000000"/><rect x="15" y="69" width="1.02" height="1.02" fill="#000000"/><rect x="16" y="69" width="1.02" height="1.02" fill="#403622"/><rect x="17" y="69" width="10.02" height="1.02" fill="#e7c37a"/><rect x="27" y="69" width="2.02" height="1.02" fill="#e6c074"/><rect x="29" y="69" width="1.02" height="1.02" fill="#e2ba6b"/><rect x="30" y="69" width="1.02" height="1.02" fill="#dfb260"/><rect x="31" y="69" width="1.02" height="1.02" fill="#dbaa54"/><rect x="32" y="69" width="1.02" height="1.02" fill="#d7a34a"/><rect x="33" y="69" width="7.02" height="1.02" fill="#d49c40"/><rect x="40" y="69" width="2.02" height="1.02" fill="#cc973e"/><rect x="42" y="69" width="1.02" height="1.02" fill="#cf9e4b"/><rect x="43" y="69" width="1.02" height="1.02" fill="#d6a756"/><rect x="44" y="69" width="1.02" height="1.02" fill="#dcb062"/><rect x="45" y="69" width="1.02" height="1.02" fill="#e1b96d"/><rect x="46" y="69" width="3.02" height="1.02" fill="#e5c076"/><rect x="49" y="69" width="4.02" height="1.02" fill="#e8c47d"/><rect x="53" y="69" width="33.02" height="1.02" fill="#ebc983"/><rect x="86" y="69" width="2.02" height="1.02" fill="#e4c078"/><rect x="88" y="69" width="1.02" height="1.02" fill="#2d2617"/><rect x="16" y="70" width="1.02" height="1.02" fill="#000000"/><rect x="17" y="70" width="1.02" height="1.02" fill="#806c44"/><rect x="18" y="70" width="10.02" height="1.02" fill="#e7c37a"/><rect x="28" y="70" width="2.02" height="1.02" fill="#e6c074"/><rect x="30" y="70" width="1.02" height="1.02" fill="#e3ba6c"/><rect x="31" y="70" width="1.02" height="1.02" fill="#dfb362"/><rect x="32" y="70" width="1.02" height="1.02" fill="#dbab57"/><rect x="33" y="70" width="1.02" height="1.02" fill="#d8a44c"/><rect x="34" y="70" width="4.02" height="1.02" fill="#d49d42"/><rect x="38" y="70" width="4.02" height="1.02" fill="#d39c3f"/><rect x="42" y="70" width="1.02" height="1.02" fill="#cd973d"/><rect x="43" y="70" width="1.02" height="1.02" fill="#cb9844"/><rect x="44" y="70" width="1.02" height="1.02" fill="#d2a14f"/><rect x="45" y="70" width="1.02" height="1.02" fill="#d8aa58"/><rect x="46" y="70" width="1.02" height="1.02" fill="#dcb162"/><rect x="47" y="70" width="1.02" height="1.02" fill="#e1b96d"/><rect x="48" y="70" width="3.02" height="1.02" fill="#e5c076"/><rect x="51" y="70" width="4.02" height="1.02" fill="#e8c47c"/><rect x="55" y="70" width="30.02" height="1.02" fill="#ebc983"/><rect x="85" y="70" width="2.02" height="1.02" fill="#e5c178"/><rect x="87" y="70" width="1.02" height="1.02" fill="#725f3a"/><rect x="88" y="70" width="1.02" height="1.02" fill="#000000"/><rect x="17" y="71" width="1.02" height="1.02" fill="#070604"/><rect x="18" y="71" width="1.02" height="1.02" fill="#b2975f"/><rect x="19" y="71" width="10.02" height="1.02" fill="#e7c37a"/><rect x="29" y="71" width="2.02" height="1.02" fill="#e6c075"/><rect x="31" y="71" width="1.02" height="1.02" fill="#e3bb6e"/><rect x="32" y="71" width="1.02" height="1.02" fill="#e0b565"/><rect x="33" y="71" width="1.02" height="1.02" fill="#ddae5a"/><rect x="34" y="71" width="1.02" height="1.02" fill="#d9a74f"/><rect x="35" y="71" width="2.02" height="1.02" fill="#d6a045"/><rect x="37" y="71" width="8.02" height="1.02" fill="#d39b40"/><rect x="45" y="71" width="1.02" height="1.02" fill="#cd9a46"/><rect x="46" y="71" width="1.02" height="1.02" fill="#d2a350"/><rect x="47" y="71" width="1.02" height="1.02" fill="#d8ab59"/><rect x="48" y="71" width="1.02" height="1.02" fill="#dcb162"/><rect x="49" y="71" width="1.02" height="1.02" fill="#e0b76b"/><rect x="50" y="71" width="2.02" height="1.02" fill="#e3be73"/><rect x="52" y="71" width="5.02" height="1.02" fill="#e7c37a"/><rect x="57" y="71" width="27.02" height="1.02" fill="#eac882"/><rect x="84" y="71" width="2.02" height="1.02" fill="#e5c077"/><rect x="86" y="71" width="1.02" height="1.02" fill="#877044"/><rect x="87" y="71" width="1.02" height="1.02" fill="#020201"/><rect x="18" y="72" width="1.02" height="1.02" fill="#19150d"/><rect x="19" y="72" width="1.02" height="1.02" fill="#d0b06f"/><rect x="20" y="72" width="10.02" height="1.02" fill="#e7c37a"/><rect x="30" y="72" width="2.02" height="1.02" fill="#e6c175"/><rect x="32" y="72" width="1.02" height="1.02" fill="#e4bd70"/><rect x="33" y="72" width="1.02" height="1.02" fill="#e1b768"/><rect x="34" y="72" width="1.02" height="1.02" fill="#deb05e"/><rect x="35" y="72" width="1.02" height="1.02" fill="#daaa54"/><rect x="36" y="72" width="1.02" height="1.02" fill="#d8a44b"/><rect x="37" y="72" width="10.02" height="1.02" fill="#d49d42"/><rect x="47" y="72" width="1.02" height="1.02" fill="#ce9b46"/><rect x="48" y="72" width="1.02" height="1.02" fill="#d1a14f"/><rect x="49" y="72" width="1.02" height="1.02" fill="#d7a959"/><rect x="50" y="72" width="1.02" height="1.02" fill="#dbb061"/><rect x="51" y="72" width="2.02" height="1.02" fill="#e0b76a"/><rect x="53" y="72" width="3.02" height="1.02" fill="#e4bf75"/><rect x="56" y="72" width="6.02" height="1.02" fill="#e7c47c"/><rect x="62" y="72" width="19.02" height="1.02" fill="#e9c680"/><rect x="81" y="72" width="3.02" height="1.02" fill="#e5c178"/><rect x="84" y="72" width="1.02" height="1.02" fill="#dfbb73"/><rect x="85" y="72" width="1.02" height="1.02" fill="#665533"/><rect x="86" y="72" width="1.02" height="1.02" fill="#000000"/><rect x="18" y="73" width="1.02" height="1.02" fill="#000000"/><rect x="19" y="73" width="1.02" height="1.02" fill="#312a1a"/><rect x="20" y="73" width="13.02" height="1.02" fill="#e7c379"/><rect x="33" y="73" width="1.02" height="1.02" fill="#e5be72"/><rect x="34" y="73" width="1.02" height="1.02" fill="#e3ba6c"/><rect x="35" y="73" width="1.02" height="1.02" fill="#e0b463"/><rect x="36" y="73" width="1.02" height="1.02" fill="#dcad59"/><rect x="37" y="73" width="1.02" height="1.02" fill="#d9a750"/><rect x="38" y="73" width="2.02" height="1.02" fill="#d6a046"/><rect x="40" y="73" width="7.02" height="1.02" fill="#d59e43"/><rect x="47" y="73" width="2.02" height="1.02" fill="#d6a249"/><rect x="49" y="73" width="2.02" height="1.02" fill="#d09f4b"/><rect x="51" y="73" width="1.02" height="1.02" fill="#d3a556"/><rect x="52" y="73" width="1.02" height="1.02" fill="#d9ad5c"/><rect x="53" y="73" width="2.02" height="1.02" fill="#deb466"/><rect x="55" y="73" width="2.02" height="1.02" fill="#e2bb6f"/><rect x="57" y="73" width="5.02" height="1.02" fill="#e5c177"/><rect x="62" y="73" width="18.02" height="1.02" fill="#e7c37b"/><rect x="80" y="73" width="3.02" height="1.02" fill="#e4be75"/><rect x="83" y="73" width="1.02" height="1.02" fill="#977e4c"/><rect x="84" y="73" width="1.02" height="1.02" fill="#262013"/><rect x="85" y="73" width="1.02" height="1.02" fill="#000000"/><rect x="19" y="74" width="1.02" height="1.02" fill="#000000"/><rect x="20" y="74" width="1.02" height="1.02" fill="#5b4d30"/><rect x="21" y="74" width="12.02" height="1.02" fill="#e7c37a"/><rect x="33" y="74" width="2.02" height="1.02" fill="#e6c075"/><rect x="35" y="74" width="1.02" height="1.02" fill="#e4bc6f"/><rect x="36" y="74" width="1.02" height="1.02" fill="#e1b768"/><rect x="37" y="74" width="1.02" height="1.02" fill="#deb15f"/><rect x="38" y="74" width="1.02" height="1.02" fill="#dbab55"/><rect x="39" y="74" width="1.02" height="1.02" fill="#d8a54d"/><rect x="40" y="74" width="9.02" height="1.02" fill="#d6a046"/><rect x="49" y="74" width="3.02" height="1.02" fill="#d8a64f"/><rect x="52" y="74" width="2.02" height="1.02" fill="#d2a24f"/><rect x="54" y="74" width="1.02" height="1.02" fill="#d3a555"/><rect x="55" y="74" width="1.02" height="1.02" fill="#d7ab5d"/><rect x="56" y="74" width="1.02" height="1.02" fill="#dcb263"/><rect x="57" y="74" width="2.02" height="1.02" fill="#e0b86b"/><rect x="59" y="74" width="4.02" height="1.02" fill="#e3be73"/><rect x="63" y="74" width="15.02" height="1.02" fill="#e5c076"/><rect x="78" y="74" width="3.02" height="1.02" fill="#e1b96d"/><rect x="81" y="74" width="1.02" height="1.02" fill="#736039"/><rect x="82" y="74" width="1.02" height="1.02" fill="#211c11"/><rect x="83" y="74" width="1.02" height="1.02" fill="#000000"/><rect x="20" y="75" width="1.02" height="1.02" fill="#000000"/><rect x="21" y="75" width="1.02" height="1.02" fill="#6a5938"/><rect x="22" y="75" width="12.02" height="1.02" fill="#e7c37a"/><rect x="34" y="75" width="3.02" height="1.02" fill="#e6c075"/><rect x="37" y="75" width="1.02" height="1.02" fill="#e3ba6d"/><rect x="38" y="75" width="1.02" height="1.02" fill="#e0b565"/><rect x="39" y="75" width="1.02" height="1.02" fill="#ddaf5c"/><rect x="40" y="75" width="1.02" height="1.02" fill="#dba954"/><rect x="41" y="75" width="2.02" height="1.02" fill="#d7a34a"/><rect x="43" y="75" width="5.02" height="1.02" fill="#d6a146"/><rect x="48" y="75" width="3.02" height="1.02" fill="#d9a64f"/><rect x="51" y="75" width="5.02" height="1.02" fill="#daaa56"/><rect x="56" y="75" width="2.02" height="1.02" fill="#d3a554"/><rect x="58" y="75" width="1.02" height="1.02" fill="#d5a95a"/><rect x="59" y="75" width="1.02" height="1.02" fill="#dab061"/><rect x="60" y="75" width="2.02" height="1.02" fill="#dfb76a"/><rect x="62" y="75" width="14.02" height="1.02" fill="#e2ba6f"/><rect x="76" y="75" width="2.02" height="1.02" fill="#dcb161"/><rect x="78" y="75" width="3.02" height="1.02" fill="#d7aa56"/><rect x="81" y="75" width="1.02" height="1.02" fill="#755e30"/><rect x="82" y="75" width="1.02" height="1.02" fill="#040302"/><rect x="21" y="76" width="1.02" height="1.02" fill="#000000"/><rect x="22" y="76" width="1.02" height="1.02" fill="#625334"/><rect x="23" y="76" width="13.02" height="1.02" fill="#e7c37a"/><rect x="36" y="76" width="3.02" height="1.02" fill="#e5c074"/><rect x="39" y="76" width="1.02" height="1.02" fill="#e2b96b"/><rect x="40" y="76" width="1.02" height="1.02" fill="#e0b464"/><rect x="41" y="76" width="1.02" height="1.02" fill="#ddaf5b"/><rect x="42" y="76" width="2.02" height="1.02" fill="#daa851"/><rect x="44" y="76" width="6.02" height="1.02" fill="#d8a44b"/><rect x="50" y="76" width="3.02" height="1.02" fill="#dba953"/><rect x="53" y="76" width="8.02" height="1.02" fill="#dcae5b"/><rect x="61" y="76" width="5.02" height="1.02" fill="#d7ab5a"/><rect x="66" y="76" width="7.02" height="1.02" fill="#daae5d"/><rect x="73" y="76" width="8.02" height="1.02" fill="#d9ac57"/><rect x="81" y="76" width="1.02" height="1.02" fill="#8a6c37"/><rect x="82" y="76" width="1.02" height="1.02" fill="#453821"/><rect x="83" y="76" width="1.02" height="1.02" fill="#030301"/><rect x="22" y="77" width="1.02" height="1.02" fill="#000000"/><rect x="23" y="77" width="1.02" height="1.02" fill="#55472d"/><rect x="24" y="77" width="15.02" height="1.02" fill="#e7c37a"/><rect x="39" y="77" width="2.02" height="1.02" fill="#e5be72"/><rect x="41" y="77" width="1.02" height="1.02" fill="#e2b96b"/><rect x="42" y="77" width="1.02" height="1.02" fill="#e0b564"/><rect x="43" y="77" width="2.02" height="1.02" fill="#ddae5b"/><rect x="45" y="77" width="9.02" height="1.02" fill="#daa953"/><rect x="54" y="77" width="4.02" height="1.02" fill="#deb05c"/><rect x="58" y="77" width="6.02" height="1.02" fill="#dfb463"/><rect x="64" y="77" width="2.02" height="1.02" fill="#d6aa59"/><rect x="66" y="77" width="4.02" height="1.02" fill="#d6a954"/><rect x="70" y="77" width="11.02" height="1.02" fill="#dbae58"/><rect x="81" y="77" width="1.02" height="1.02" fill="#846835"/><rect x="82" y="77" width="2.02" height="1.02" fill="#231c11"/><rect x="23" y="78" width="1.02" height="1.02" fill="#000000"/><rect x="24" y="78" width="1.02" height="1.02" fill="#3d3420"/><rect x="25" y="78" width="1.02" height="1.02" fill="#dab874"/><rect x="26" y="78" width="13.02" height="1.02" fill="#e7c37a"/><rect x="39" y="78" width="3.02" height="1.02" fill="#e6c175"/><rect x="42" y="78" width="2.02" height="1.02" fill="#e4bc6f"/><rect x="44" y="78" width="2.02" height="1.02" fill="#e0b565"/><rect x="46" y="78" width="2.02" height="1.02" fill="#ddaf5c"/><rect x="48" y="78" width="9.02" height="1.02" fill="#dcad58"/><rect x="57" y="78" width="4.02" height="1.02" fill="#e0b462"/><rect x="61" y="78" width="7.02" height="1.02" fill="#e1b868"/><rect x="68" y="78" width="1.02" height="1.02" fill="#d9ae5f"/><rect x="69" y="78" width="3.02" height="1.02" fill="#d5a956"/><rect x="72" y="78" width="9.02" height="1.02" fill="#dbae59"/><rect x="81" y="78" width="1.02" height="1.02" fill="#9a7a3e"/><rect x="82" y="78" width="2.02" height="1.02" fill="#1f180e"/><rect x="84" y="78" width="1.02" height="1.02" fill="#000000"/><rect x="24" y="79" width="1.02" height="1.02" fill="#000000"/><rect x="25" y="79" width="1.02" height="1.02" fill="#221d12"/><rect x="26" y="79" width="1.02" height="1.02" fill="#ba9d63"/><rect x="27" y="79" width="15.02" height="1.02" fill="#e7c37a"/><rect x="42" y="79" width="3.02" height="1.02" fill="#e6c074"/><rect x="45" y="79" width="2.02" height="1.02" fill="#e3bb6d"/><rect x="47" y="79" width="2.02" height="1.02" fill="#e1b666"/><rect x="49" y="79" width="13.02" height="1.02" fill="#dfb260"/><rect x="62" y="79" width="5.02" height="1.02" fill="#e2b96a"/><rect x="67" y="79" width="3.02" height="1.02" fill="#e4bd6f"/><rect x="70" y="79" width="1.02" height="1.02" fill="#aa8c51"/><rect x="71" y="79" width="1.02" height="1.02" fill="#8a6d38"/><rect x="72" y="79" width="9.02" height="1.02" fill="#dbae59"/><rect x="81" y="79" width="1.02" height="1.02" fill="#b69049"/><rect x="82" y="79" width="1.02" height="1.02" fill="#41341e"/><rect x="83" y="79" width="1.02" height="1.02" fill="#0b0906"/><rect x="26" y="80" width="1.02" height="1.02" fill="#080704"/><rect x="27" y="80" width="1.02" height="1.02" fill="#806c43"/><rect x="28" y="80" width="17.02" height="1.02" fill="#e7c37a"/><rect x="45" y="80" width="4.02" height="1.02" fill="#e5bf73"/><rect x="49" y="80" width="3.02" height="1.02" fill="#e2b96a"/><rect x="52" y="80" width="14.02" height="1.02" fill="#e1b666"/><rect x="66" y="80" width="4.02" height="1.02" fill="#e4bd70"/><rect x="70" y="80" width="1.02" height="1.02" fill="#d1af6a"/><rect x="71" y="80" width="1.02" height="1.02" fill="#57462a"/><rect x="72" y="80" width="1.02" height="1.02" fill="#b38e47"/><rect x="73" y="80" width="9.02" height="1.02" fill="#dbae59"/><rect x="82" y="80" width="1.02" height="1.02" fill="#524327"/><rect x="83" y="80" width="1.02" height="1.02" fill="#000000"/><rect x="27" y="81" width="1.02" height="1.02" fill="#000000"/><rect x="28" y="81" width="1.02" height="1.02" fill="#39301e"/><rect x="29" y="81" width="1.02" height="1.02" fill="#c6a769"/><rect x="30" y="81" width="17.02" height="1.02" fill="#e7c37a"/><rect x="47" y="81" width="5.02" height="1.02" fill="#e6c074"/><rect x="52" y="81" width="4.02" height="1.02" fill="#e3bb6e"/><rect x="56" y="81" width="12.02" height="1.02" fill="#e2b96a"/><rect x="68" y="81" width="3.02" height="1.02" fill="#e5bf73"/><rect x="71" y="81" width="1.02" height="1.02" fill="#8a7246"/><rect x="72" y="81" width="1.02" height="1.02" fill="#7f6434"/><rect x="73" y="81" width="7.02" height="1.02" fill="#dbae59"/><rect x="80" y="81" width="1.02" height="1.02" fill="#c79f53"/><rect x="81" y="81" width="1.02" height="1.02" fill="#41341b"/><rect x="82" y="81" width="1.02" height="1.02" fill="#000000"/><rect x="28" y="82" width="1.02" height="1.02" fill="#000000"/><rect x="29" y="82" width="1.02" height="1.02" fill="#090805"/><rect x="30" y="82" width="1.02" height="1.02" fill="#78653f"/><rect x="31" y="82" width="24.02" height="1.02" fill="#e7c379"/><rect x="55" y="82" width="8.02" height="1.02" fill="#e4bc6f"/><rect x="63" y="82" width="6.02" height="1.02" fill="#e4bc6f"/><rect x="69" y="82" width="2.02" height="1.02" fill="#e6c176"/><rect x="71" y="82" width="1.02" height="1.02" fill="#c7a666"/><rect x="72" y="82" width="1.02" height="1.02" fill="#8e703a"/><rect x="73" y="82" width="5.02" height="1.02" fill="#dbae59"/><rect x="78" y="82" width="1.02" height="1.02" fill="#cba254"/><rect x="79" y="82" width="1.02" height="1.02" fill="#6f5930"/><rect x="80" y="82" width="1.02" height="1.02" fill="#0e0b07"/><rect x="81" y="82" width="1.02" height="1.02" fill="#000000"/><rect x="30" y="83" width="1.02" height="1.02" fill="#000000"/><rect x="31" y="83" width="1.02" height="1.02" fill="#272114"/><rect x="32" y="83" width="1.02" height="1.02" fill="#aa8f59"/><rect x="33" y="83" width="22.02" height="1.02" fill="#e7c37a"/><rect x="55" y="83" width="16.02" height="1.02" fill="#e5bf74"/><rect x="71" y="83" width="1.02" height="1.02" fill="#d4b16b"/><rect x="72" y="83" width="1.02" height="1.02" fill="#bb944b"/><rect x="73" y="83" width="1.02" height="1.02" fill="#d1a756"/><rect x="74" y="83" width="1.02" height="1.02" fill="#c8a054"/><rect x="75" y="83" width="1.02" height="1.02" fill="#aa8848"/><rect x="76" y="83" width="1.02" height="1.02" fill="#7c6334"/><rect x="77" y="83" width="1.02" height="1.02" fill="#46381d"/><rect x="78" y="83" width="1.02" height="1.02" fill="#070603"/><rect x="79" y="83" width="1.02" height="1.02" fill="#000000"/><rect x="32" y="84" width="1.02" height="1.02" fill="#000000"/><rect x="33" y="84" width="1.02" height="1.02" fill="#423822"/><rect x="34" y="84" width="1.02" height="1.02" fill="#b4985f"/><rect x="35" y="84" width="31.02" height="1.02" fill="#e7c37a"/><rect x="66" y="84" width="5.02" height="1.02" fill="#e6c075"/><rect x="71" y="84" width="1.02" height="1.02" fill="#372e1c"/><rect x="72" y="84" width="5.02" height="1.02" fill="#000000"/><rect x="34" y="85" width="1.02" height="1.02" fill="#000000"/><rect x="35" y="85" width="1.02" height="1.02" fill="#3c331f"/><rect x="36" y="85" width="1.02" height="1.02" fill="#977f4f"/><rect x="37" y="85" width="33.02" height="1.02" fill="#e8c37b"/><rect x="70" y="85" width="1.02" height="1.02" fill="#54462b"/><rect x="71" y="85" width="1.02" height="1.02" fill="#000000"/><rect x="36" y="86" width="1.02" height="1.02" fill="#000000"/><rect x="37" y="86" width="1.02" height="1.02" fill="#17140c"/><rect x="38" y="86" width="1.02" height="1.02" fill="#675736"/><rect x="39" y="86" width="1.02" height="1.02" fill="#b89c61"/><rect x="40" y="86" width="28.02" height="1.02" fill="#e8c47c"/><rect x="68" y="86" width="1.02" height="1.02" fill="#cbaa69"/><rect x="69" y="86" width="1.02" height="1.02" fill="#372e1c"/><rect x="70" y="86" width="1.02" height="1.02" fill="#000000"/><rect x="38" y="87" width="2.02" height="1.02" fill="#000000"/><rect x="40" y="87" width="1.02" height="1.02" fill="#241e13"/><rect x="41" y="87" width="1.02" height="1.02" fill="#6f5d3a"/><rect x="42" y="87" width="1.02" height="1.02" fill="#bb9e63"/><rect x="43" y="87" width="23.02" height="1.02" fill="#e9c57d"/><rect x="66" y="87" width="1.02" height="1.02" fill="#d5b36f"/><rect x="67" y="87" width="1.02" height="1.02" fill="#6f5d39"/><rect x="68" y="87" width="1.02" height="1.02" fill="#0b0a06"/><rect x="69" y="87" width="1.02" height="1.02" fill="#000000"/><rect x="41" y="88" width="2.02" height="1.02" fill="#000000"/><rect x="43" y="88" width="1.02" height="1.02" fill="#241e12"/><rect x="44" y="88" width="1.02" height="1.02" fill="#635434"/><rect x="45" y="88" width="1.02" height="1.02" fill="#a28855"/><rect x="46" y="88" width="1.02" height="1.02" fill="#e0bd77"/><rect x="47" y="88" width="17.02" height="1.02" fill="#e8c47c"/><rect x="64" y="88" width="1.02" height="1.02" fill="#a38955"/><rect x="65" y="88" width="1.02" height="1.02" fill="#53462b"/><rect x="66" y="88" width="1.02" height="1.02" fill="#090704"/><rect x="67" y="88" width="1.02" height="1.02" fill="#000000"/><rect x="44" y="89" width="2.02" height="1.02" fill="#000000"/><rect x="46" y="89" width="1.02" height="1.02" fill="#070604"/><rect x="47" y="89" width="1.02" height="1.02" fill="#342c1b"/><rect x="48" y="89" width="1.02" height="1.02" fill="#635333"/><rect x="49" y="89" width="1.02" height="1.02" fill="#90794b"/><rect x="50" y="89" width="1.02" height="1.02" fill="#b69a60"/><rect x="51" y="89" width="1.02" height="1.02" fill="#cfaf6d"/><rect x="52" y="89" width="5.02" height="1.02" fill="#e7c47b"/><rect x="57" y="89" width="1.02" height="1.02" fill="#dbb974"/><rect x="58" y="89" width="1.02" height="1.02" fill="#c5a668"/><rect x="59" y="89" width="1.02" height="1.02" fill="#a28855"/><rect x="60" y="89" width="1.02" height="1.02" fill="#806c43"/><rect x="61" y="89" width="1.02" height="1.02" fill="#5f5031"/><rect x="62" y="89" width="1.02" height="1.02" fill="#382f1d"/><rect x="63" y="89" width="1.02" height="1.02" fill="#090705"/><rect x="64" y="89" width="1.02" height="1.02" fill="#000000"/><rect x="48" y="90" width="13.02" height="1.02" fill="#010100"/></g></svg>
<div style="left:0.00px;top:0.00px;width:520.00px;height:25.00px;background:#303030;"></div>
<div style="left:7.50px;top:5.00px;width:29.00px;height:17.10px;background:#2b2b2b;border-radius:4px;"></div>
<svg class="a" style="left:9.30px;top:5.40px" width="16" height="16" viewBox="0 0 16 16"><path d="M0.3 3.2Q0.3 0.2 3 0.2H14.2Q15.2 0.2 15.2 1.2V12Q15.2 13 14.2 13H4.6V14.5Q4.6 15.6 3.4 15.6H1.5Q0.3 15.6 0.3 14.5Z" fill="#e6e6e6"/><path d="M1.4 0.8H14.6" stroke="#9a9a9a" stroke-width="0.9"/><path d="M1.6 2.7H8M4.9 2.7V12.4" stroke="#1c1c1c" stroke-width="1" fill="none"/><g fill="#1c1c1c"><rect x="10.6" y="1.5" width="2" height="2"/><rect x="8.5" y="3.5" width="2" height="2"/><rect x="6.4" y="5.7" width="2" height="2"/><rect x="10.6" y="5.7" width="2" height="2"/><rect x="8.5" y="7.7" width="2" height="2"/><rect x="6.4" y="9.9" width="2" height="2"/><rect x="10.6" y="9.9" width="2" height="2"/></g></svg>
<svg class="a" style="left:27.70px;top:11.10px" width="8" height="6" viewBox="0 0 8 6"><path d="M0.9 1.2L4 4.3l3.1-3.1" stroke="#d0d0d0" stroke-width="1.1" fill="none"/></svg>
<span style="left:50.25px;top:7.48px;font-size:11.3px;color:#e4e4e4;letter-spacing:0.227px;">View</span>
<span style="left:90.50px;top:7.48px;font-size:11.3px;color:#e4e4e4;letter-spacing:0.587px;">Image</span>
<div style="left:147.50px;top:4.50px;width:31.25px;height:18.00px;background:#2b2b2b;border-radius:4px 0 0 4px;"></div>
<svg class="a" style="left:150.70px;top:5.30px" width="16" height="16" viewBox="0 0 16 16"><rect x="0.7" y="0.7" width="14.2" height="14.2" rx="2.2" fill="none" stroke="#b4b4b4" stroke-width="1.3"/><path d="M-0.4 15.2L5 6.6L10.6 15.2Z" fill="#e6e6e6" stroke="#2b2b2b" stroke-width="1.3"/><path d="M0.3 14.9L5 7.1L9.8 14.9Z" fill="#f0f0f0"/><circle cx="10.2" cy="5.2" r="1.6" fill="#f0f0f0"/></svg>
<svg class="a" style="left:168.20px;top:11.10px" width="8" height="6" viewBox="0 0 8 6"><path d="M0.9 1.2L4 4.3l3.1-3.1" stroke="#d0d0d0" stroke-width="1.1" fill="none"/></svg>
<div style="left:178.75px;top:4.50px;width:99.75px;height:18.00px;background:#1d1d1d;"></div>
<span style="left:185.68px;top:7.48px;font-size:11.3px;color:#e4e4e4;letter-spacing:0.412px;">__pixelated.png</span>
<div style="left:278.50px;top:4.50px;width:19.75px;height:18.00px;background:#545454;"></div>
<svg class="a" style="left:281.50px;top:5.80px" width="15" height="16" viewBox="0 0 15 16"><path d="M7.3 0.7C6 2.1 3.4 2.7 1 2.7C0.8 7.3 2 11.8 7.3 14.7C12.6 11.8 13.8 7.3 13.6 2.7C11.2 2.7 8.6 2.1 7.3 0.7Z" fill="none" stroke="#9c9c9c" stroke-width="1.2"/></svg>
<div style="left:299.00px;top:4.50px;width:19.25px;height:18.00px;background:#545454;"></div>
<svg class="a" style="left:301.50px;top:5.80px" width="15" height="15" viewBox="0 0 15 15"><g fill="none" stroke="#c4c4c4" stroke-width="1.25"><path d="M4 4.3H1.3Q0.7 4.3 0.7 4.9V13.7Q0.7 14.3 1.3 14.3H10.2Q10.8 14.3 10.8 13.7V11"/><path d="M4.7 0.7H10.4L13.9 4.2V9.6Q13.9 10.3 13.2 10.3H5.4Q4.7 10.3 4.7 9.6Z"/></g><path d="M10 0.2L14.4 4.6H10Z" fill="#e4e4e4"/></svg>
<div style="left:319.00px;top:4.50px;width:19.25px;height:18.00px;background:#545454;"></div>
<svg class="a" style="left:321.10px;top:5.80px" width="16" height="16" viewBox="0 0 16 16"><path d="M0 8.9H9.5V15H0.6Q0 15 0 14.4Z" fill="#e6e6e6"/><path d="M10.3 8.6L15 4.4V10.4L10.3 15Z" fill="#f2f2f2"/><rect x="2.4" y="3.8" width="7" height="3.6" rx="0.4" fill="#e6e6e6"/><path d="M2.4 5.6H9.4" stroke="#888" stroke-width="0.5"/><path d="M5.4 0.2H12.4V3.6H10.2V3H5.4Z" fill="#f0f0f0"/><path d="M10.4 3.6H12.4V6.2L10.4 7.9Z" fill="#e0e0e0"/></svg>
<div style="left:339.00px;top:4.50px;width:19.25px;height:18.00px;background:#545454;border-radius:0 4px 4px 0;"></div>
<svg class="a" style="left:344.20px;top:9.50px" width="9" height="9" viewBox="0 0 9 9"><path d="M0.5 0.5L8.2 8.2M8.2 0.5L0.5 8.2" stroke="#dcdcdc" stroke-width="1.2" fill="none"/></svg>
<svg class="a" style="left:365.90px;top:5.80px" width="16" height="16" viewBox="0 0 16 16"><path d="M0.6 14.5L5.2 9.9" stroke="#f0f0f0" stroke-width="1.3" stroke-linecap="round"/><path d="M2.3 5.5Q5.8 5 9.1 2.6L12.8 6.4Q10.6 9.4 10.2 12.7L8.6 12.8L2.4 6.6Z" fill="#fafafa"/><path d="M10.4 0.9L14.4 4.9" stroke="#fafafa" stroke-width="2.1" stroke-linecap="round"/></svg>
<div style="left:398.00px;top:4.25px;width:19.00px;height:18.50px;background:#4772b3;border-radius:4px 0 0 4px;"></div>
<div style="left:417.00px;top:4.25px;width:18.50px;height:18.50px;background:#2b2b2b;border-radius:0 4px 4px 0;"></div>
<svg class="a" style="left:398.00px;top:4.25px" width="19" height="19" viewBox="0 0 19 19"><g fill="none" stroke="#eef3ff" stroke-width="1.3" stroke-linecap="round"><path d="M2.2 4.4Q12.5 5 14.3 16"/><circle cx="4.2" cy="14.3" r="1.55"/><path d="M5.4 13.1L9.1 9.5M12.4 6.3L15.2 3.5"/></g><path d="M17 1.7L12.2 2L16.7 6.6Z" fill="#eef3ff"/></svg>
<svg class="a" style="left:422.50px;top:11.30px" width="8" height="6" viewBox="0 0 8 6"><path d="M0.9 1.2L4 4.3l3.1-3.1" stroke="#d0d0d0" stroke-width="1.1" fill="none"/></svg>
<div style="left:442.10px;top:4.25px;width:19.00px;height:18.50px;background:#4772b3;border-radius:4px 0 0 4px;"></div>
<div style="left:461.10px;top:4.25px;width:19.00px;height:18.50px;background:#2b2b2b;border-radius:0 4px 4px 0;"></div>
<svg class="a" style="left:442.10px;top:4.25px" width="19" height="19" viewBox="0 0 19 19"><defs><mask id="ovm"><rect width="19" height="19" fill="#fff"/><circle cx="11.6" cy="6.8" r="5.9" fill="#000"/></mask></defs><circle cx="11.6" cy="6.8" r="4.8" fill="#fafcff"/><circle cx="6.9" cy="11.6" r="4.7" fill="none" stroke="#e6f0ff" stroke-width="1.25" mask="url(#ovm)"/><ellipse cx="9.8" cy="8.7" rx="1" ry="0.6" transform="rotate(40 9.8 8.7)" fill="#456"/></svg>
<svg class="a" style="left:466.60px;top:11.30px" width="8" height="6" viewBox="0 0 8 6"><path d="M0.9 1.2L4 4.3l3.1-3.1" stroke="#d0d0d0" stroke-width="1.1" fill="none"/></svg>
<div style="left:490.90px;top:4.50px;width:30.25px;height:18.00px;background:#2b2b2b;border-radius:4px;"></div>
<svg class="a" style="left:494.00px;top:5.60px" width="16" height="16" viewBox="0 0 16 16"><rect x="0.2" y="0.2" width="14.8" height="14.8" rx="1.4" fill="#ececec"/><path d="M2.9 1.7H13.4V12.4Z" fill="#1b1b1b"/><circle cx="11.2" cy="5" r="1.6" fill="#f4f4f4"/><path d="M1.9 13.4H7.8L5 6.8Z" fill="#787878"/></svg>
<svg class="a" style="left:511.10px;top:11.30px" width="8" height="6" viewBox="0 0 8 6"><path d="M0.9 1.2L4 4.3l3.1-3.1" stroke="#d0d0d0" stroke-width="1.1" fill="none"/></svg>
<div style="left:7.10px;top:28.75px;width:19.00px;height:18.50px;background:#4772b3;border-radius:3px 0 0 3px;"></div>
<div style="left:26.60px;top:28.75px;width:18.50px;height:18.50px;background:#545454;"></div>
<div style="left:45.60px;top:28.75px;width:18.50px;height:18.50px;background:#545454;border-radius:0 3px 3px 0;"></div>
<svg class="a" style="left:7.10px;top:28.75px" width="19" height="19" viewBox="0 0 19 19"><rect x="2.5" y="2.3" width="14" height="13.8" rx="1.2" fill="none" stroke="#e6eeff" stroke-width="1.6" stroke-dasharray="2.35 1.9" stroke-dashoffset="1.1"/></svg>
<svg class="a" style="left:26.60px;top:28.75px" width="19" height="19" viewBox="0 0 19 19"><path d="M6.6 1.9H16.3V10.9H12V16.3H2.1V6.6H6.6Z" fill="#c8c8c8"/></svg>
<svg class="a" style="left:45.60px;top:28.75px" width="19" height="19" viewBox="0 0 19 19"><path d="M6.4 1.9H16.4V11.2H12.2V6.4H6.4Z" fill="#c8c8c8"/><path d="M2.6 7.6V15.6H11.4" fill="none" stroke="#bdbdbd" stroke-width="1.5" stroke-dasharray="1.7 2.1"/></svg>
<div style="left:7.10px;top:59.50px;width:39.00px;height:33.00px;background:#4772b3;border-radius:4px 4px 0 0;"></div>
<svg class="a" style="left:13.80px;top:64.50px" width="31" height="30" viewBox="0 0 31 30"><rect x="0.7" y="1.2" width="22.4" height="21.6" rx="2" fill="none" stroke="#e2a83c" stroke-width="1.4" stroke-dasharray="3.2 2.3" stroke-dashoffset="1.6"/><path d="M8.2 6.6L16.8 14L12.2 14.6L8.7 18.2Z" fill="#f4f6fb"/><path d="M30 26.2V29H27.2Z" fill="#9db9e8"/></svg>
<div style="left:7.10px;top:93.00px;width:39.00px;height:34.25px;background:#232323;border-radius:0 0 4px 4px;box-shadow:0 0 0 0.6px #333;"></div>
<svg class="a" style="left:13.80px;top:98.62px" width="24" height="24" viewBox="0 0 24 24"><circle cx="12" cy="12" r="10.9" fill="none" stroke="#9a2f3c" stroke-width="1.5"/><circle cx="12" cy="12" r="10.9" fill="none" stroke="#f2f2f2" stroke-width="1.5" stroke-dasharray="5.6 2.96" stroke-dashoffset="2.8"/><path d="M4.6 12H9.8M14.2 12H19.4M12 4.6V9.8M12 14.2V19.4" stroke="#b0b0b0" stroke-width="1.3" fill="none"/></svg>
<div style="left:7.10px;top:133.50px;width:39.00px;height:33.50px;background:#232323;border-radius:4px 4px 0 0;box-shadow:0 0 0 0.6px #333;"></div>
<svg class="a" style="left:13.80px;top:138.75px" width="24" height="24" viewBox="0 0 24 24"><g fill="#ececec"><path d="M12 0.6L15.1 5H8.9Z"/><rect x="11.2" y="6" width="1.6" height="3.4"/><g transform="rotate(90 12 12)"><path d="M12 0.6L15.1 5H8.9Z"/><rect x="11.2" y="6" width="1.6" height="3.4"/></g><g transform="rotate(180 12 12)"><path d="M12 0.6L15.1 5H8.9Z"/><rect x="11.2" y="6" width="1.6" height="3.4"/></g><g transform="rotate(270 12 12)"><path d="M12 0.6L15.1 5H8.9Z"/><rect x="11.2" y="6" width="1.6" height="3.4"/></g></g></svg>
<div style="left:7.10px;top:167.50px;width:39.00px;height:34.50px;background:#232323;border-radius:0 0 0 0;box-shadow:0 0 0 0.6px #333;"></div>
<svg class="a" style="left:13.80px;top:173.25px" width="24" height="24" viewBox="0 0 24 24"><g fill="none" stroke="#e0e0e0" stroke-width="1.2"><path d="M3.4 11.4A8.7 8.7 0 0 1 18.6 6.2"/><path d="M20.6 12.6A8.7 8.7 0 0 1 5.4 17.8"/></g><path d="M0.4 11L6.2 11L3.3 15.4Z" fill="#ececec"/><path d="M23.6 13L17.8 13L20.7 8.6Z" fill="#ececec"/><path d="M12 8.2L15.8 12L12 15.8L8.2 12Z" fill="#a8a8a8"/></svg>
<div style="left:7.10px;top:202.50px;width:39.00px;height:33.50px;background:#232323;border-radius:0 0 0 0;box-shadow:0 0 0 0.6px #333;"></div>
<svg class="a" style="left:13.80px;top:207.75px" width="24" height="24" viewBox="0 0 24 24"><path d="M4.2 7.6V3.6H20.6V20H16.8" fill="none" stroke="#a8a8a8" stroke-width="1.3"/><rect x="3.4" y="11.8" width="9" height="8.6" fill="#ececec"/><path d="M13.4 10.6L17.4 6.6" stroke="#e4e4e4" stroke-width="1.2"/><path d="M18.6 5.4L14.8 6L18 9.2Z" fill="#ececec"/></svg>
<div style="left:7.10px;top:236.50px;width:39.00px;height:34.50px;background:#232323;border-radius:0 0 4px 4px;box-shadow:0 0 0 0.6px #333;"></div>
<svg class="a" style="left:13.80px;top:242.25px" width="24" height="24" viewBox="0 0 24 24"><circle cx="12" cy="12" r="9.3" fill="none" stroke="#dcdcdc" stroke-width="1.2" stroke-dasharray="8.6 6" stroke-dashoffset="-3"/><g fill="#ececec"><path d="M12 1L14.9 5.2H9.1Z"/><path d="M12 23L14.9 18.8H9.1Z"/><path d="M1 12L5.2 9.1V14.9Z"/><path d="M23 12L18.8 9.1V14.9Z"/><rect x="7.8" y="7.8" width="8.4" height="8.4" rx="1.3"/></g></svg>
<div style="left:7.10px;top:277.50px;width:39.00px;height:33.50px;background:#232323;border-radius:4px 4px 4px 4px;box-shadow:0 0 0 0.6px #333;"></div>
<svg class="a" style="left:12.30px;top:281.75px" width="31" height="28" viewBox="0 0 31 28"><path d="M3.6 17.4L15.6 5.4L18.8 8.6L6.8 20.6L2.6 21.6Z" fill="#ececec"/><path d="M16.6 4.4L17.8 3.2Q18.6 2.6 19.4 3.3L20.9 4.8Q21.6 5.6 20.9 6.4L19.8 7.6Z" fill="#ececec"/><path d="M3.6 21.2C7 24.6 10.6 23.6 13.6 20.6C16.6 17.6 20.6 17.2 23.8 22" fill="none" stroke="#78c6ac" stroke-width="1.5" stroke-linecap="round"/><path d="M30.6 23.4V27.6H26.4Z" fill="#8e8e8e"/></svg>
<div style="left:7.10px;top:317.25px;width:39.00px;height:31.85px;background:#232323;border-radius:4px 4px 4px 4px;box-shadow:0 0 0 0.6px #333;"></div>
<svg class="a" style="left:11.30px;top:321.68px" width="26" height="24" viewBox="0 0 26 24"><g fill="none" stroke="#e0e0e0" stroke-width="1.1" stroke-linejoin="round"><path d="M6.6 6.6L11 2.4H24.6V15.4L20 20.4H6.6Z"/><path d="M6.6 6.6H20V20.4M20 6.6L24.6 2.4"/><path d="M1.4 12.6L20 6.8"/></g><circle cx="1.6" cy="12.6" r="1.5" fill="#c4b8f4"/></svg>
<div style="left:7.10px;top:356.50px;width:39.00px;height:32.60px;background:#232323;border-radius:4px 4px 0 0;box-shadow:0 0 0 0.6px #333;"></div>
<svg class="a" style="left:13.80px;top:361.30px" width="24" height="24" viewBox="0 0 24 24"><path d="M7.6 19.6C5 16.4 3.6 13.6 3.6 11.2C3.6 9.6 5.4 9.2 6.2 10.6L6.6 6.6C6.8 4.8 9 4.8 9.2 6.4C9.4 4 12.2 4 12.4 6.2C12.8 4.4 15.4 4.6 15.6 6.6C16.2 5.4 18.4 5.8 18.4 7.6C18.8 11.6 18.6 15.6 17 19.6Z" fill="none" stroke="#e4e4e4" stroke-width="1.25" stroke-linejoin="round"/></svg>
<div style="left:7.10px;top:389.50px;width:39.00px;height:36.00px;background:#232323;border-radius:0 0 0 0;box-shadow:0 0 0 0.6px #333;"></div>
<svg class="a" style="left:13.80px;top:396.00px" width="24" height="24" viewBox="0 0 24 24"><g fill="none" stroke="#e4e4e4" stroke-width="1.2" stroke-linejoin="round" stroke-linecap="round"><path d="M5 13.6L12.6 21.4L18.4 18.4C19.2 15.4 18.4 12.6 16.2 10.2L13.4 7.6C12 6.2 10.2 7.8 11.4 9.4L13.2 12.4L8.6 12.8C7 11.8 5.2 11.6 5 13.6Z"/><path d="M10.4 4.2Q12.6 2.4 14.8 4"/><path d="M2.4 13V15.2H4"/><path d="M12.6 1.4H14.6V3"/></g><circle cx="11.6" cy="11.4" r="1.4" fill="#bbb"/></svg>
<div style="left:7.10px;top:426.00px;width:39.00px;height:33.50px;background:#232323;border-radius:0 0 4px 4px;box-shadow:0 0 0 0.6px #333;"></div>
<svg class="a" style="left:13.80px;top:431.25px" width="24" height="24" viewBox="0 0 24 24"><g fill="none" stroke="#e4e4e4" stroke-width="1.2" stroke-linecap="round"><path d="M10.6 1.6L11.4 3.6H13.4"/><path d="M7 10.4C8.2 6.6 13 5.6 15.6 9.6"/><path d="M4.6 12.2C7.4 8.4 13.4 7.4 17.8 12.6"/><path d="M9.8 12.4C10.8 9.8 13.4 10 14.4 12.4"/></g></svg>
<div class="a" style="left:487.00px;top:61.00px;width:23px;height:23px;border-radius:50%;background:#272727"></div>
<div class="a" style="left:487.00px;top:91.50px;width:23px;height:23px;border-radius:50%;background:#272727"></div>
<svg class="a" style="left:488.00px;top:63.00px" width="20" height="20" viewBox="0 0 20 20"><circle cx="12.2" cy="7.6" r="5.9" fill="#d4d4d4"/><path d="M7.6 12.4L2.4 17.4" stroke="#d4d4d4" stroke-width="2.2" stroke-linecap="round"/><path d="M9.2 7.6H15.2M12.2 4.6V10.6" stroke="#2a2a2a" stroke-width="1.2"/></svg>
<svg class="a" style="left:488.70px;top:93.00px" width="20" height="20" viewBox="0 0 20 20"><path d="M6.8 17.6C4.6 15.6 3.2 13.6 1.6 11.6C0.8 10.2 2.4 9.2 3.6 10.2L5.6 11.8L4.6 4.6C4.4 3 6.4 2.6 6.8 4.2L8 9L8.4 2.4C8.5 0.8 10.6 0.8 10.7 2.4L11 9L12.4 3.4C12.8 1.9 14.8 2.4 14.5 4L13.6 10L15.6 6.6C16.4 5.2 18.2 6.2 17.5 7.7L15 14.4C14.4 16.4 13 17.8 10.6 18.2C9.2 18.4 7.8 18.2 6.8 17.6Z" fill="#dcdcdc"/></svg>
<svg class="a" style="left:514.50px;top:67.50px" width="6" height="11" viewBox="0 0 6 11"><path d="M5.2 0.8L1 5.5l4.2 4.7" stroke="#aaa" stroke-width="1" fill="none"/></svg>
</div>
<div class="ed" style="left:1.5px;top:498px;width:1597px;height:351.5px;background:#1d1d1d">
<svg class="a" style="left:0;top:0" width="1597" height="351.5" viewBox="1.5 498 1597 351.5">
<defs>
<linearGradient id="lg1" gradientUnits="userSpaceOnUse" x1="502.6" y1="655.1" x2="542.6" y2="613"><stop offset="0.25" stop-color="#a1a1a1"/><stop offset="0.75" stop-color="#c7c729"/></linearGradient>
<linearGradient id="lg3" gradientUnits="userSpaceOnUse" x1="708.4" y1="603.9" x2="738.7" y2="597.9"><stop offset="0.25" stop-color="#c7c729"/><stop offset="0.75" stop-color="#a1a1a1"/></linearGradient>
<linearGradient id="lg4" gradientUnits="userSpaceOnUse" x1="906.7" y1="597.9" x2="951.1" y2="613.9"><stop offset="0.25" stop-color="#a1a1a1"/><stop offset="0.75" stop-color="#c7c729"/></linearGradient>
<filter id="nsh" x="-10%" y="-40%" width="120%" height="200%"><feGaussianBlur stdDeviation="3"/></filter>
</defs>
<g fill="#2b2b2b"><rect x="28.05" y="578.00" width="1.4" height="1.4"/><rect x="28.05" y="698.00" width="1.4" height="1.4"/><rect x="28.05" y="818.00" width="1.4" height="1.4"/><rect x="148.05" y="578.00" width="1.4" height="1.4"/><rect x="148.05" y="698.00" width="1.4" height="1.4"/><rect x="148.05" y="818.00" width="1.4" height="1.4"/><rect x="268.05" y="578.00" width="1.4" height="1.4"/><rect x="268.05" y="698.00" width="1.4" height="1.4"/><rect x="268.05" y="818.00" width="1.4" height="1.4"/><rect x="388.05" y="578.00" width="1.4" height="1.4"/><rect x="388.05" y="698.00" width="1.4" height="1.4"/><rect x="388.05" y="818.00" width="1.4" height="1.4"/><rect x="508.05" y="578.00" width="1.4" height="1.4"/><rect x="508.05" y="698.00" width="1.4" height="1.4"/><rect x="508.05" y="818.00" width="1.4" height="1.4"/><rect x="628.05" y="578.00" width="1.4" height="1.4"/><rect x="628.05" y="698.00" width="1.4" height="1.4"/><rect x="628.05" y="818.00" width="1.4" height="1.4"/><rect x="748.05" y="578.00" width="1.4" height="1.4"/><rect x="748.05" y="698.00" width="1.4" height="1.4"/><rect x="748.05" y="818.00" width="1.4" height="1.4"/><rect x="868.05" y="578.00" width="1.4" height="1.4"/><rect x="868.05" y="698.00" width="1.4" height="1.4"/><rect x="868.05" y="818.00" width="1.4" height="1.4"/><rect x="988.05" y="578.00" width="1.4" height="1.4"/><rect x="988.05" y="698.00" width="1.4" height="1.4"/><rect x="988.05" y="818.00" width="1.4" height="1.4"/><rect x="1108.05" y="578.00" width="1.4" height="1.4"/><rect x="1108.05" y="698.00" width="1.4" height="1.4"/><rect x="1108.05" y="818.00" width="1.4" height="1.4"/><rect x="1228.05" y="578.00" width="1.4" height="1.4"/><rect x="1228.05" y="698.00" width="1.4" height="1.4"/><rect x="1228.05" y="818.00" width="1.4" height="1.4"/><rect x="1348.05" y="578.00" width="1.4" height="1.4"/><rect x="1348.05" y="698.00" width="1.4" height="1.4"/><rect x="1348.05" y="818.00" width="1.4" height="1.4"/><rect x="1468.05" y="578.00" width="1.4" height="1.4"/><rect x="1468.05" y="698.00" width="1.4" height="1.4"/><rect x="1468.05" y="818.00" width="1.4" height="1.4"/><rect x="1588.05" y="578.00" width="1.4" height="1.4"/><rect x="1588.05" y="698.00" width="1.4" height="1.4"/><rect x="1588.05" y="818.00" width="1.4" height="1.4"/></g>
<path d="M307.2 654.1C320.7 654.1 320.7 655 334.2 655" fill="none" stroke="#111" stroke-width="4.6"/>
<path d="M502.6 655.1C522.6 655.1 522.6 613 542.6 613" fill="none" stroke="#111" stroke-width="4.6"/>
<path d="M502.6 655.1C620.2 655.1 620.2 655.1 737.8 655.1" fill="none" stroke="#111" stroke-width="4.6"/>
<path d="M708.4 603.9C723.5 603.9 723.5 597.9 738.7 597.9" fill="none" stroke="#111" stroke-width="4.6"/>
<path d="M906.7 597.9C928.9 597.9 928.9 613.9 951.1 613.9" fill="none" stroke="#111" stroke-width="4.6"/>
<path d="M905.8 655.1C928.5 655.1 928.5 632 951.1 632" fill="none" stroke="#111" stroke-width="4.6"/>
<path d="M1117 623C1138.0 623 1138.0 696.4 1159.1 696.4" fill="none" stroke="#111" stroke-width="4.6"/>
<path d="M283 709.4C723.5 709.4 723.5 709.4 1164.1 709.4" fill="none" stroke="#111" stroke-width="4.6"/>
<path d="M1327.5 696.4C1349.7 696.4 1349.7 696.4 1371.9 696.4" fill="none" stroke="#111" stroke-width="4.6"/>
<path d="M1371.9 696.4C1392.3 696.4 1392.3 652.4 1412.8 652.4" fill="none" stroke="#111" stroke-width="4.6"/>
<path d="M1371.9 696.4C1393.2 696.4 1393.2 730.6 1414.6 730.6" fill="none" stroke="#111" stroke-width="4.6"/>
<path d="M307.2 654.1C320.7 654.1 320.7 655 334.2 655" fill="none" stroke="#a1a1a1" stroke-width="2.9"/>
<path d="M502.6 655.1C522.6 655.1 522.6 613 542.6 613" fill="none" stroke="url(#lg1)" stroke-width="2.9"/>
<path d="M502.6 655.1C620.2 655.1 620.2 655.1 737.8 655.1" fill="none" stroke="#a1a1a1" stroke-width="2.9"/>
<path d="M708.4 603.9C723.5 603.9 723.5 597.9 738.7 597.9" fill="none" stroke="url(#lg3)" stroke-width="2.9"/>
<path d="M906.7 597.9C928.9 597.9 928.9 613.9 951.1 613.9" fill="none" stroke="url(#lg4)" stroke-width="2.9"/>
<path d="M905.8 655.1C928.5 655.1 928.5 632 951.1 632" fill="none" stroke="#a1a1a1" stroke-width="2.9"/>
<path d="M1117 623C1138.0 623 1138.0 696.4 1159.1 696.4" fill="none" stroke="#c7c729" stroke-width="2.9"/>
<path d="M283 709.4C723.5 709.4 723.5 709.4 1164.1 709.4" fill="none" stroke="#c7c729" stroke-width="2.9"/>
<path d="M1327.5 696.4C1349.7 696.4 1349.7 696.4 1371.9 696.4" fill="none" stroke="#c7c729" stroke-width="2.9"/>
<path d="M1371.9 696.4C1392.3 696.4 1392.3 652.4 1412.8 652.4" fill="none" stroke="#c7c729" stroke-width="2.9"/>
<path d="M1371.9 696.4C1393.2 696.4 1393.2 730.6 1414.6 730.6" fill="none" stroke="#c7c729" stroke-width="2.9"/>
<rect x="18.7" y="637.1" width="288.5" height="36.8" rx="18.4" fill="#000" opacity="0.55" filter="url(#nsh)"/>
<rect x="10.7" y="708.1" width="287.4" height="56.0" rx="28.0" fill="#000" opacity="0.55" filter="url(#nsh)"/>
<rect x="334.2" y="638.4" width="168.4" height="36.4" rx="18.2" fill="#000" opacity="0.55" filter="url(#nsh)"/>
<rect x="541.3" y="587.6" width="167.1" height="35.8" rx="17.9" fill="#000" opacity="0.55" filter="url(#nsh)"/>
<rect x="738.7" y="581.4" width="168.0" height="36.1" rx="18.1" fill="#000" opacity="0.55" filter="url(#nsh)"/>
<rect x="737.8" y="638.5" width="168.0" height="36.2" rx="18.1" fill="#000" opacity="0.55" filter="url(#nsh)"/>
<rect x="949.3" y="606.5" width="168.0" height="36.2" rx="18.1" fill="#000" opacity="0.55" filter="url(#nsh)"/>
<rect x="1159.0" y="679.5" width="168.3" height="36.2" rx="18.1" fill="#000" opacity="0.55" filter="url(#nsh)"/>
<rect x="1411.0" y="644.3" width="167.7" height="36.2" rx="18.1" fill="#000" opacity="0.55" filter="url(#nsh)"/>
<rect x="1413.0" y="723.4" width="168.0" height="36.2" rx="18.1" fill="#000" opacity="0.55" filter="url(#nsh)"/>
<rect x="18.7" y="635.6" width="288.5" height="36.8" rx="18.4" fill="#5c3636" stroke="#151515" stroke-width="0.8"/>
<path d="M37.0 649.4l5.2 5.2l-5.2 5.2" fill="none" stroke="#e8e8e8" stroke-width="1.15"/>
<path d="M292.4 649.4v9.6M295.1 649.4v9.6" fill="none" stroke="#fff" stroke-opacity="0.28" stroke-width="0.9"/>
<rect x="10.7" y="706.6" width="287.4" height="56.0" rx="28.0" fill="#84304b" stroke="#151515" stroke-width="0.8"/>
<path d="M29.4 730.0l5.2 5.2l-5.2 5.2" fill="none" stroke="#e8e8e8" stroke-width="1.15"/>
<path d="M284.4 730.0v9.6M287.1 730.0v9.6" fill="none" stroke="#fff" stroke-opacity="0.28" stroke-width="0.9"/>
<rect x="334.2" y="636.9" width="168.4" height="36.4" rx="18.2" fill="#432a5b" stroke="#151515" stroke-width="0.8"/>
<path d="M352.6 650.5l5.2 5.2l-5.2 5.2" fill="none" stroke="#e8e8e8" stroke-width="1.15"/>
<path d="M488.5 650.5v9.6M491.2 650.5v9.6" fill="none" stroke="#fff" stroke-opacity="0.28" stroke-width="0.9"/>
<rect x="541.3" y="586.1" width="167.1" height="35.8" rx="17.9" fill="#77771f" stroke="#151515" stroke-width="0.8"/>
<path d="M559.6 599.4l5.2 5.2l-5.2 5.2" fill="none" stroke="#e8e8e8" stroke-width="1.15"/>
<path d="M694.7 599.4v9.6M697.4 599.4v9.6" fill="none" stroke="#fff" stroke-opacity="0.28" stroke-width="0.9"/>
<rect x="738.7" y="579.9" width="168.0" height="36.1" rx="18.1" fill="#432a5b" stroke="#151515" stroke-width="0.8"/>
<path d="M757.9 593.4l5.2 5.2l-5.2 5.2" fill="none" stroke="#e8e8e8" stroke-width="1.15"/>
<path d="M892.9 593.4v9.6M895.6 593.4v9.6" fill="none" stroke="#fff" stroke-opacity="0.28" stroke-width="0.9"/>
<rect x="737.8" y="637.0" width="168.0" height="36.2" rx="18.1" fill="#432a5b" stroke="#151515" stroke-width="0.8"/>
<path d="M756.6 650.5l5.2 5.2l-5.2 5.2" fill="none" stroke="#e8e8e8" stroke-width="1.15"/>
<path d="M891.5 650.5v9.6M894.2 650.5v9.6" fill="none" stroke="#fff" stroke-opacity="0.28" stroke-width="0.9"/>
<rect x="949.3" y="605.0" width="168.0" height="36.2" rx="18.1" fill="#23658e" stroke="#151515" stroke-width="0.8"/>
<path d="M967.7 618.5l5.2 5.2l-5.2 5.2" fill="none" stroke="#e8e8e8" stroke-width="1.15"/>
<path d="M1103.1 618.5v9.6M1105.8 618.5v9.6" fill="none" stroke="#fff" stroke-opacity="0.28" stroke-width="0.9"/>
<rect x="1159.0" y="678.0" width="168.3" height="36.2" rx="18.1" fill="#77771f" stroke="#151515" stroke-width="0.8"/>
<path d="M1177.1 691.5l5.2 5.2l-5.2 5.2" fill="none" stroke="#e8e8e8" stroke-width="1.15"/>
<path d="M1313.0 691.5v9.6M1315.7 691.5v9.6" fill="none" stroke="#fff" stroke-opacity="0.28" stroke-width="0.9"/>
<rect x="1411.0" y="642.8" width="167.7" height="36.2" rx="18.1" fill="#48202b" stroke="#151515" stroke-width="0.8"/>
<path d="M1428.6 656.3l5.2 5.2l-5.2 5.2" fill="none" stroke="#e8e8e8" stroke-width="1.15"/>
<path d="M1564.4 656.3v9.6M1567.1 656.3v9.6" fill="none" stroke="#fff" stroke-opacity="0.28" stroke-width="0.9"/>
<rect x="1413.0" y="721.9" width="168.0" height="36.2" rx="18.1" fill="#48202b" stroke="#151515" stroke-width="0.8"/>
<path d="M1430.5 735.4l5.2 5.2l-5.2 5.2" fill="none" stroke="#e8e8e8" stroke-width="1.15"/>
<path d="M1566.7 735.4v9.6M1569.4 735.4v9.6" fill="none" stroke="#fff" stroke-opacity="0.28" stroke-width="0.9"/>
<circle cx="18.7" cy="654.1" r="4.9" fill="#c7c729" stroke="#151515" stroke-width="1"/>
<circle cx="301.3" cy="641" r="4.9" fill="#c7c729" stroke="#151515" stroke-width="1"/>
<circle cx="307.2" cy="654.1" r="4.9" fill="#a1a1a1" stroke="#151515" stroke-width="1"/>
<circle cx="301.3" cy="667.1" r="4.9" fill="#c7c729" stroke="#151515" stroke-width="1"/>
<circle cx="283" cy="709.4" r="4.9" fill="#c7c729" stroke="#151515" stroke-width="1"/>
<circle cx="293" cy="717.2" r="4.9" fill="#a1a1a1" stroke="#151515" stroke-width="1"/>
<circle cx="298.1" cy="728.4" r="4.9" fill="#c7c729" stroke="#151515" stroke-width="1"/>
<circle cx="298.1" cy="740.9" r="4.9" fill="#c7c729" stroke="#151515" stroke-width="1"/>
<circle cx="293" cy="751.9" r="4.9" fill="#c7c729" stroke="#151515" stroke-width="1"/>
<circle cx="283" cy="759.6" r="4.9" fill="#c7c729" stroke="#151515" stroke-width="1"/>
<circle cx="334.2" cy="655" r="4.9" fill="#a1a1a1" stroke="#151515" stroke-width="1"/>
<circle cx="502.6" cy="655.1" r="4.9" fill="#a1a1a1" stroke="#151515" stroke-width="1"/>
<circle cx="542.8" cy="594.7" r="4.9" fill="#a1a1a1" stroke="#151515" stroke-width="1"/>
<circle cx="542.6" cy="613" r="4.9" fill="#c7c729" stroke="#151515" stroke-width="1"/>
<circle cx="708.4" cy="603.9" r="4.9" fill="#c7c729" stroke="#151515" stroke-width="1"/>
<circle cx="738.7" cy="597.9" r="4.9" fill="#a1a1a1" stroke="#151515" stroke-width="1"/>
<circle cx="906.7" cy="597.9" r="4.9" fill="#a1a1a1" stroke="#151515" stroke-width="1"/>
<circle cx="737.8" cy="655.1" r="4.9" fill="#a1a1a1" stroke="#151515" stroke-width="1"/>
<circle cx="905.8" cy="655.1" r="4.9" fill="#a1a1a1" stroke="#151515" stroke-width="1"/>
<circle cx="951.1" cy="613.9" r="4.9" fill="#c7c729" stroke="#151515" stroke-width="1"/>
<circle cx="951.1" cy="632" r="4.9" fill="#a1a1a1" stroke="#151515" stroke-width="1"/>
<circle cx="1117" cy="623" r="4.9" fill="#c7c729" stroke="#151515" stroke-width="1"/>
<circle cx="1164.1" cy="683.1" r="4.9" fill="#a1a1a1" stroke="#151515" stroke-width="1"/>
<circle cx="1159.1" cy="696.4" r="4.9" fill="#c7c729" stroke="#151515" stroke-width="1"/>
<circle cx="1164.1" cy="709.4" r="4.9" fill="#c7c729" stroke="#151515" stroke-width="1"/>
<circle cx="1327.5" cy="696.4" r="4.9" fill="#c7c729" stroke="#151515" stroke-width="1"/>
<circle cx="1371.9" cy="696.4" r="4.9" fill="#c7c729" stroke="#151515" stroke-width="1"/>
<circle cx="1412.8" cy="652.4" r="4.9" fill="#c7c729" stroke="#151515" stroke-width="1"/>
<circle cx="1412.8" cy="670.1" r="4.9" fill="#a1a1a1" stroke="#151515" stroke-width="1"/>
<circle cx="1414.6" cy="730.6" r="4.9" fill="#c7c729" stroke="#151515" stroke-width="1"/>
<circle cx="1414.6" cy="748.5" r="4.9" fill="#a1a1a1" stroke="#151515" stroke-width="1"/>
</svg>
<span style="left:47.40px;top:148.30px;font-size:14px;color:#e8e8e8;letter-spacing:0.076px;">Cryptomatte</span>
<span style="left:39.70px;top:228.90px;font-size:14px;color:#e8e8e8;letter-spacing:-0.244px;">Render Layers</span>
<span style="left:362.90px;top:149.40px;font-size:14px;color:#e8e8e8;letter-spacing:-0.049px;">Dilate/Erode</span>
<span style="left:569.50px;top:98.30px;font-size:14px;color:#e8e8e8;letter-spacing:0.095px;">Invert Color</span>
<span style="left:767.90px;top:92.25px;font-size:14px;color:#e8e8e8;letter-spacing:-0.049px;">Dilate/Erode</span>
<span style="left:766.10px;top:149.40px;font-size:14px;color:#e8e8e8;letter-spacing:-0.058px;">Dilate/Erode</span>
<span style="left:978.10px;top:117.40px;font-size:14px;color:#e8e8e8;letter-spacing:-0.206px;">Set Alpha</span>
<span style="left:1188.40px;top:190.40px;font-size:14px;color:#e8e8e8;letter-spacing:-0.236px;">Alpha Over</span>
<span style="left:1439.70px;top:155.20px;font-size:14px;color:#e8e8e8;letter-spacing:-0.115px;">Composite</span>
<span style="left:1441.50px;top:234.30px;font-size:14px;color:#e8e8e8;letter-spacing:0.031px;">Viewer</span>
<div style="left:6.25px;top:3.25px;width:31.25px;height:19.15px;background:#222;border-radius:4;border:1px solid #2e2e2e;box-sizing:border-box;"></div>
<svg class="a" style="left:10.50px;top:5.00px" width="16" height="16" viewBox="0 0 16 16"><g fill="none" stroke="#8e8e8e" stroke-width="1"><path d="M0.6 4.6V14.4Q0.6 15.4 1.6 15.4H11.4"/><path d="M2.8 2.6V12.4Q2.8 13.2 3.8 13.2H13.4"/></g><rect x="4.8" y="0.4" width="10.8" height="10.8" rx="1.2" fill="#ececec"/><path d="M14.6 1.4V10.2H5.8Z" fill="#1d1d1d"/></svg>
<svg class="a" style="left:27.30px;top:10.80px" width="8" height="6" viewBox="0 0 8 6"><path d="M0.9 1.2L4 4.3l3.1-3.1" stroke="#d0d0d0" stroke-width="1.1" fill="none"/></svg>
<span style="left:49.50px;top:7.38px;font-size:11.3px;color:#e4e4e4;letter-spacing:0.227px;">View</span>
<span style="left:90.40px;top:7.38px;font-size:11.3px;color:#e4e4e4;letter-spacing:0.339px;">Select</span>
<span style="left:139.50px;top:7.38px;font-size:11.3px;color:#e4e4e4;letter-spacing:0.074px;">Add</span>
<span style="left:175.40px;top:7.38px;font-size:11.3px;color:#e4e4e4;letter-spacing:0.161px;">Node</span>
<div style="left:215.40px;top:5.75px;width:14.35px;height:14.15px;background:#4772b3;border-radius:3px;"></div>
<svg class="a" style="left:215.4px;top:5.75px" width="14.35" height="14.15" viewBox="0 0 14.35 14.15"><path d="M3.4 7.4l2.7 2.8l4.9-6" fill="none" stroke="#fff" stroke-width="1.5"/></svg>
<span style="left:233.25px;top:7.38px;font-size:11.3px;color:#e4e4e4;letter-spacing:0.200px;">Use Nodes</span>
<svg class="a" style="left:-1.5px;top:41.5px" width="6" height="11" viewBox="0 0 6 11"><path d="M0.8 0.8L5 5.5L0.8 10.2" stroke="#aaa" stroke-width="1" fill="none"/></svg>
<svg class="a" style="left:16.50px;top:39.50px" width="16" height="16" viewBox="0 0 16 16"><path d="M5 0.4L7.8 8.6V11.4H0.6L4.4 0.4Z" fill="#e0e0e0"/><circle cx="13.2" cy="3" r="2.2" fill="#f0f0f0"/><circle cx="11" cy="11.4" r="3.7" fill="none" stroke="#d6d6d6" stroke-width="1.2"/><circle cx="10" cy="10.4" r="1" fill="#d6d6d6"/></svg>
<span style="left:41.25px;top:41.18px;font-size:11.3px;color:#e4e4e4;letter-spacing:0.116px;">Scene</span>
<svg class="a" style="left:89.5px;top:41.5px" width="6" height="11" viewBox="0 0 6 11"><path d="M0.8 0.8L5 5.5L0.8 10.2" stroke="#ddd" stroke-width="1" fill="none"/></svg>
<svg class="a" style="left:105.00px;top:39.20px" width="16" height="16" viewBox="0 0 16 16"><rect x="2.4" y="0.6" width="9.4" height="5.6" rx="1.6" fill="#e6e6e6"/><rect x="0.3" y="8.8" width="9.4" height="5.8" rx="1.6" fill="#e6e6e6"/><path d="M3.6 3.4H10.6M1.6 11.7H8.4" stroke="#1d1d1d" stroke-width="0.9"/><path d="M12 3.2H13.2Q15.2 3.2 15.2 5.2V10Q15.2 12 13.2 12H10" fill="none" stroke="#c8c8c8" stroke-width="1.1"/></svg>
<span style="left:129.50px;top:41.18px;font-size:11.3px;color:#e4e4e4;letter-spacing:0.280px;">Compositing Nodetree</span>
<svg class="a" style="left:1354.75px;top:5.00px" width="16" height="16" viewBox="0 0 16 16"><g fill="none" stroke="#9a9a9a" stroke-width="1.1" stroke-linejoin="round" stroke-linecap="round"><path d="M0.8 14.3L5.2 9.9"/><path d="M2.6 5.8Q5.6 5.4 8.3 3.2L8.2 1.6Q9.5 0.2 10.6 1.4L13.6 4.5Q14.8 5.6 13.4 6.8L11.8 6.7Q9.6 9.4 9.4 12.4L8 12.4Z"/></g></svg>
<div style="left:1376.20px;top:3.40px;width:82.90px;height:19.00px;background:#545454;border-radius:4px 0 0 4px;"></div>
<span style="left:1392.90px;top:7.38px;font-size:11.3px;color:#e4e4e4;letter-spacing:0.265px;">Backdrop</span>
<div style="left:1459.50px;top:3.40px;width:31.00px;height:19.00px;background:#262626;border-radius:0 4px 4px 0;"></div>
<svg class="a" style="left:1463.00px;top:5.50px" width="16" height="16" viewBox="0 0 16 16"><rect x="0.6" y="0.6" width="14" height="14" rx="1.4" fill="#3b3b3b"/><path d="M2.9 1.7H13.4V12.4Z" fill="#262626"/><circle cx="11.2" cy="5" r="1.4" fill="#444"/><path d="M1.9 13.4H7.8L5 6.8Z" fill="#303030"/></svg>
<svg class="a" style="left:1480.50px;top:10.80px" width="8" height="6" viewBox="0 0 8 6"><path d="M0.9 1.2L4 4.3l3.1-3.1" stroke="#555" stroke-width="1.1" fill="none"/></svg>
<div style="left:1495.80px;top:3.40px;width:19.00px;height:19.00px;background:#545454;border-radius:4px 0 0 4px;"></div>
<svg class="a" style="left:1498.00px;top:5.50px" width="16" height="16" viewBox="0 0 16 16"><path d="M2.6 7.4C2.2 3.2 5 1.6 8 1.6C11.6 1.6 14 4.2 13 8C12.4 10.6 10.6 12.6 8 14.6L6 12.6C8.2 10.8 9.6 9.2 10 7.4C10.4 5.4 9.2 4.4 7.8 4.4C6.4 4.4 5.4 5.2 5.6 7.4Z" fill="none" stroke="#a0a0a0" stroke-width="1.1" stroke-linejoin="round"/></svg>
<div style="left:1515.30px;top:3.40px;width:31.20px;height:19.00px;background:#262626;border-radius:0 4px 4px 0;"></div>
<svg class="a" style="left:1518.90px;top:5.50px" width="16" height="16" viewBox="0 0 16 16"><path d="M0.4 8.8H14.8M0.4 12.8H14.8M4.2 6.4V14.8M10.2 0.6V14.8M8.2 3.8H14.8" stroke="#d8d8d8" stroke-width="1.1" fill="none"/><rect x="0.8" y="0.8" width="5.8" height="5.8" rx="0.8" fill="#ececec"/></svg>
<svg class="a" style="left:1536.00px;top:10.80px" width="8" height="6" viewBox="0 0 8 6"><path d="M0.9 1.2L4 4.3l3.1-3.1" stroke="#d0d0d0" stroke-width="1.1" fill="none"/></svg>
<div style="left:1551.70px;top:3.40px;width:18.80px;height:19.00px;background:#4772b3;border-radius:4px 0 0 4px;"></div>
<svg class="a" style="left:1551.70px;top:3.40px" width="19" height="19" viewBox="0 0 19 19"><defs><mask id="ovm"><rect width="19" height="19" fill="#fff"/><circle cx="11.6" cy="6.8" r="5.9" fill="#000"/></mask></defs><circle cx="11.6" cy="6.8" r="4.8" fill="#fafcff"/><circle cx="6.9" cy="11.6" r="4.7" fill="none" stroke="#e6f0ff" stroke-width="1.25" mask="url(#ovm)"/><ellipse cx="9.8" cy="8.7" rx="1" ry="0.6" transform="rotate(40 9.8 8.7)" fill="#456"/></svg>
<div style="left:1570.50px;top:3.40px;width:20.20px;height:19.00px;background:#262626;border-radius:0 4px 4px 0;"></div>
<svg class="a" style="left:1576.10px;top:10.80px" width="8" height="6" viewBox="0 0 8 6"><path d="M0.9 1.2L4 4.3l3.1-3.1" stroke="#d0d0d0" stroke-width="1.1" fill="none"/></svg>
<div style="left:1593.20px;top:35.00px;width:3.30px;height:310.00px;background:#2c2c2c;border-radius:1.5px;"></div>
<div style="left:6.50px;top:348.20px;width:1582.00px;height:2.60px;background:#2c2c2c;border-radius:1.3px;"></div>
<svg class="a" style="left:1591.8px;top:41.299999999999955px" width="6" height="11" viewBox="0 0 6 11"><path d="M5.2 0.8L1 5.5l4.2 4.7" stroke="#aaa" stroke-width="1" fill="none"/></svg>
</div>
<div style="left:0.00px;top:850.00px;width:1600.00px;height:23.00px;background:#181818;"></div>
<svg class="a" style="left:9.00px;top:855.20px" width="13" height="17" viewBox="0 0 13 17"><rect x="0.7" y="0.7" width="11.6" height="15.4" rx="4.2" fill="none" stroke="#8c8c8c" stroke-width="1.2"/><path d="M0.4 7.4V4.6Q0.4 0.4 4.6 0.4H5.4V7.4Z" fill="#9a9a9a"/></svg>
<span style="left:26.00px;top:858.28px;font-size:11.3px;color:#989898;letter-spacing:0.121px;">Change Frame</span>
<svg class="a" style="left:112.20px;top:855.20px" width="13" height="17" viewBox="0 0 13 17"><rect x="0.7" y="0.7" width="11.6" height="15.4" rx="4.2" fill="none" stroke="#8c8c8c" stroke-width="1.2"/><rect x="5" y="2.4" width="3" height="5.4" rx="1.2" fill="#9a9a9a"/></svg>
<span style="left:129.70px;top:858.28px;font-size:11.3px;color:#989898;letter-spacing:-0.066px;">Pan View</span>
<svg class="a" style="left:186.20px;top:855.20px" width="13" height="17" viewBox="0 0 13 17"><rect x="0.7" y="0.7" width="11.6" height="15.4" rx="4.2" fill="none" stroke="#8c8c8c" stroke-width="1.2"/><path d="M12.6 7.4V4.6Q12.6 0.4 8.4 0.4H7.6V7.4Z" fill="#9a9a9a"/></svg>
<span style="left:203.60px;top:858.28px;font-size:11.3px;color:#989898;letter-spacing:0.027px;">Mask</span>
<div style="left:687.60px;top:853.50px;width:25.20px;height:18.75px;background:#2b4878;border-radius:4px 0 0 4px;"></div>
<div style="left:712.80px;top:853.50px;width:135.40px;height:18.75px;background:#1b2232;border-radius:0 4px 4px 0;"></div>
<svg class="a" style="left:691.50px;top:855.00px" width="16" height="16" viewBox="0 0 16 16"><path d="M2 0.4H13.6Q15.6 0.4 15.6 2.4V10.6Q15.6 12.6 13.6 12.6H7L3.6 15.8V12.6H2Q0.2 12.6 0.2 10.6V2.4Q0.2 0.4 2 0.4Z" fill="#fff"/><path d="M6 5.2H9V10H10.4M5.8 10H9" stroke="#213964" stroke-width="1.5" fill="none"/><rect x="6.8" y="2" width="2.2" height="1.9" fill="#213964"/></svg>
<span style="left:716.90px;top:858.28px;font-size:11.3px;color:#f0f0f0;letter-spacing:0.390px;">Saved "__final.blend"</span>
<span style="left:867.80px;top:858.28px;font-size:11.3px;color:#989898;letter-spacing:0.442px;">Collection</span>
<span style="left:931.80px;top:858.28px;font-size:11.3px;color:#989898;letter-spacing:0.079px;">Camera</span>
<span style="left:982.70px;top:858.28px;font-size:11.3px;color:#989898;letter-spacing:0.659px;">Verts:23,428</span>
<span style="left:1064.70px;top:858.28px;font-size:11.3px;color:#989898;letter-spacing:0.529px;">Faces:23,426</span>
<span style="left:1150.70px;top:858.28px;font-size:11.3px;color:#989898;letter-spacing:0.530px;">Tris:46,852</span>
<span style="left:1223.80px;top:858.28px;font-size:11.3px;color:#989898;letter-spacing:0.404px;">Objects:1/3</span>
<span style="left:1296.30px;top:858.28px;font-size:11.3px;color:#989898;letter-spacing:0.465px;">Memory: 920.5 MiB</span>
<span style="left:1412.80px;top:858.28px;font-size:11.3px;color:#989898;letter-spacing:0.321px;">VRAM: 1.6/12.0 GiB</span>
<span style="left:1559.00px;top:858.28px;font-size:11.3px;color:#989898;letter-spacing:0.642px;">4.3.2</span>
<span style="left:925.30px;top:857.22px;font-size:12.2px;color:#989898;">|</span>
<span style="left:976.20px;top:857.22px;font-size:12.2px;color:#989898;">|</span>
<span style="left:1058.20px;top:857.22px;font-size:12.2px;color:#989898;">|</span>
<span style="left:1143.90px;top:857.22px;font-size:12.2px;color:#989898;">|</span>
<span style="left:1217.00px;top:857.22px;font-size:12.2px;color:#989898;">|</span>
<span style="left:1289.70px;top:857.22px;font-size:12.2px;color:#989898;">|</span>
<span style="left:1406.10px;top:857.22px;font-size:12.2px;color:#989898;">|</span>
<span style="left:1523.90px;top:857.22px;font-size:12.2px;color:#989898;">|</span>
<span style="left:1552.90px;top:857.22px;font-size:12.2px;color:#989898;">|</span>
<svg class="a" style="left:1531.00px;top:857.00px" width="15" height="15" viewBox="0 0 15 15"><g fill="none" stroke="#929292" stroke-width="1.05"><circle cx="7.4" cy="7.4" r="6.7"/><ellipse cx="7.4" cy="7.4" rx="3" ry="6.7"/><path d="M0.8 7.4H14M1.8 4H13M1.8 10.8H13"/></g></svg>
<span style="left:1546.30px;top:864.90px;font-size:7.5px;color:#989898;">1</span>
</body></html>
